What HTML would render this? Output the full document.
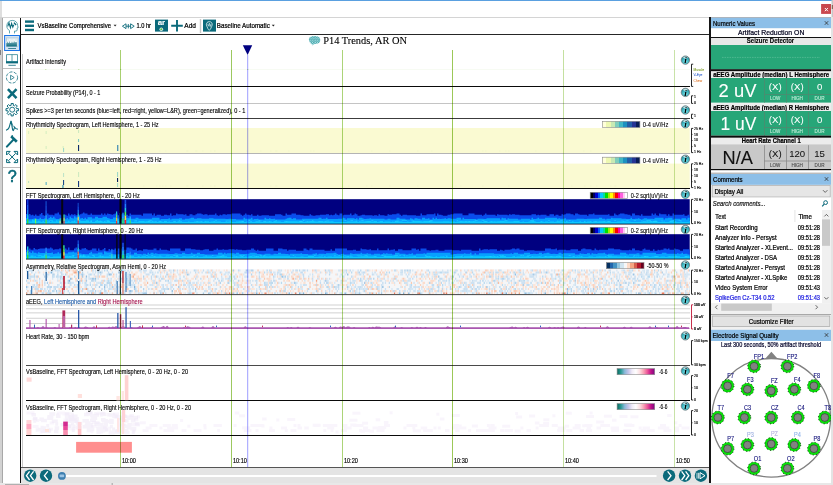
<!DOCTYPE html>
<html><head><meta charset="utf-8"><title>P14 Trends, AR ON</title>
<style>
html,body{margin:0;padding:0;background:#fff;overflow:hidden}
svg{display:block}
text{font-family:"Liberation Sans",sans-serif;white-space:pre}
text.sf{font-family:"Liberation Serif",serif}
</style></head><body>
<svg width="833" height="485" viewBox="0 0 833 485">
<rect x="0" y="0" width="833" height="485" fill="#fff" /><rect x="0" y="0" width="833" height="1" fill="#5aa0e0" /><rect x="0" y="1" width="2" height="17" fill="#dedede" /><rect x="0" y="17" width="3" height="468" fill="#d2d2d2" /><rect x="2" y="18" width="1" height="466" fill="#a8a8a8" /><rect x="0" y="50" width="1" height="5" fill="#808080" /><rect x="2" y="17" width="707" height="1" fill="#d4d4d4" /><rect x="711" y="17" width="120.5" height="1" fill="#aab4be" /><rect x="831.5" y="0" width="1.5" height="17" fill="#c8c8c8" /><rect x="831.8" y="5" width="1.2" height="4" fill="#8a6a5a" /><rect x="831" y="17" width="2" height="468" fill="#e4e4e4" /><rect x="0" y="483" width="833" height="2" fill="#e8e8e8" /><rect x="821.1" y="4" width="9.9" height="9.9" fill="#c9484e" /><path d="M824.9 8l3 3.200M827.900 8l-3 3.200" stroke="#fff" stroke-width="1" fill="none"/><rect x="5" y="484" width="24" height="1" fill="#b0b0b0" /><rect x="111.5" y="483.4" width="1.5" height="1.2" fill="#999" /><rect x="20" y="18" width="1" height="465" fill="#111" /><rect x="21" y="34" width="688" height="1" fill="#262626" /><rect x="22" y="54" width="1" height="413" fill="#c8c8c8" /><rect x="709" y="17" width="2" height="466" fill="#161616" /><rect x="25" y="20.4" width="9" height="2.4" fill="#0b6a7b" /><rect x="25" y="24.6" width="9" height="2.4" fill="#0b6a7b" /><rect x="25" y="28.8" width="9" height="2.4" fill="#0b6a7b" /><text x="37.5" y="27.92" font-size="7" fill="#000" stroke="#000" stroke-width="0.22" textLength="73.5" lengthAdjust="spacingAndGlyphs" >VsBaseline Comprehensive</text><path d="M113.6 24.8h3l-1.5 1.8z" fill="#222"/><g fill="none" stroke="#0b6a7b" stroke-width="0.9"><path d="M126 23.8l-3.6 2.4l3.6 2.4z"/><path d="M130.6 23.8l3.6 2.4l-3.6 2.4z"/><path d="M126 26.2h4.6M128.3 24v4.4"/></g><text x="136.4" y="27.92" font-size="7" fill="#000" stroke="#000" stroke-width="0.22" textLength="14.6" lengthAdjust="spacingAndGlyphs" >1.0 hr</text><rect x="155" y="19.6" width="13" height="12" fill="#0b6a7b" /><text x="161.4" y="25.30" font-size="7.9" fill="#fff" stroke="#fff" stroke-width="0.1" font-weight="bold" text-anchor="middle" >ar</text><circle cx="161.3" cy="29.200" r="1.800" fill="#e8f4f0"/><circle cx="161.300" cy="29.200" r="1.050" fill="#5cc040"/><path d="M177 20v11.4M171.2 25.7h11.6" stroke="#0b6a7b" stroke-width="1.9" fill="none"/><text x="184.3" y="27.92" font-size="7" fill="#000" stroke="#000" stroke-width="0.22" textLength="11.7" lengthAdjust="spacingAndGlyphs" >Add</text><rect x="199.8" y="19" width="1.4" height="14" fill="#c8c8c8" /><rect x="203" y="19.6" width="13" height="12" fill="#0b6a7b" /><path d="M209.300 21.700c-2.100 0-3 1.400-2.900 3c.1 1.500 .900 2.100 1.300 3.400c.3 1.100 .800 1.900 1.600 1.900s1.300-.8 1.600-1.900c.4-1.300 1.200-1.900 1.300-3.400c.1-1.600-.8-3-2.900-3z" fill="none" stroke="#e8f4f6" stroke-width="0.8"/><path d="M207.600 23.800l1 2.400l.8-3l.8 3.400l.9-2.800" fill="none" stroke="#e8f4f6" stroke-width="0.6"/><text x="216.8" y="27.92" font-size="7" fill="#000" stroke="#000" stroke-width="0.22" textLength="53" lengthAdjust="spacingAndGlyphs" >Baseline Automatic</text><path d="M271.8 24.8h3l-1.5 1.8z" fill="#222"/><g fill="none" stroke="#2a8796" stroke-width="0.75"><path d="M9.5 33.4v-2.8c-1.7-1-2.7-2.7-2.7-4.700c0-3.1 2.400-5.500 5.500-5.500s5.300 2.200 5.300 5.100l.5 2.100l-.9 .4v1.900c0 .8-.6 1.200-1.400 1.200h-1.300v2.300"/></g><path d="M7.800 26.400l1.200-3.600l1.400 5l1.200-4.400l1.200 3.800l1-2.400" fill="none" stroke="#0b6a7b" stroke-width="1.05"/><path d="M14 22.600l2 2.400" fill="none" stroke="#0b6a7b" stroke-width="1.4"/><rect x="4.6" y="35.5" width="14.9" height="15" fill="#d3e3f5" stroke="#1b76e6" stroke-width="1"/><defs><linearGradient id="mon" x1="0" y1="0" x2="0" y2="1"><stop offset="0" stop-color="#8fb6c2"/><stop offset="0.6" stop-color="#4a909e"/><stop offset="1" stop-color="#0b6a7b"/></linearGradient></defs><rect x="6.3" y="37.9" width="11.8" height="8.8" fill="#dfeaf0" stroke="#9dbcc6" stroke-width="0.5"/><path d="M6.4 46.600v-3.400l1.200-2.800l1.100 2.400l1.100-3.600l1 3.800l1.200-3.200l1 2.800l1.100-3.400l1 3l.9-1.400l.9 1.600v4.200z" fill="url(#mon)"/><path d="M6.600 43l1-2.600l1.100 2.400l1.100-3.600l1 3.800l1.200-3.200l1 2.800l1.100-3.400l1 3l.9-1.400l.8 1.400" fill="none" stroke="#fff" stroke-width="0.8"/><rect x="8.2" y="48" width="7.8" height="1" fill="#3f8796" /><g fill="none" stroke="#2f8594" stroke-width="0.8"><path d="M6.5 54.6h11v7.6h-11z"/><path d="M12 54.6v6.6"/></g><rect x="6" y="61.2" width="12" height="2.2" fill="#0b6a7b" /><rect x="8.4" y="64.8" width="7.4" height="1" fill="#3f8796" /><rect x="3" y="68" width="17" height="1" fill="#bdbdbd" /><g fill="none" stroke="#0b6a7b" stroke-width="0.9" stroke-opacity="0.85"><circle cx="12" cy="77.5" r="5.6" stroke-dasharray="3.2 1.4"/><path d="M10.6 75.2l3.6 2.3l-3.6 2.3z"/></g><path d="M7.9 89.1l8.6 9M16.5 89.1l-8.6 9" fill="none" stroke="#0b6a7b" stroke-width="2.5"/><path d="M18.41 108.63L18.41 110.77L16.57 110.77L16.05 112.03L17.34 113.34L15.84 114.84L14.53 113.55L13.27 114.07L13.27 115.91L11.13 115.91L11.13 114.07L9.87 113.55L8.56 114.84L7.06 113.34L8.35 112.03L7.83 110.77L5.99 110.77L5.99 108.63L7.83 108.63L8.35 107.37L7.06 106.06L8.56 104.56L9.87 105.85L11.13 105.33L11.13 103.49L13.27 103.49L13.27 105.33L14.53 105.85L15.84 104.56L17.34 106.06L16.05 107.37L16.57 108.63z" fill="none" stroke="#0b6a7b" stroke-width="1" stroke-linejoin="round"/><circle cx="12.2" cy="109.7" r="2.5" fill="none" stroke="#0b6a7b" stroke-width="0.9"/><path d="M6 130.2c1.6-.4 2.4-1 3-2.4l2-7l1.6 8.8c.4 1.4.8 1.4 1.2 0l.8-2.4c.6 1.2 1.6 1.8 3.4 2" fill="none" stroke="#0b6a7b" stroke-width="1.1"/><path d="M11 121l2.4 6" fill="none" stroke="#0b6a7b" stroke-width="0.7"/><path d="M6.900 146.600l6.800-7.200" fill="none" stroke="#0b6a7b" stroke-width="2.1" stroke-linecap="round"/><path d="M11.200 136.400l5.600 5.400" fill="none" stroke="#0b6a7b" stroke-width="2.7"/><path d="M11.200 136.400l1.600-1" fill="none" stroke="#0b6a7b" stroke-width="1.2"/><g fill="none" stroke="#0b6a7b" stroke-width="1"><path d="M6.6 151.4h3.6l-3.6 3.6zM17.6 151.4h-3.6l3.6 3.6zM6.6 162.6h3.6l-3.6-3.6zM17.6 162.6h-3.6l3.6-3.6z"/><path d="M8.6 153.4l7 7.2M15.6 153.4l-7 7.2"/></g><rect x="3" y="167" width="17" height="1" fill="#bdbdbd" /><text x="12.3" y="182.10" font-size="16.2" fill="#0b6a7b" stroke="#0b6a7b" stroke-width="0.55" text-anchor="middle" >?</text><defs><pattern id="mesh" width="2.5" height="2.2" patternUnits="userSpaceOnUse" patternTransform="translate(308.2 36.2)"><rect width="2.5" height="2.2" fill="#168e96"/><ellipse cx="0.7" cy="0.55" rx="0.72" ry="0.5" fill="#e4ffff"/><ellipse cx="1.95" cy="1.65" rx="0.72" ry="0.5" fill="#e4ffff"/></pattern></defs><path d="M309 40.2c-.6-1.8.6-3.4 2.6-3.8c2-.6 4.400-.6 6.200.2c2 .8 2.800 2.600 2.400 4.400c-.4 1.600-2 2.600-3.800 2.800c-1 .2-2 .2-2.800 .4l-1 1.400l-.8-1.400c-1.400-.6-2.400-2.200-2.800-4z" fill="url(#mesh)" fill-opacity="0.92"/><text x="323.2" y="44.20" font-size="10.6" fill="#000" stroke="#000" stroke-width="0.1" class="sf" textLength="83.8" lengthAdjust="spacingAndGlyphs" >P14 Trends, AR ON</text><rect x="26" y="86" width="664" height="1" fill="#0a0a0a" /><rect x="26" y="103" width="664" height="1" fill="#c4c4c4" /><rect x="26" y="118" width="664" height="1" fill="#3c3c3c" /><rect x="26" y="153" width="664" height="1" fill="#b4b4b4" /><rect x="26" y="188" width="664" height="1" fill="#0a0a0a" /><rect x="26" y="365" width="664" height="1" fill="#4a4a4a" /><rect x="26" y="400" width="664" height="1" fill="#0a0a0a" /><rect x="26" y="435" width="664" height="1" fill="#0a0a0a" /><rect x="26" y="69" width="664" height="1" fill="#f7fbf3" /><rect x="45" y="69" width="1.4" height="1" fill="#cfe8b8" /><rect x="61" y="69" width="1.4" height="1" fill="#cfe8b8" /><rect x="78" y="69" width="1.4" height="1" fill="#cfe8b8" /><rect x="120" y="69" width="1.4" height="1" fill="#cfe8b8" /><rect x="247" y="69" width="1.4" height="1" fill="#cfe8b8" /><rect x="26" y="128" width="663.7" height="25" fill="#fafad2" /><rect x="26" y="163.6" width="663.7" height="24.4" fill="#fafad2" /><rect x="78" y="145" width="1.1" height="6" fill="#0d2a6a" /><rect x="117.2" y="145" width="1.1" height="6" fill="#2c7fb0" /><rect x="78" y="139" width="1.1" height="3" fill="#7fc8c0" /><rect x="63" y="148" width="1.1" height="4" fill="#9fd8c8" /><rect x="45.6" y="131" width="1.1" height="3" fill="#d6eec0" /><rect x="28" y="131" width="1.1" height="3" fill="#dcf0c4" /><rect x="45.6" y="146" width="1.1" height="3" fill="#d6eec0" /><rect x="62.6" y="146" width="1.1" height="2" fill="#d6eec0" /><rect x="78" y="130" width="1.1" height="3" fill="#cfeac0" /><rect x="63" y="180" width="1.1" height="5" fill="#1a4a8a" /><rect x="62.4" y="185" width="1.1" height="3" fill="#2a8ab0" /><rect x="78" y="181" width="1.1" height="6" fill="#1a3a80" /><rect x="117" y="178" width="1.1" height="4" fill="#0d2060" /><rect x="117" y="172" width="1.1" height="5" fill="#9fd8c8" /><rect x="45.6" y="182" width="1.1" height="3" fill="#58b0c8" /><rect x="28" y="181" width="1.1" height="2" fill="#bfe4c8" /><rect x="63" y="173" width="1.1" height="4" fill="#bfe4c8" /><rect x="78" y="172" width="1.1" height="5" fill="#cfeac0" /><rect x="117" y="183" width="1.1" height="4" fill="#a8dcc8" /><rect x="310" y="150.5" width="1.5" height="1" fill="#f1f6cc" /><rect x="170" y="185.5" width="1.5" height="1" fill="#f1f6cc" /><rect x="162" y="185.5" width="1.5" height="1" fill="#f1f6cc" /><rect x="371" y="150.5" width="1.5" height="1" fill="#f1f6cc" /><rect x="371" y="185.5" width="1.5" height="1" fill="#f1f6cc" /><rect x="366" y="185.5" width="1.5" height="1" fill="#f1f6cc" /><rect x="450" y="150.5" width="1.5" height="1" fill="#f1f6cc" /><rect x="156" y="185.5" width="1.5" height="1" fill="#f1f6cc" /><rect x="210" y="150.5" width="1.5" height="1" fill="#f1f6cc" /><rect x="210" y="185.5" width="1.5" height="1" fill="#f1f6cc" /><rect x="583" y="150.5" width="1.5" height="1" fill="#f1f6cc" /><rect x="485" y="150.5" width="1.5" height="1" fill="#f1f6cc" /><rect x="165" y="150.5" width="1.5" height="1" fill="#f1f6cc" /><rect x="165" y="185.5" width="1.5" height="1" fill="#f1f6cc" /><rect x="508" y="150.5" width="1.5" height="1" fill="#f1f6cc" /><rect x="508" y="185.5" width="1.5" height="1" fill="#f1f6cc" /><rect x="455" y="150.5" width="1.5" height="1" fill="#f1f6cc" /><rect x="455" y="185.5" width="1.5" height="1" fill="#f1f6cc" /><rect x="571" y="185.5" width="1.5" height="1" fill="#f1f6cc" /><rect x="535" y="150.5" width="1.5" height="1" fill="#f1f6cc" /><rect x="196" y="150.5" width="1.5" height="1" fill="#f1f6cc" /><rect x="214" y="150.5" width="1.5" height="1" fill="#f1f6cc" /><rect x="214" y="185.5" width="1.5" height="1" fill="#f1f6cc" /><rect x="616" y="150.5" width="1.5" height="1" fill="#f1f6cc" /><rect x="460" y="185.5" width="1.5" height="1" fill="#f1f6cc" /><rect x="596" y="185.5" width="1.5" height="1" fill="#f1f6cc" /><rect x="499" y="150.5" width="1.5" height="1" fill="#f1f6cc" /><rect x="288" y="150.5" width="1.5" height="1" fill="#f1f6cc" /><rect x="143" y="150.5" width="1.5" height="1" fill="#f1f6cc" /><rect x="143" y="185.5" width="1.5" height="1" fill="#f1f6cc" /><rect x="195" y="150.5" width="1.5" height="1" fill="#f1f6cc" /><rect x="202" y="150.5" width="1.5" height="1" fill="#f1f6cc" /><rect x="202" y="185.5" width="1.5" height="1" fill="#f1f6cc" /><rect x="614" y="150.5" width="1.5" height="1" fill="#f1f6cc" /><rect x="614" y="185.5" width="1.5" height="1" fill="#f1f6cc" /><rect x="610" y="150.5" width="1.5" height="1" fill="#f1f6cc" /><rect x="610" y="185.5" width="1.5" height="1" fill="#f1f6cc" /><rect x="214" y="150.5" width="1.5" height="1" fill="#f1f6cc" /><rect x="214" y="185.5" width="1.5" height="1" fill="#f1f6cc" /><rect x="260" y="150.5" width="1.5" height="1" fill="#f1f6cc" /><rect x="276" y="150.5" width="1.5" height="1" fill="#f1f6cc" /><rect x="276" y="185.5" width="1.5" height="1" fill="#f1f6cc" /><rect x="505" y="150.5" width="1.5" height="1" fill="#f1f6cc" /><rect x="348" y="150.5" width="1.5" height="1" fill="#f1f6cc" /><rect x="348" y="185.5" width="1.5" height="1" fill="#f1f6cc" /><rect x="482" y="150.5" width="1.5" height="1" fill="#f1f6cc" /><rect x="482" y="185.5" width="1.5" height="1" fill="#f1f6cc" /><rect x="246" y="150.5" width="1.5" height="1" fill="#f1f6cc" /><rect x="246" y="185.5" width="1.5" height="1" fill="#f1f6cc" /><rect x="159" y="150.5" width="1.5" height="1" fill="#f1f6cc" /><rect x="159" y="185.5" width="1.5" height="1" fill="#f1f6cc" /><rect x="186" y="150.5" width="1.5" height="1" fill="#f1f6cc" /><rect x="186" y="185.5" width="1.5" height="1" fill="#f1f6cc" /><rect x="615" y="185.5" width="1.5" height="1" fill="#f1f6cc" /><rect x="270" y="150.5" width="1.5" height="1" fill="#f1f6cc" /><rect x="270" y="185.5" width="1.5" height="1" fill="#f1f6cc" /><rect x="389" y="150.5" width="1.5" height="1" fill="#f1f6cc" /><rect x="389" y="185.5" width="1.5" height="1" fill="#f1f6cc" /><rect x="187" y="150.5" width="1.5" height="1" fill="#f1f6cc" /><rect x="187" y="185.5" width="1.5" height="1" fill="#f1f6cc" /><rect x="590" y="150.5" width="1.5" height="1" fill="#f1f6cc" /><rect x="590" y="185.5" width="1.5" height="1" fill="#f1f6cc" /><rect x="658" y="185.5" width="1.5" height="1" fill="#f1f6cc" /><rect x="431" y="150.5" width="1.5" height="1" fill="#f1f6cc" /><rect x="275" y="150.5" width="1.5" height="1" fill="#f1f6cc" /><rect x="275" y="185.5" width="1.5" height="1" fill="#f1f6cc" /><rect x="313" y="150.5" width="1.5" height="1" fill="#f1f6cc" /><rect x="584" y="185.5" width="1.5" height="1" fill="#f1f6cc" /><rect x="417" y="150.5" width="1.5" height="1" fill="#f1f6cc" /><rect x="417" y="185.5" width="1.5" height="1" fill="#f1f6cc" /><rect x="26" y="199.2" width="663.7" height="24.5" fill="#000080" /><path d="M26 223.7L26.0 214.1L27.5 214.1L27.5 215.3L29.0 215.3L29.0 214.1L30.5 214.1L30.5 215.3L32.0 215.3L32.0 214.8L33.5 214.8L33.5 215.7L35.0 215.7L35.0 214.5L36.5 214.5L36.5 215.7L38.0 215.7L38.0 215.7L39.5 215.7L39.5 214.2L41.0 214.2L41.0 213.0L42.5 213.0L42.5 215.3L44.0 215.3L44.0 215.7L45.5 215.7L45.5 215.7L47.0 215.7L47.0 213.6L48.5 213.6L48.5 214.8L50.0 214.8L50.0 214.8L51.5 214.8L51.5 214.8L53.0 214.8L53.0 215.3L54.5 215.3L54.5 213.6L56.0 213.6L56.0 213.6L57.5 213.6L57.5 212.4L59.0 212.4L59.0 214.5L60.5 214.5L60.5 215.3L62.0 215.3L62.0 215.3L63.5 215.3L63.5 214.8L65.0 214.8L65.0 214.8L66.5 214.8L66.5 215.7L68.0 215.7L68.0 213.6L69.5 213.6L69.5 215.3L71.0 215.3L71.0 214.2L72.5 214.2L72.5 214.8L74.0 214.8L74.0 214.2L75.5 214.2L75.5 215.3L77.0 215.3L77.0 215.3L78.5 215.3L78.5 214.8L80.0 214.8L80.0 214.2L81.5 214.2L81.5 213.6L83.0 213.6L83.0 212.4L84.5 212.4L84.5 213.6L86.0 213.6L86.0 213.6L87.5 213.6L87.5 214.8L89.0 214.8L89.0 214.8L90.5 214.8L90.5 213.6L92.0 213.6L92.0 214.8L93.5 214.8L93.5 214.8L95.0 214.8L95.0 214.8L96.5 214.8L96.5 214.8L98.0 214.8L98.0 214.8L99.5 214.8L99.5 214.8L101.0 214.8L101.0 213.6L102.5 213.6L102.5 214.8L104.0 214.8L104.0 213.6L105.5 213.6L105.5 214.8L107.0 214.8L107.0 213.6L108.5 213.6L108.5 214.1L110.0 214.1L110.0 214.2L111.5 214.2L111.5 214.8L113.0 214.8L113.0 214.2L114.5 214.2L114.5 213.6L116.0 213.6L116.0 213.6L117.5 213.6L117.5 215.3L119.0 215.3L119.0 213.0L120.5 213.0L120.5 214.2L122.0 214.2L122.0 214.2L123.5 214.2L123.5 214.8L125.0 214.8L125.0 214.8L126.5 214.8L126.5 214.8L128.0 214.8L128.0 215.7L129.5 215.7L129.5 213.6L131.0 213.6L131.0 214.8L132.5 214.8L132.5 214.8L134.0 214.8L134.0 214.8L135.5 214.8L135.5 214.8L137.0 214.8L137.0 214.8L138.5 214.8L138.5 214.8L140.0 214.8L140.0 214.8L141.5 214.8L141.5 215.7L143.0 215.7L143.0 213.6L144.5 213.6L144.5 213.6L146.0 213.6L146.0 213.6L147.5 213.6L147.5 213.6L149.0 213.6L149.0 213.6L150.5 213.6L150.5 213.6L152.0 213.6L152.0 215.3L153.5 215.3L153.5 213.6L155.0 213.6L155.0 215.7L156.5 215.7L156.5 214.8L158.0 214.8L158.0 214.8L159.5 214.8L159.5 214.8L161.0 214.8L161.0 215.7L162.5 215.7L162.5 215.7L164.0 215.7L164.0 214.8L165.5 214.8L165.5 214.8L167.0 214.8L167.0 215.3L168.5 215.3L168.5 215.3L170.0 215.3L170.0 213.6L171.5 213.6L171.5 215.7L173.0 215.7L173.0 215.3L174.5 215.3L174.5 215.3L176.0 215.3L176.0 213.6L177.5 213.6L177.5 214.2L179.0 214.2L179.0 214.2L180.5 214.2L180.5 214.2L182.0 214.2L182.0 214.2L183.5 214.2L183.5 214.8L185.0 214.8L185.0 214.2L186.5 214.2L186.5 215.7L188.0 215.7L188.0 215.7L189.5 215.7L189.5 214.2L191.0 214.2L191.0 214.2L192.5 214.2L192.5 215.3L194.0 215.3L194.0 215.3L195.5 215.3L195.5 214.2L197.0 214.2L197.0 213.6L198.5 213.6L198.5 213.6L200.0 213.6L200.0 213.6L201.5 213.6L201.5 214.2L203.0 214.2L203.0 214.8L204.5 214.8L204.5 214.2L206.0 214.2L206.0 214.2L207.5 214.2L207.5 215.3L209.0 215.3L209.0 214.8L210.5 214.8L210.5 214.8L212.0 214.8L212.0 214.8L213.5 214.8L213.5 214.8L215.0 214.8L215.0 213.6L216.5 213.6L216.5 215.3L218.0 215.3L218.0 215.7L219.5 215.7L219.5 214.8L221.0 214.8L221.0 215.3L222.5 215.3L222.5 214.2L224.0 214.2L224.0 214.2L225.5 214.2L225.5 214.8L227.0 214.8L227.0 214.2L228.5 214.2L228.5 214.2L230.0 214.2L230.0 214.2L231.5 214.2L231.5 213.6L233.0 213.6L233.0 213.6L234.5 213.6L234.5 213.6L236.0 213.6L236.0 213.6L237.5 213.6L237.5 213.6L239.0 213.6L239.0 213.6L240.5 213.6L240.5 214.8L242.0 214.8L242.0 215.7L243.5 215.7L243.5 214.8L245.0 214.8L245.0 213.6L246.5 213.6L246.5 214.8L248.0 214.8L248.0 214.8L249.5 214.8L249.5 215.3L251.0 215.3L251.0 214.2L252.5 214.2L252.5 215.7L254.0 215.7L254.0 215.7L255.5 215.7L255.5 215.7L257.0 215.7L257.0 214.8L258.5 214.8L258.5 215.7L260.0 215.7L260.0 215.7L261.5 215.7L261.5 215.3L263.0 215.3L263.0 215.3L264.5 215.3L264.5 215.3L266.0 215.3L266.0 215.3L267.5 215.3L267.5 215.3L269.0 215.3L269.0 215.7L270.5 215.7L270.5 215.7L272.0 215.7L272.0 215.7L273.5 215.7L273.5 215.7L275.0 215.7L275.0 214.2L276.5 214.2L276.5 214.2L278.0 214.2L278.0 214.2L279.5 214.2L279.5 214.2L281.0 214.2L281.0 214.8L282.5 214.8L282.5 215.7L284.0 215.7L284.0 215.7L285.5 215.7L285.5 213.6L287.0 213.6L287.0 214.8L288.5 214.8L288.5 214.8L290.0 214.8L290.0 214.8L291.5 214.8L291.5 213.6L293.0 213.6L293.0 213.6L294.5 213.6L294.5 213.6L296.0 213.6L296.0 214.8L297.5 214.8L297.5 214.8L299.0 214.8L299.0 214.8L300.5 214.8L300.5 215.3L302.0 215.3L302.0 215.3L303.5 215.3L303.5 215.7L305.0 215.7L305.0 215.7L306.5 215.7L306.5 215.7L308.0 215.7L308.0 215.7L309.5 215.7L309.5 214.2L311.0 214.2L311.0 215.3L312.5 215.3L312.5 215.7L314.0 215.7L314.0 215.7L315.5 215.7L315.5 215.3L317.0 215.3L317.0 215.3L318.5 215.3L318.5 215.3L320.0 215.3L320.0 214.8L321.5 214.8L321.5 214.8L323.0 214.8L323.0 214.8L324.5 214.8L324.5 214.8L326.0 214.8L326.0 214.2L327.5 214.2L327.5 214.2L329.0 214.2L329.0 215.3L330.5 215.3L330.5 214.8L332.0 214.8L332.0 215.3L333.5 215.3L333.5 214.8L335.0 214.8L335.0 213.6L336.5 213.6L336.5 214.8L338.0 214.8L338.0 215.3L339.5 215.3L339.5 213.6L341.0 213.6L341.0 213.6L342.5 213.6L342.5 215.3L344.0 215.3L344.0 214.8L345.5 214.8L345.5 214.8L347.0 214.8L347.0 214.8L348.5 214.8L348.5 214.8L350.0 214.8L350.0 213.6L351.5 213.6L351.5 215.3L353.0 215.3L353.0 214.8L354.5 214.8L354.5 213.6L356.0 213.6L356.0 214.2L357.5 214.2L357.5 215.7L359.0 215.7L359.0 215.7L360.5 215.7L360.5 215.3L362.0 215.3L362.0 214.8L363.5 214.8L363.5 214.8L365.0 214.8L365.0 215.3L366.5 215.3L366.5 215.3L368.0 215.3L368.0 215.3L369.5 215.3L369.5 215.3L371.0 215.3L371.0 215.3L372.5 215.3L372.5 215.7L374.0 215.7L374.0 215.3L375.5 215.3L375.5 215.3L377.0 215.3L377.0 215.7L378.5 215.7L378.5 214.2L380.0 214.2L380.0 215.3L381.5 215.3L381.5 215.3L383.0 215.3L383.0 215.3L384.5 215.3L384.5 215.7L386.0 215.7L386.0 215.7L387.5 215.7L387.5 214.2L389.0 214.2L389.0 214.8L390.5 214.8L390.5 214.8L392.0 214.8L392.0 214.2L393.5 214.2L393.5 214.2L395.0 214.2L395.0 214.2L396.5 214.2L396.5 213.6L398.0 213.6L398.0 213.6L399.5 213.6L399.5 214.8L401.0 214.8L401.0 215.7L402.5 215.7L402.5 214.8L404.0 214.8L404.0 214.8L405.5 214.8L405.5 214.8L407.0 214.8L407.0 215.3L408.5 215.3L408.5 215.3L410.0 215.3L410.0 215.3L411.5 215.3L411.5 215.3L413.0 215.3L413.0 215.3L414.5 215.3L414.5 215.3L416.0 215.3L416.0 215.7L417.5 215.7L417.5 215.7L419.0 215.7L419.0 215.7L420.5 215.7L420.5 213.6L422.0 213.6L422.0 215.3L423.5 215.3L423.5 215.3L425.0 215.3L425.0 215.3L426.5 215.3L426.5 214.2L428.0 214.2L428.0 214.2L429.5 214.2L429.5 214.2L431.0 214.2L431.0 214.2L432.5 214.2L432.5 214.2L434.0 214.2L434.0 213.6L435.5 213.6L435.5 215.7L437.0 215.7L437.0 213.6L438.5 213.6L438.5 214.8L440.0 214.8L440.0 214.8L441.5 214.8L441.5 215.3L443.0 215.3L443.0 215.7L444.5 215.7L444.5 215.7L446.0 215.7L446.0 215.7L447.5 215.7L447.5 214.8L449.0 214.8L449.0 214.8L450.5 214.8L450.5 214.2L452.0 214.2L452.0 214.2L453.5 214.2L453.5 213.6L455.0 213.6L455.0 213.6L456.5 213.6L456.5 213.6L458.0 213.6L458.0 213.6L459.5 213.6L459.5 213.6L461.0 213.6L461.0 213.6L462.5 213.6L462.5 215.3L464.0 215.3L464.0 215.3L465.5 215.3L465.5 215.3L467.0 215.3L467.0 215.3L468.5 215.3L468.5 213.6L470.0 213.6L470.0 213.6L471.5 213.6L471.5 213.6L473.0 213.6L473.0 213.6L474.5 213.6L474.5 214.8L476.0 214.8L476.0 214.8L477.5 214.8L477.5 214.8L479.0 214.8L479.0 214.8L480.5 214.8L480.5 214.8L482.0 214.8L482.0 215.7L483.5 215.7L483.5 214.8L485.0 214.8L485.0 213.6L486.5 213.6L486.5 214.8L488.0 214.8L488.0 214.8L489.5 214.8L489.5 214.8L491.0 214.8L491.0 214.8L492.5 214.8L492.5 214.8L494.0 214.8L494.0 214.8L495.5 214.8L495.5 215.7L497.0 215.7L497.0 214.2L498.5 214.2L498.5 214.8L500.0 214.8L500.0 214.8L501.5 214.8L501.5 214.8L503.0 214.8L503.0 214.8L504.5 214.8L504.5 214.8L506.0 214.8L506.0 214.8L507.5 214.8L507.5 215.3L509.0 215.3L509.0 214.2L510.5 214.2L510.5 214.8L512.0 214.8L512.0 214.2L513.5 214.2L513.5 214.2L515.0 214.2L515.0 214.8L516.5 214.8L516.5 214.8L518.0 214.8L518.0 214.8L519.5 214.8L519.5 215.3L521.0 215.3L521.0 215.3L522.5 215.3L522.5 215.3L524.0 215.3L524.0 215.3L525.5 215.3L525.5 215.3L527.0 215.3L527.0 215.3L528.5 215.3L528.5 215.3L530.0 215.3L530.0 215.3L531.5 215.3L531.5 214.2L533.0 214.2L533.0 214.2L534.5 214.2L534.5 214.2L536.0 214.2L536.0 215.3L537.5 215.3L537.5 214.8L539.0 214.8L539.0 215.3L540.5 215.3L540.5 214.8L542.0 214.8L542.0 214.8L543.5 214.8L543.5 214.8L545.0 214.8L545.0 214.8L546.5 214.8L546.5 215.7L548.0 215.7L548.0 215.7L549.5 215.7L549.5 214.2L551.0 214.2L551.0 214.2L552.5 214.2L552.5 214.2L554.0 214.2L554.0 215.7L555.5 215.7L555.5 214.8L557.0 214.8L557.0 214.8L558.5 214.8L558.5 215.7L560.0 215.7L560.0 215.7L561.5 215.7L561.5 214.2L563.0 214.2L563.0 214.8L564.5 214.8L564.5 214.2L566.0 214.2L566.0 213.6L567.5 213.6L567.5 213.6L569.0 213.6L569.0 213.6L570.5 213.6L570.5 214.2L572.0 214.2L572.0 214.2L573.5 214.2L573.5 215.3L575.0 215.3L575.0 213.6L576.5 213.6L576.5 213.6L578.0 213.6L578.0 214.2L579.5 214.2L579.5 214.8L581.0 214.8L581.0 214.8L582.5 214.8L582.5 214.8L584.0 214.8L584.0 214.8L585.5 214.8L585.5 214.8L587.0 214.8L587.0 215.7L588.5 215.7L588.5 214.2L590.0 214.2L590.0 214.2L591.5 214.2L591.5 214.2L593.0 214.2L593.0 213.6L594.5 213.6L594.5 214.8L596.0 214.8L596.0 214.8L597.5 214.8L597.5 214.8L599.0 214.8L599.0 214.8L600.5 214.8L600.5 214.8L602.0 214.8L602.0 214.8L603.5 214.8L603.5 214.8L605.0 214.8L605.0 214.8L606.5 214.8L606.5 214.8L608.0 214.8L608.0 214.2L609.5 214.2L609.5 215.7L611.0 215.7L611.0 215.7L612.5 215.7L612.5 215.7L614.0 215.7L614.0 213.6L615.5 213.6L615.5 214.8L617.0 214.8L617.0 215.3L618.5 215.3L618.5 214.2L620.0 214.2L620.0 213.6L621.5 213.6L621.5 213.6L623.0 213.6L623.0 213.6L624.5 213.6L624.5 214.2L626.0 214.2L626.0 214.2L627.5 214.2L627.5 214.8L629.0 214.8L629.0 214.8L630.5 214.8L630.5 215.7L632.0 215.7L632.0 213.6L633.5 213.6L633.5 213.6L635.0 213.6L635.0 215.3L636.5 215.3L636.5 215.3L638.0 215.3L638.0 215.3L639.5 215.3L639.5 215.7L641.0 215.7L641.0 214.2L642.5 214.2L642.5 215.7L644.0 215.7L644.0 215.7L645.5 215.7L645.5 215.7L647.0 215.7L647.0 215.7L648.5 215.7L648.5 215.7L650.0 215.7L650.0 215.7L651.5 215.7L651.5 213.6L653.0 213.6L653.0 214.8L654.5 214.8L654.5 213.6L656.0 213.6L656.0 215.3L657.5 215.3L657.5 215.7L659.0 215.7L659.0 213.6L660.5 213.6L660.5 214.2L662.0 214.2L662.0 214.2L663.5 214.2L663.5 214.2L665.0 214.2L665.0 214.2L666.5 214.2L666.5 215.7L668.0 215.7L668.0 214.2L669.5 214.2L669.5 215.7L671.0 215.7L671.0 215.7L672.5 215.7L672.5 213.6L674.0 213.6L674.0 214.8L675.5 214.8L675.5 214.8L677.0 214.8L677.0 214.8L678.5 214.8L678.5 214.8L680.0 214.8L680.0 214.8L681.5 214.8L681.5 214.8L683.0 214.8L683.0 214.2L684.5 214.2L684.5 215.7L686.0 215.7L686.0 215.7L687.5 215.7L687.5 214.8L689.0 214.8L689.0 214.8L689.7 214.8L689.7 223.7z" fill="#0a4cec"/><path d="M26 223.7L26.0 218.0L27.5 218.0L27.5 219.2L29.0 219.2L29.0 219.2L30.5 219.2L30.5 219.2L32.0 219.2L32.0 219.2L33.5 219.2L33.5 218.5L35.0 218.5L35.0 218.5L36.5 218.5L36.5 218.9L38.0 218.9L38.0 218.9L39.5 218.9L39.5 217.7L41.0 217.7L41.0 218.9L42.5 218.9L42.5 218.9L44.0 218.9L44.0 218.5L45.5 218.5L45.5 218.5L47.0 218.5L47.0 219.2L48.5 219.2L48.5 218.0L50.0 218.0L50.0 216.8L51.5 216.8L51.5 218.0L53.0 218.0L53.0 216.8L54.5 216.8L54.5 218.5L56.0 218.5L56.0 218.9L57.5 218.9L57.5 218.9L59.0 218.9L59.0 219.2L60.5 219.2L60.5 218.0L62.0 218.0L62.0 218.0L63.5 218.0L63.5 219.2L65.0 219.2L65.0 219.2L66.5 219.2L66.5 218.0L68.0 218.0L68.0 219.2L69.5 219.2L69.5 216.8L71.0 216.8L71.0 218.0L72.5 218.0L72.5 218.5L74.0 218.5L74.0 216.3L75.5 216.3L75.5 217.5L77.0 217.5L77.0 217.5L78.5 217.5L78.5 216.3L80.0 216.3L80.0 218.5L81.5 218.5L81.5 218.0L83.0 218.0L83.0 218.9L84.5 218.9L84.5 217.7L86.0 217.7L86.0 218.9L87.5 218.9L87.5 217.3L89.0 217.3L89.0 217.3L90.5 217.3L90.5 217.3L92.0 217.3L92.0 218.5L93.5 218.5L93.5 218.5L95.0 218.5L95.0 216.8L96.5 216.8L96.5 216.8L98.0 216.8L98.0 218.0L99.5 218.0L99.5 218.0L101.0 218.0L101.0 218.0L102.5 218.0L102.5 216.8L104.0 216.8L104.0 216.8L105.5 216.8L105.5 216.8L107.0 216.8L107.0 218.0L108.5 218.0L108.5 218.5L110.0 218.5L110.0 218.9L111.5 218.9L111.5 218.9L113.0 218.9L113.0 217.5L114.5 217.5L114.5 217.5L116.0 217.5L116.0 218.0L117.5 218.0L117.5 218.5L119.0 218.5L119.0 217.3L120.5 217.3L120.5 219.2L122.0 219.2L122.0 216.8L123.5 216.8L123.5 219.2L125.0 219.2L125.0 218.0L126.5 218.0L126.5 217.7L128.0 217.7L128.0 218.0L129.5 218.0L129.5 218.5L131.0 218.5L131.0 218.7L132.5 218.7L132.5 218.7L134.0 218.7L134.0 218.7L135.5 218.7L135.5 217.7L137.0 217.7L137.0 217.7L138.5 217.7L138.5 218.7L140.0 218.7L140.0 218.7L141.5 218.7L141.5 218.7L143.0 218.7L143.0 218.7L144.5 218.7L144.5 218.7L146.0 218.7L146.0 218.7L147.5 218.7L147.5 218.7L149.0 218.7L149.0 218.7L150.5 218.7L150.5 218.7L152.0 218.7L152.0 217.7L153.5 217.7L153.5 217.7L155.0 217.7L155.0 217.7L156.5 217.7L156.5 217.7L158.0 217.7L158.0 217.7L159.5 217.7L159.5 219.4L161.0 219.4L161.0 219.1L162.5 219.1L162.5 219.1L164.0 219.1L164.0 219.1L165.5 219.1L165.5 219.1L167.0 219.1L167.0 219.1L168.5 219.1L168.5 218.2L170.0 218.2L170.0 219.4L171.5 219.4L171.5 218.7L173.0 218.7L173.0 218.7L174.5 218.7L174.5 218.7L176.0 218.7L176.0 218.7L177.5 218.7L177.5 218.7L179.0 218.7L179.0 218.2L180.5 218.2L180.5 218.2L182.0 218.2L182.0 219.4L183.5 219.4L183.5 219.4L185.0 219.4L185.0 218.7L186.5 218.7L186.5 218.7L188.0 218.7L188.0 218.7L189.5 218.7L189.5 218.2L191.0 218.2L191.0 217.7L192.5 217.7L192.5 217.7L194.0 217.7L194.0 218.7L195.5 218.7L195.5 218.7L197.0 218.7L197.0 218.2L198.5 218.2L198.5 218.2L200.0 218.2L200.0 218.2L201.5 218.2L201.5 218.7L203.0 218.7L203.0 218.7L204.5 218.7L204.5 218.7L206.0 218.7L206.0 218.7L207.5 218.7L207.5 218.7L209.0 218.7L209.0 218.2L210.5 218.2L210.5 218.2L212.0 218.2L212.0 218.2L213.5 218.2L213.5 218.7L215.0 218.7L215.0 218.7L216.5 218.7L216.5 218.7L218.0 218.7L218.0 218.7L219.5 218.7L219.5 218.7L221.0 218.7L221.0 218.7L222.5 218.7L222.5 218.7L224.0 218.7L224.0 218.7L225.5 218.7L225.5 219.1L227.0 219.1L227.0 219.1L228.5 219.1L228.5 218.7L230.0 218.7L230.0 218.7L231.5 218.7L231.5 219.1L233.0 219.1L233.0 219.1L234.5 219.1L234.5 219.1L236.0 219.1L236.0 219.4L237.5 219.4L237.5 219.4L239.0 219.4L239.0 219.4L240.5 219.4L240.5 219.4L242.0 219.4L242.0 219.4L243.5 219.4L243.5 217.7L245.0 217.7L245.0 218.7L246.5 218.7L246.5 218.7L248.0 218.7L248.0 218.7L249.5 218.7L249.5 218.7L251.0 218.7L251.0 217.7L252.5 217.7L252.5 219.4L254.0 219.4L254.0 219.1L255.5 219.1L255.5 219.1L257.0 219.1L257.0 218.7L258.5 218.7L258.5 219.4L260.0 219.4L260.0 219.4L261.5 219.4L261.5 219.4L263.0 219.4L263.0 219.4L264.5 219.4L264.5 217.7L266.0 217.7L266.0 218.7L267.5 218.7L267.5 219.1L269.0 219.1L269.0 218.2L270.5 218.2L270.5 219.1L272.0 219.1L272.0 219.1L273.5 219.1L273.5 218.7L275.0 218.7L275.0 219.4L276.5 219.4L276.5 219.4L278.0 219.4L278.0 219.4L279.5 219.4L279.5 219.4L281.0 219.4L281.0 219.4L282.5 219.4L282.5 219.4L284.0 219.4L284.0 219.4L285.5 219.4L285.5 218.7L287.0 218.7L287.0 218.2L288.5 218.2L288.5 217.7L290.0 217.7L290.0 217.7L291.5 217.7L291.5 219.1L293.0 219.1L293.0 218.2L294.5 218.2L294.5 218.2L296.0 218.2L296.0 219.4L297.5 219.4L297.5 219.4L299.0 219.4L299.0 219.4L300.5 219.4L300.5 219.4L302.0 219.4L302.0 218.7L303.5 218.7L303.5 218.7L305.0 218.7L305.0 218.7L306.5 218.7L306.5 218.7L308.0 218.7L308.0 218.7L309.5 218.7L309.5 218.7L311.0 218.7L311.0 218.7L312.5 218.7L312.5 218.7L314.0 218.7L314.0 218.7L315.5 218.7L315.5 218.7L317.0 218.7L317.0 218.7L318.5 218.7L318.5 217.7L320.0 217.7L320.0 217.7L321.5 217.7L321.5 219.1L323.0 219.1L323.0 218.7L324.5 218.7L324.5 218.7L326.0 218.7L326.0 217.7L327.5 217.7L327.5 219.1L329.0 219.1L329.0 219.1L330.5 219.1L330.5 219.1L332.0 219.1L332.0 219.1L333.5 219.1L333.5 219.1L335.0 219.1L335.0 219.1L336.5 219.1L336.5 219.1L338.0 219.1L338.0 218.7L339.5 218.7L339.5 218.7L341.0 218.7L341.0 218.7L342.5 218.7L342.5 217.7L344.0 217.7L344.0 218.2L345.5 218.2L345.5 219.4L347.0 219.4L347.0 218.2L348.5 218.2L348.5 218.2L350.0 218.2L350.0 218.2L351.5 218.2L351.5 218.2L353.0 218.2L353.0 218.2L354.5 218.2L354.5 219.1L356.0 219.1L356.0 218.2L357.5 218.2L357.5 219.4L359.0 219.4L359.0 217.7L360.5 217.7L360.5 217.7L362.0 217.7L362.0 218.2L363.5 218.2L363.5 219.1L365.0 219.1L365.0 219.1L366.5 219.1L366.5 218.7L368.0 218.7L368.0 218.7L369.5 218.7L369.5 218.2L371.0 218.2L371.0 218.7L372.5 218.7L372.5 218.7L374.0 218.7L374.0 218.7L375.5 218.7L375.5 218.7L377.0 218.7L377.0 218.7L378.5 218.7L378.5 218.7L380.0 218.7L380.0 218.7L381.5 218.7L381.5 218.7L383.0 218.7L383.0 218.7L384.5 218.7L384.5 219.4L386.0 219.4L386.0 219.4L387.5 219.4L387.5 218.7L389.0 218.7L389.0 218.7L390.5 218.7L390.5 219.4L392.0 219.4L392.0 219.4L393.5 219.4L393.5 219.4L395.0 219.4L395.0 219.4L396.5 219.4L396.5 217.7L398.0 217.7L398.0 217.7L399.5 217.7L399.5 218.7L401.0 218.7L401.0 218.7L402.5 218.7L402.5 218.7L404.0 218.7L404.0 218.7L405.5 218.7L405.5 219.4L407.0 219.4L407.0 219.4L408.5 219.4L408.5 219.4L410.0 219.4L410.0 218.2L411.5 218.2L411.5 218.7L413.0 218.7L413.0 219.4L414.5 219.4L414.5 218.2L416.0 218.2L416.0 218.2L417.5 218.2L417.5 218.7L419.0 218.7L419.0 218.7L420.5 218.7L420.5 219.4L422.0 219.4L422.0 217.7L423.5 217.7L423.5 217.7L425.0 217.7L425.0 218.7L426.5 218.7L426.5 218.7L428.0 218.7L428.0 218.2L429.5 218.2L429.5 219.4L431.0 219.4L431.0 219.4L432.5 219.4L432.5 217.7L434.0 217.7L434.0 219.1L435.5 219.1L435.5 217.7L437.0 217.7L437.0 219.1L438.5 219.1L438.5 218.7L440.0 218.7L440.0 219.1L441.5 219.1L441.5 218.7L443.0 218.7L443.0 218.7L444.5 218.7L444.5 218.2L446.0 218.2L446.0 219.1L447.5 219.1L447.5 218.2L449.0 218.2L449.0 218.2L450.5 218.2L450.5 218.7L452.0 218.7L452.0 218.7L453.5 218.7L453.5 218.7L455.0 218.7L455.0 218.7L456.5 218.7L456.5 217.7L458.0 217.7L458.0 217.7L459.5 217.7L459.5 217.7L461.0 217.7L461.0 219.4L462.5 219.4L462.5 217.7L464.0 217.7L464.0 219.1L465.5 219.1L465.5 219.1L467.0 219.1L467.0 219.1L468.5 219.1L468.5 219.1L470.0 219.1L470.0 219.1L471.5 219.1L471.5 219.1L473.0 219.1L473.0 219.1L474.5 219.1L474.5 219.1L476.0 219.1L476.0 219.4L477.5 219.4L477.5 218.7L479.0 218.7L479.0 218.7L480.5 218.7L480.5 218.7L482.0 218.7L482.0 218.7L483.5 218.7L483.5 219.1L485.0 219.1L485.0 219.1L486.5 219.1L486.5 218.2L488.0 218.2L488.0 218.2L489.5 218.2L489.5 218.2L491.0 218.2L491.0 218.2L492.5 218.2L492.5 218.2L494.0 218.2L494.0 218.2L495.5 218.2L495.5 218.2L497.0 218.2L497.0 218.2L498.5 218.2L498.5 218.2L500.0 218.2L500.0 219.4L501.5 219.4L501.5 217.7L503.0 217.7L503.0 218.2L504.5 218.2L504.5 218.2L506.0 218.2L506.0 219.4L507.5 219.4L507.5 218.2L509.0 218.2L509.0 218.7L510.5 218.7L510.5 218.7L512.0 218.7L512.0 218.7L513.5 218.7L513.5 218.7L515.0 218.7L515.0 218.7L516.5 218.7L516.5 218.7L518.0 218.7L518.0 219.4L519.5 219.4L519.5 219.4L521.0 219.4L521.0 218.7L522.5 218.7L522.5 218.7L524.0 218.7L524.0 218.7L525.5 218.7L525.5 218.7L527.0 218.7L527.0 218.7L528.5 218.7L528.5 218.7L530.0 218.7L530.0 219.4L531.5 219.4L531.5 217.7L533.0 217.7L533.0 219.1L534.5 219.1L534.5 219.1L536.0 219.1L536.0 218.7L537.5 218.7L537.5 217.7L539.0 217.7L539.0 218.7L540.5 218.7L540.5 218.7L542.0 218.7L542.0 218.7L543.5 218.7L543.5 218.7L545.0 218.7L545.0 217.7L546.5 217.7L546.5 217.7L548.0 217.7L548.0 217.7L549.5 217.7L549.5 217.7L551.0 217.7L551.0 217.7L552.5 217.7L552.5 217.7L554.0 217.7L554.0 217.7L555.5 217.7L555.5 217.7L557.0 217.7L557.0 218.7L558.5 218.7L558.5 218.2L560.0 218.2L560.0 218.7L561.5 218.7L561.5 218.7L563.0 218.7L563.0 218.7L564.5 218.7L564.5 218.2L566.0 218.2L566.0 219.4L567.5 219.4L567.5 219.4L569.0 219.4L569.0 219.4L570.5 219.4L570.5 219.4L572.0 219.4L572.0 219.4L573.5 219.4L573.5 219.4L575.0 219.4L575.0 219.4L576.5 219.4L576.5 218.7L578.0 218.7L578.0 218.7L579.5 218.7L579.5 218.7L581.0 218.7L581.0 218.7L582.5 218.7L582.5 218.7L584.0 218.7L584.0 219.1L585.5 219.1L585.5 219.1L587.0 219.1L587.0 218.7L588.5 218.7L588.5 218.7L590.0 218.7L590.0 218.7L591.5 218.7L591.5 218.7L593.0 218.7L593.0 218.7L594.5 218.7L594.5 218.7L596.0 218.7L596.0 218.7L597.5 218.7L597.5 218.7L599.0 218.7L599.0 217.7L600.5 217.7L600.5 217.7L602.0 217.7L602.0 218.7L603.5 218.7L603.5 218.7L605.0 218.7L605.0 219.4L606.5 219.4L606.5 218.7L608.0 218.7L608.0 218.7L609.5 218.7L609.5 218.7L611.0 218.7L611.0 217.7L612.5 217.7L612.5 218.2L614.0 218.2L614.0 218.2L615.5 218.2L615.5 218.2L617.0 218.2L617.0 218.2L618.5 218.2L618.5 218.2L620.0 218.2L620.0 218.2L621.5 218.2L621.5 218.7L623.0 218.7L623.0 218.7L624.5 218.7L624.5 218.7L626.0 218.7L626.0 219.1L627.5 219.1L627.5 219.1L629.0 219.1L629.0 219.1L630.5 219.1L630.5 217.7L632.0 217.7L632.0 219.1L633.5 219.1L633.5 219.1L635.0 219.1L635.0 218.7L636.5 218.7L636.5 218.7L638.0 218.7L638.0 218.2L639.5 218.2L639.5 219.1L641.0 219.1L641.0 219.4L642.5 219.4L642.5 218.7L644.0 218.7L644.0 218.2L645.5 218.2L645.5 218.2L647.0 218.2L647.0 218.7L648.5 218.7L648.5 218.7L650.0 218.7L650.0 218.7L651.5 218.7L651.5 218.7L653.0 218.7L653.0 219.1L654.5 219.1L654.5 217.7L656.0 217.7L656.0 217.7L657.5 217.7L657.5 217.7L659.0 217.7L659.0 217.7L660.5 217.7L660.5 217.7L662.0 217.7L662.0 217.7L663.5 217.7L663.5 219.4L665.0 219.4L665.0 218.2L666.5 218.2L666.5 218.2L668.0 218.2L668.0 217.7L669.5 217.7L669.5 217.7L671.0 217.7L671.0 217.7L672.5 217.7L672.5 219.4L674.0 219.4L674.0 218.7L675.5 218.7L675.5 218.7L677.0 218.7L677.0 218.7L678.5 218.7L678.5 218.7L680.0 218.7L680.0 219.4L681.5 219.4L681.5 218.2L683.0 218.2L683.0 218.2L684.5 218.2L684.5 218.2L686.0 218.2L686.0 219.4L687.5 219.4L687.5 217.7L689.0 217.7L689.0 217.7L689.7 217.7L689.7 223.7z" fill="#06a0ff"/><path d="M26 223.7L26.0 221.4L27.5 221.4L27.5 221.4L29.0 221.4L29.0 221.4L30.5 221.4L30.5 221.4L32.0 221.4L32.0 219.6L33.5 219.6L33.5 220.2L35.0 220.2L35.0 221.4L36.5 221.4L36.5 221.4L38.0 221.4L38.0 220.8L39.5 220.8L39.5 221.4L41.0 221.4L41.0 221.9L42.5 221.9L42.5 220.7L44.0 220.7L44.0 221.9L45.5 221.9L45.5 221.9L47.0 221.9L47.0 221.9L48.5 221.9L48.5 220.7L50.0 220.7L50.0 221.9L51.5 221.9L51.5 220.2L53.0 220.2L53.0 221.4L54.5 221.4L54.5 221.4L56.0 221.4L56.0 220.2L57.5 220.2L57.5 221.4L59.0 221.4L59.0 221.4L60.5 221.4L60.5 221.9L62.0 221.9L62.0 219.6L63.5 219.6L63.5 220.5L65.0 220.5L65.0 221.7L66.5 221.7L66.5 221.7L68.0 221.7L68.0 220.8L69.5 220.8L69.5 221.9L71.0 221.9L71.0 221.9L72.5 221.9L72.5 221.9L74.0 221.9L74.0 220.5L75.5 220.5L75.5 221.7L77.0 221.7L77.0 221.4L78.5 221.4L78.5 220.2L80.0 220.2L80.0 221.1L81.5 221.1L81.5 221.1L83.0 221.1L83.0 221.1L84.5 221.1L84.5 221.1L86.0 221.1L86.0 220.2L87.5 220.2L87.5 220.5L89.0 220.5L89.0 221.7L90.5 221.7L90.5 220.2L92.0 220.2L92.0 221.9L93.5 221.9L93.5 221.9L95.0 221.9L95.0 221.1L96.5 221.1L96.5 219.9L98.0 219.9L98.0 221.1L99.5 221.1L99.5 221.1L101.0 221.1L101.0 221.1L102.5 221.1L102.5 221.7L104.0 221.7L104.0 221.1L105.5 221.1L105.5 221.9L107.0 221.9L107.0 220.2L108.5 220.2L108.5 220.7L110.0 220.7L110.0 221.9L111.5 221.9L111.5 221.9L113.0 221.9L113.0 221.9L114.5 221.9L114.5 221.9L116.0 221.9L116.0 219.6L117.5 219.6L117.5 220.8L119.0 220.8L119.0 221.9L120.5 221.9L120.5 220.7L122.0 220.7L122.0 220.7L123.5 220.7L123.5 221.9L125.0 221.9L125.0 219.9L126.5 219.9L126.5 220.8L128.0 220.8L128.0 219.6L129.5 219.6L129.5 221.4L131.0 221.4L131.0 221.9L132.5 221.9L132.5 222.1L134.0 222.1L134.0 221.6L135.5 221.6L135.5 221.6L137.0 221.6L137.0 221.9L138.5 221.9L138.5 221.0L140.0 221.0L140.0 221.0L141.5 221.0L141.5 221.0L143.0 221.0L143.0 221.0L144.5 221.0L144.5 221.6L146.0 221.6L146.0 221.3L147.5 221.3L147.5 221.3L149.0 221.3L149.0 221.0L150.5 221.0L150.5 221.9L152.0 221.9L152.0 221.0L153.5 221.0L153.5 221.9L155.0 221.9L155.0 221.9L156.5 221.9L156.5 221.9L158.0 221.9L158.0 221.6L159.5 221.6L159.5 221.6L161.0 221.6L161.0 221.6L162.5 221.6L162.5 222.1L164.0 222.1L164.0 221.0L165.5 221.0L165.5 221.0L167.0 221.0L167.0 222.1L168.5 222.1L168.5 221.6L170.0 221.6L170.0 221.9L171.5 221.9L171.5 221.9L173.0 221.9L173.0 221.3L174.5 221.3L174.5 221.6L176.0 221.6L176.0 221.9L177.5 221.9L177.5 221.3L179.0 221.3L179.0 221.3L180.5 221.3L180.5 221.3L182.0 221.3L182.0 221.9L183.5 221.9L183.5 221.9L185.0 221.9L185.0 221.9L186.5 221.9L186.5 221.9L188.0 221.9L188.0 221.6L189.5 221.6L189.5 222.1L191.0 222.1L191.0 221.9L192.5 221.9L192.5 221.9L194.0 221.9L194.0 221.6L195.5 221.6L195.5 221.6L197.0 221.6L197.0 221.6L198.5 221.6L198.5 221.6L200.0 221.6L200.0 222.1L201.5 222.1L201.5 221.6L203.0 221.6L203.0 222.1L204.5 222.1L204.5 221.0L206.0 221.0L206.0 221.3L207.5 221.3L207.5 221.3L209.0 221.3L209.0 222.1L210.5 222.1L210.5 221.6L212.0 221.6L212.0 221.6L213.5 221.6L213.5 221.0L215.0 221.0L215.0 221.6L216.5 221.6L216.5 221.6L218.0 221.6L218.0 221.6L219.5 221.6L219.5 221.6L221.0 221.6L221.0 221.9L222.5 221.9L222.5 221.9L224.0 221.9L224.0 221.9L225.5 221.9L225.5 221.3L227.0 221.3L227.0 221.9L228.5 221.9L228.5 221.6L230.0 221.6L230.0 221.3L231.5 221.3L231.5 222.1L233.0 222.1L233.0 222.1L234.5 222.1L234.5 222.1L236.0 222.1L236.0 221.6L237.5 221.6L237.5 221.6L239.0 221.6L239.0 221.3L240.5 221.3L240.5 221.3L242.0 221.3L242.0 221.0L243.5 221.0L243.5 222.1L245.0 222.1L245.0 222.1L246.5 222.1L246.5 222.1L248.0 222.1L248.0 221.9L249.5 221.9L249.5 221.9L251.0 221.9L251.0 221.9L252.5 221.9L252.5 221.9L254.0 221.9L254.0 221.9L255.5 221.9L255.5 221.9L257.0 221.9L257.0 221.9L258.5 221.9L258.5 222.1L260.0 222.1L260.0 222.1L261.5 222.1L261.5 222.1L263.0 222.1L263.0 221.6L264.5 221.6L264.5 221.6L266.0 221.6L266.0 221.6L267.5 221.6L267.5 221.6L269.0 221.6L269.0 221.0L270.5 221.0L270.5 221.6L272.0 221.6L272.0 221.9L273.5 221.9L273.5 221.0L275.0 221.0L275.0 221.0L276.5 221.0L276.5 221.6L278.0 221.6L278.0 221.6L279.5 221.6L279.5 221.6L281.0 221.6L281.0 222.1L282.5 222.1L282.5 221.9L284.0 221.9L284.0 221.3L285.5 221.3L285.5 221.3L287.0 221.3L287.0 221.3L288.5 221.3L288.5 221.3L290.0 221.3L290.0 221.3L291.5 221.3L291.5 221.3L293.0 221.3L293.0 221.3L294.5 221.3L294.5 221.3L296.0 221.3L296.0 221.3L297.5 221.3L297.5 221.6L299.0 221.6L299.0 221.0L300.5 221.0L300.5 221.0L302.0 221.0L302.0 221.6L303.5 221.6L303.5 221.9L305.0 221.9L305.0 221.6L306.5 221.6L306.5 221.6L308.0 221.6L308.0 221.6L309.5 221.6L309.5 221.0L311.0 221.0L311.0 221.0L312.5 221.0L312.5 221.0L314.0 221.0L314.0 221.3L315.5 221.3L315.5 221.6L317.0 221.6L317.0 221.6L318.5 221.6L318.5 221.6L320.0 221.6L320.0 221.0L321.5 221.0L321.5 221.0L323.0 221.0L323.0 221.6L324.5 221.6L324.5 221.6L326.0 221.6L326.0 221.6L327.5 221.6L327.5 221.6L329.0 221.6L329.0 221.6L330.5 221.6L330.5 221.3L332.0 221.3L332.0 221.3L333.5 221.3L333.5 222.1L335.0 222.1L335.0 222.1L336.5 222.1L336.5 222.1L338.0 222.1L338.0 222.1L339.5 222.1L339.5 222.1L341.0 222.1L341.0 222.1L342.5 222.1L342.5 222.1L344.0 222.1L344.0 222.1L345.5 222.1L345.5 222.1L347.0 222.1L347.0 221.6L348.5 221.6L348.5 221.6L350.0 221.6L350.0 221.6L351.5 221.6L351.5 221.6L353.0 221.6L353.0 221.6L354.5 221.6L354.5 221.3L356.0 221.3L356.0 221.3L357.5 221.3L357.5 221.9L359.0 221.9L359.0 221.3L360.5 221.3L360.5 221.6L362.0 221.6L362.0 221.6L363.5 221.6L363.5 221.6L365.0 221.6L365.0 221.3L366.5 221.3L366.5 221.0L368.0 221.0L368.0 221.0L369.5 221.0L369.5 221.0L371.0 221.0L371.0 221.6L372.5 221.6L372.5 221.6L374.0 221.6L374.0 221.0L375.5 221.0L375.5 221.0L377.0 221.0L377.0 221.9L378.5 221.9L378.5 221.6L380.0 221.6L380.0 221.0L381.5 221.0L381.5 221.0L383.0 221.0L383.0 222.1L384.5 222.1L384.5 221.6L386.0 221.6L386.0 221.6L387.5 221.6L387.5 221.6L389.0 221.6L389.0 221.6L390.5 221.6L390.5 222.1L392.0 222.1L392.0 221.6L393.5 221.6L393.5 222.1L395.0 222.1L395.0 221.3L396.5 221.3L396.5 221.0L398.0 221.0L398.0 221.6L399.5 221.6L399.5 221.6L401.0 221.6L401.0 221.6L402.5 221.6L402.5 222.1L404.0 222.1L404.0 222.1L405.5 222.1L405.5 222.1L407.0 222.1L407.0 221.6L408.5 221.6L408.5 221.9L410.0 221.9L410.0 221.9L411.5 221.9L411.5 221.6L413.0 221.6L413.0 221.0L414.5 221.0L414.5 221.0L416.0 221.0L416.0 221.0L417.5 221.0L417.5 221.0L419.0 221.0L419.0 221.0L420.5 221.0L420.5 221.3L422.0 221.3L422.0 221.6L423.5 221.6L423.5 221.0L425.0 221.0L425.0 221.0L426.5 221.0L426.5 221.0L428.0 221.0L428.0 221.0L429.5 221.0L429.5 221.0L431.0 221.0L431.0 221.0L432.5 221.0L432.5 221.6L434.0 221.6L434.0 221.6L435.5 221.6L435.5 221.6L437.0 221.6L437.0 221.6L438.5 221.6L438.5 221.6L440.0 221.6L440.0 221.6L441.5 221.6L441.5 221.6L443.0 221.6L443.0 221.3L444.5 221.3L444.5 221.3L446.0 221.3L446.0 221.3L447.5 221.3L447.5 221.3L449.0 221.3L449.0 221.6L450.5 221.6L450.5 221.6L452.0 221.6L452.0 221.6L453.5 221.6L453.5 221.6L455.0 221.6L455.0 221.9L456.5 221.9L456.5 221.6L458.0 221.6L458.0 221.6L459.5 221.6L459.5 221.0L461.0 221.0L461.0 221.0L462.5 221.0L462.5 221.3L464.0 221.3L464.0 221.3L465.5 221.3L465.5 221.3L467.0 221.3L467.0 221.3L468.5 221.3L468.5 221.3L470.0 221.3L470.0 221.3L471.5 221.3L471.5 221.3L473.0 221.3L473.0 221.0L474.5 221.0L474.5 221.3L476.0 221.3L476.0 221.6L477.5 221.6L477.5 221.6L479.0 221.6L479.0 221.6L480.5 221.6L480.5 221.6L482.0 221.6L482.0 221.9L483.5 221.9L483.5 221.0L485.0 221.0L485.0 221.0L486.5 221.0L486.5 221.9L488.0 221.9L488.0 221.9L489.5 221.9L489.5 221.3L491.0 221.3L491.0 221.0L492.5 221.0L492.5 221.6L494.0 221.6L494.0 221.3L495.5 221.3L495.5 221.6L497.0 221.6L497.0 221.3L498.5 221.3L498.5 221.3L500.0 221.3L500.0 221.0L501.5 221.0L501.5 221.0L503.0 221.0L503.0 221.0L504.5 221.0L504.5 221.3L506.0 221.3L506.0 221.3L507.5 221.3L507.5 221.6L509.0 221.6L509.0 221.6L510.5 221.6L510.5 221.6L512.0 221.6L512.0 221.6L513.5 221.6L513.5 221.0L515.0 221.0L515.0 221.0L516.5 221.0L516.5 221.0L518.0 221.0L518.0 221.0L519.5 221.0L519.5 221.9L521.0 221.9L521.0 221.9L522.5 221.9L522.5 221.6L524.0 221.6L524.0 221.9L525.5 221.9L525.5 221.9L527.0 221.9L527.0 221.9L528.5 221.9L528.5 221.6L530.0 221.6L530.0 221.3L531.5 221.3L531.5 221.0L533.0 221.0L533.0 221.0L534.5 221.0L534.5 221.6L536.0 221.6L536.0 221.9L537.5 221.9L537.5 221.9L539.0 221.9L539.0 221.9L540.5 221.9L540.5 221.0L542.0 221.0L542.0 221.6L543.5 221.6L543.5 221.9L545.0 221.9L545.0 221.6L546.5 221.6L546.5 221.6L548.0 221.6L548.0 222.1L549.5 222.1L549.5 221.6L551.0 221.6L551.0 221.6L552.5 221.6L552.5 221.6L554.0 221.6L554.0 221.9L555.5 221.9L555.5 221.6L557.0 221.6L557.0 221.3L558.5 221.3L558.5 221.3L560.0 221.3L560.0 221.3L561.5 221.3L561.5 221.6L563.0 221.6L563.0 221.3L564.5 221.3L564.5 221.9L566.0 221.9L566.0 221.0L567.5 221.0L567.5 221.9L569.0 221.9L569.0 221.9L570.5 221.9L570.5 221.9L572.0 221.9L572.0 221.3L573.5 221.3L573.5 221.9L575.0 221.9L575.0 221.9L576.5 221.9L576.5 221.9L578.0 221.9L578.0 221.9L579.5 221.9L579.5 221.3L581.0 221.3L581.0 221.9L582.5 221.9L582.5 221.9L584.0 221.9L584.0 221.0L585.5 221.0L585.5 221.9L587.0 221.9L587.0 221.6L588.5 221.6L588.5 221.6L590.0 221.6L590.0 221.0L591.5 221.0L591.5 222.1L593.0 222.1L593.0 221.6L594.5 221.6L594.5 221.6L596.0 221.6L596.0 221.6L597.5 221.6L597.5 221.6L599.0 221.6L599.0 221.3L600.5 221.3L600.5 221.3L602.0 221.3L602.0 221.3L603.5 221.3L603.5 221.6L605.0 221.6L605.0 221.9L606.5 221.9L606.5 221.3L608.0 221.3L608.0 221.3L609.5 221.3L609.5 221.3L611.0 221.3L611.0 222.1L612.5 222.1L612.5 222.1L614.0 222.1L614.0 222.1L615.5 222.1L615.5 222.1L617.0 222.1L617.0 221.6L618.5 221.6L618.5 221.6L620.0 221.6L620.0 221.6L621.5 221.6L621.5 221.6L623.0 221.6L623.0 221.0L624.5 221.0L624.5 221.3L626.0 221.3L626.0 221.6L627.5 221.6L627.5 221.6L629.0 221.6L629.0 221.6L630.5 221.6L630.5 222.1L632.0 222.1L632.0 222.1L633.5 222.1L633.5 222.1L635.0 222.1L635.0 222.1L636.5 222.1L636.5 221.9L638.0 221.9L638.0 221.9L639.5 221.9L639.5 221.9L641.0 221.9L641.0 222.1L642.5 222.1L642.5 222.1L644.0 222.1L644.0 222.1L645.5 222.1L645.5 222.1L647.0 222.1L647.0 221.6L648.5 221.6L648.5 221.3L650.0 221.3L650.0 221.3L651.5 221.3L651.5 221.6L653.0 221.6L653.0 221.0L654.5 221.0L654.5 221.0L656.0 221.0L656.0 221.0L657.5 221.0L657.5 222.1L659.0 222.1L659.0 222.1L660.5 222.1L660.5 222.1L662.0 222.1L662.0 222.1L663.5 222.1L663.5 221.6L665.0 221.6L665.0 222.1L666.5 222.1L666.5 222.1L668.0 222.1L668.0 222.1L669.5 222.1L669.5 221.0L671.0 221.0L671.0 221.3L672.5 221.3L672.5 221.3L674.0 221.3L674.0 221.9L675.5 221.9L675.5 221.9L677.0 221.9L677.0 221.9L678.5 221.9L678.5 221.9L680.0 221.9L680.0 221.9L681.5 221.9L681.5 222.1L683.0 222.1L683.0 222.1L684.5 222.1L684.5 222.1L686.0 222.1L686.0 222.1L687.5 222.1L687.5 222.1L689.0 222.1L689.0 221.0L689.7 221.0L689.7 223.7z" fill="#0cc8ff"/><path d="M195.8 221.1h2.5v1h-1.5zM275.5 219.9h1.5v1h-1.5zM311.9 219.9h1.5v1h-1.5zM395.7 220.5h3.5v1h-1.5zM327.1 220.5h1.5v1h-1.5zM178.8 219.9h1.5v1h-1.5zM474.9 219.9h1.5v1h-1.5zM49.2 219.9h2.5v1h-1.5zM401.3 219.9h2.5v1h-1.5zM246.0 221.1h2.5v1h-1.5zM654.2 220.5h2.5v1h-1.5zM90.5 221.1h1.5v1h-1.5zM677.5 219.9h3.5v1h-1.5zM428.9 221.1h1.5v1h-1.5zM531.4 219.9h1.5v1h-1.5zM620.2 220.5h3.5v1h-1.5zM240.4 221.1h3.5v1h-1.5zM559.1 219.9h3.5v1h-1.5zM674.8 221.1h1.5v1h-1.5zM262.5 221.1h3.5v1h-1.5zM613.6 219.9h2.5v1h-1.5zM215.3 219.9h1.5v1h-1.5zM199.5 221.1h2.5v1h-1.5zM45.2 220.5h3.5v1h-1.5zM126.5 220.5h1.5v1h-1.5zM569.0 219.9h1.5v1h-1.5zM428.6 219.9h3.5v1h-1.5zM133.5 219.9h3.5v1h-1.5zM633.4 219.9h2.5v1h-1.5zM228.5 220.5h2.5v1h-1.5zM456.7 219.9h1.5v1h-1.5zM343.8 219.9h2.5v1h-1.5zM254.4 221.1h3.5v1h-1.5zM360.1 219.9h3.5v1h-1.5zM256.4 221.1h1.5v1h-1.5zM653.6 221.1h3.5v1h-1.5zM647.4 219.9h3.5v1h-1.5zM73.4 221.1h1.5v1h-1.5zM642.7 221.1h1.5v1h-1.5zM679.3 220.5h2.5v1h-1.5zM602.2 221.1h3.5v1h-1.5zM465.2 221.1h1.5v1h-1.5zM299.1 221.1h3.5v1h-1.5zM669.7 219.9h3.5v1h-1.5zM77.0 219.9h3.5v1h-1.5zM147.9 219.9h3.5v1h-1.5zM260.0 220.5h1.5v1h-1.5zM607.2 221.1h2.5v1h-1.5zM118.2 221.1h1.5v1h-1.5zM484.2 221.1h3.5v1h-1.5zM647.0 219.9h1.5v1h-1.5zM115.1 220.5h2.5v1h-1.5zM247.8 219.9h2.5v1h-1.5zM646.3 219.9h1.5v1h-1.5zM593.3 221.1h3.5v1h-1.5zM349.5 219.9h3.5v1h-1.5zM403.5 219.9h2.5v1h-1.5zM642.6 221.1h3.5v1h-1.5zM129.8 221.1h1.5v1h-1.5zM99.8 220.5h1.5v1h-1.5zM299.7 221.1h1.5v1h-1.5zM480.9 219.9h3.5v1h-1.5zM532.5 219.9h1.5v1h-1.5zM26.4 221.1h1.5v1h-1.5zM670.4 221.1h2.5v1h-1.5zM257.6 221.1h2.5v1h-1.5zM285.0 221.1h2.5v1h-1.5zM57.6 220.5h3.5v1h-1.5zM503.6 219.9h3.5v1h-1.5zM258.5 219.9h1.5v1h-1.5zM641.1 220.5h1.5v1h-1.5zM158.7 221.1h2.5v1h-1.5zM324.2 221.1h2.5v1h-1.5zM148.1 219.9h3.5v1h-1.5zM429.2 219.9h3.5v1h-1.5zM405.4 219.9h1.5v1h-1.5zM147.9 221.1h1.5v1h-1.5zM225.2 220.5h3.5v1h-1.5zM506.0 219.9h1.5v1h-1.5zM548.2 219.9h1.5v1h-1.5zM77.9 219.9h1.5v1h-1.5zM317.8 221.1h2.5v1h-1.5zM394.1 221.1h2.5v1h-1.5zM468.5 221.1h1.5v1h-1.5zM680.4 220.5h1.5v1h-1.5zM302.9 219.9h1.5v1h-1.5zM249.4 221.1h2.5v1h-1.5zM625.1 219.9h3.5v1h-1.5zM649.7 221.1h2.5v1h-1.5zM669.8 221.1h1.5v1h-1.5zM355.7 220.5h1.5v1h-1.5zM306.7 221.1h1.5v1h-1.5zM70.7 221.1h2.5v1h-1.5zM660.6 220.5h2.5v1h-1.5zM117.5 221.1h1.5v1h-1.5zM556.9 220.5h1.5v1h-1.5zM153.3 221.1h3.5v1h-1.5zM474.1 219.9h3.5v1h-1.5zM325.8 220.5h3.5v1h-1.5zM105.4 220.5h1.5v1h-1.5zM646.3 221.1h1.5v1h-1.5zM505.3 219.9h1.5v1h-1.5zM107.4 220.5h1.5v1h-1.5zM410.8 220.5h3.5v1h-1.5zM370.9 219.9h2.5v1h-1.5zM529.6 219.9h2.5v1h-1.5zM651.8 221.1h3.5v1h-1.5zM173.3 221.1h2.5v1h-1.5zM670.5 219.9h3.5v1h-1.5zM148.9 220.5h3.5v1h-1.5z" fill="#22d4ff" fill-opacity="0.55"/><rect x="27" y="218.898" width="1.4" height="5.002" fill="#30e040" /><rect x="27" y="214.096" width="1.4" height="5.002" fill="#18c8e8" /><rect x="27" y="209.294" width="1.4" height="5.002" fill="#1880ff" /><rect x="27" y="204.492" width="1.4" height="5.002" fill="#2060ff" /><rect x="27" y="199.69" width="1.4" height="5.002" fill="#1840e0" /><rect x="45.4" y="219.192" width="1.4" height="4.708" fill="#40e060" /><rect x="45.4" y="214.684" width="1.4" height="4.708" fill="#20a0ff" /><rect x="45.4" y="210.176" width="1.4" height="4.708" fill="#1860f0" /><rect x="45.4" y="205.668" width="1.4" height="4.708" fill="#1448d0" /><rect x="45.4" y="201.16" width="1.4" height="4.708" fill="#1040c0" /><rect x="77.6" y="220.229" width="1.2" height="3.67083" fill="#ff3030" /><rect x="77.6" y="216.758" width="1.2" height="3.67083" fill="#ffe040" /><rect x="77.6" y="213.287" width="1.2" height="3.67083" fill="#30e0e0" /><rect x="77.6" y="209.817" width="1.2" height="3.67083" fill="#2090ff" /><rect x="77.6" y="206.346" width="1.2" height="3.67083" fill="#1450e0" /><rect x="77.6" y="202.875" width="1.2" height="3.67083" fill="#1040c0" /><rect x="63.4" y="220.597" width="1.2" height="3.30333" fill="#ff4040" /><rect x="63.4" y="217.493" width="1.2" height="3.30333" fill="#f0f040" /><rect x="63.4" y="214.39" width="1.2" height="3.30333" fill="#40e080" /><rect x="116" y="220.637" width="1.2" height="3.2625" fill="#ff3030" /><rect x="116" y="217.575" width="1.2" height="3.2625" fill="#ffb030" /><rect x="116" y="214.512" width="1.2" height="3.2625" fill="#60e060" /><rect x="116" y="211.45" width="1.2" height="3.2625" fill="#20c0e0" /><rect x="124.6" y="219.698" width="1.6" height="4.20167" fill="#ff2020" /><rect x="124.6" y="215.697" width="1.6" height="4.20167" fill="#ffe030" /><rect x="124.6" y="211.695" width="1.6" height="4.20167" fill="#50f050" /><rect x="124.6" y="207.693" width="1.6" height="4.20167" fill="#20d0e0" /><rect x="124.6" y="203.692" width="1.6" height="4.20167" fill="#2080ff" /><rect x="124.6" y="199.69" width="1.6" height="4.20167" fill="#1850e0" /><rect x="122.4" y="218.188" width="1.2" height="5.7125" fill="#30e040" /><rect x="122.4" y="212.675" width="1.2" height="5.7125" fill="#20b0ff" /><rect x="129.6" y="220.025" width="1.2" height="3.875" fill="#40e060" /><rect x="129.6" y="216.35" width="1.2" height="3.875" fill="#20c0ff" /><rect x="35" y="218.8" width="1.2" height="5.1" fill="#60ff60" /><rect x="59.6" y="221.005" width="1" height="2.895" fill="#f0f060" /><rect x="59.6" y="218.31" width="1" height="2.895" fill="#50e090" /><rect x="61.2" y="199.2" width="2" height="24.5" fill="#05050f" /><rect x="119.4" y="199.2" width="2.2" height="24.5" fill="#05050f" /><rect x="26" y="234.2" width="663.7" height="24.5" fill="#000080" /><path d="M26 258.7L26.0 249.8L27.5 249.8L27.5 249.8L29.0 249.8L29.0 248.6L30.5 248.6L30.5 249.8L32.0 249.8L32.0 249.8L33.5 249.8L33.5 248.0L35.0 248.0L35.0 249.2L36.5 249.2L36.5 249.5L38.0 249.5L38.0 249.1L39.5 249.1L39.5 248.6L41.0 248.6L41.0 248.6L42.5 248.6L42.5 248.6L44.0 248.6L44.0 248.6L45.5 248.6L45.5 248.6L47.0 248.6L47.0 248.6L48.5 248.6L48.5 248.6L50.0 248.6L50.0 247.4L51.5 247.4L51.5 248.6L53.0 248.6L53.0 249.8L54.5 249.8L54.5 249.2L56.0 249.2L56.0 249.2L57.5 249.2L57.5 249.2L59.0 249.2L59.0 248.6L60.5 248.6L60.5 248.6L62.0 248.6L62.0 248.6L63.5 248.6L63.5 249.8L65.0 249.8L65.0 248.6L66.5 248.6L66.5 249.8L68.0 249.8L68.0 247.4L69.5 247.4L69.5 250.3L71.0 250.3L71.0 250.3L72.5 250.3L72.5 250.3L74.0 250.3L74.0 248.6L75.5 248.6L75.5 247.4L77.0 247.4L77.0 249.2L78.5 249.2L78.5 249.2L80.0 249.2L80.0 249.8L81.5 249.8L81.5 248.6L83.0 248.6L83.0 248.6L84.5 248.6L84.5 248.0L86.0 248.0L86.0 249.2L87.5 249.2L87.5 250.3L89.0 250.3L89.0 250.3L90.5 250.3L90.5 249.8L92.0 249.8L92.0 248.6L93.5 248.6L93.5 248.6L95.0 248.6L95.0 248.6L96.5 248.6L96.5 250.7L98.0 250.7L98.0 248.6L99.5 248.6L99.5 250.3L101.0 250.3L101.0 250.3L102.5 250.3L102.5 249.2L104.0 249.2L104.0 248.0L105.5 248.0L105.5 250.7L107.0 250.7L107.0 250.7L108.5 250.7L108.5 249.1L110.0 249.1L110.0 250.3L111.5 250.3L111.5 249.8L113.0 249.8L113.0 249.8L114.5 249.8L114.5 248.6L116.0 248.6L116.0 250.7L117.5 250.7L117.5 248.6L119.0 248.6L119.0 248.6L120.5 248.6L120.5 248.6L122.0 248.6L122.0 249.8L123.5 249.8L123.5 249.8L125.0 249.8L125.0 249.8L126.5 249.8L126.5 247.4L128.0 247.4L128.0 247.4L129.5 247.4L129.5 248.6L131.0 248.6L131.0 248.6L132.5 248.6L132.5 249.8L134.0 249.8L134.0 249.8L135.5 249.8L135.5 248.6L137.0 248.6L137.0 250.7L138.5 250.7L138.5 250.3L140.0 250.3L140.0 250.3L141.5 250.3L141.5 250.7L143.0 250.7L143.0 249.2L144.5 249.2L144.5 249.2L146.0 249.2L146.0 249.2L147.5 249.2L147.5 249.8L149.0 249.8L149.0 249.8L150.5 249.8L150.5 249.8L152.0 249.8L152.0 249.8L153.5 249.8L153.5 248.6L155.0 248.6L155.0 248.6L156.5 248.6L156.5 250.3L158.0 250.3L158.0 250.3L159.5 250.3L159.5 248.6L161.0 248.6L161.0 249.8L162.5 249.8L162.5 249.8L164.0 249.8L164.0 249.8L165.5 249.8L165.5 249.8L167.0 249.8L167.0 250.3L168.5 250.3L168.5 250.7L170.0 250.7L170.0 248.6L171.5 248.6L171.5 248.6L173.0 248.6L173.0 248.6L174.5 248.6L174.5 248.6L176.0 248.6L176.0 248.6L177.5 248.6L177.5 248.6L179.0 248.6L179.0 248.6L180.5 248.6L180.5 250.7L182.0 250.7L182.0 250.7L183.5 250.7L183.5 250.7L185.0 250.7L185.0 248.6L186.5 248.6L186.5 248.6L188.0 248.6L188.0 248.6L189.5 248.6L189.5 248.6L191.0 248.6L191.0 249.2L192.5 249.2L192.5 249.2L194.0 249.2L194.0 249.2L195.5 249.2L195.5 249.8L197.0 249.8L197.0 249.8L198.5 249.8L198.5 249.8L200.0 249.8L200.0 250.3L201.5 250.3L201.5 250.3L203.0 250.3L203.0 249.8L204.5 249.8L204.5 249.2L206.0 249.2L206.0 249.2L207.5 249.2L207.5 249.2L209.0 249.2L209.0 250.7L210.5 250.7L210.5 250.7L212.0 250.7L212.0 250.7L213.5 250.7L213.5 249.8L215.0 249.8L215.0 249.8L216.5 249.8L216.5 248.6L218.0 248.6L218.0 249.8L219.5 249.8L219.5 249.8L221.0 249.8L221.0 249.8L222.5 249.8L222.5 249.2L224.0 249.2L224.0 249.8L225.5 249.8L225.5 249.8L227.0 249.8L227.0 249.8L228.5 249.8L228.5 249.2L230.0 249.2L230.0 249.2L231.5 249.2L231.5 249.2L233.0 249.2L233.0 249.2L234.5 249.2L234.5 249.8L236.0 249.8L236.0 249.2L237.5 249.2L237.5 249.8L239.0 249.8L239.0 249.8L240.5 249.8L240.5 249.8L242.0 249.8L242.0 250.3L243.5 250.3L243.5 250.3L245.0 250.3L245.0 250.3L246.5 250.3L246.5 249.8L248.0 249.8L248.0 249.8L249.5 249.8L249.5 249.8L251.0 249.8L251.0 248.6L252.5 248.6L252.5 248.6L254.0 248.6L254.0 249.8L255.5 249.8L255.5 250.7L257.0 250.7L257.0 249.8L258.5 249.8L258.5 250.7L260.0 250.7L260.0 250.7L261.5 250.7L261.5 250.7L263.0 250.7L263.0 250.7L264.5 250.7L264.5 250.7L266.0 250.7L266.0 248.6L267.5 248.6L267.5 248.6L269.0 248.6L269.0 248.6L270.5 248.6L270.5 248.6L272.0 248.6L272.0 248.6L273.5 248.6L273.5 250.7L275.0 250.7L275.0 250.7L276.5 250.7L276.5 250.7L278.0 250.7L278.0 248.6L279.5 248.6L279.5 248.6L281.0 248.6L281.0 248.6L282.5 248.6L282.5 249.2L284.0 249.2L284.0 249.2L285.5 249.2L285.5 249.2L287.0 249.2L287.0 250.7L288.5 250.7L288.5 249.8L290.0 249.8L290.0 249.8L291.5 249.8L291.5 249.8L293.0 249.8L293.0 249.8L294.5 249.8L294.5 249.8L296.0 249.8L296.0 250.7L297.5 250.7L297.5 250.7L299.0 250.7L299.0 250.7L300.5 250.7L300.5 250.7L302.0 250.7L302.0 250.7L303.5 250.7L303.5 248.6L305.0 248.6L305.0 248.6L306.5 248.6L306.5 249.8L308.0 249.8L308.0 250.3L309.5 250.3L309.5 248.6L311.0 248.6L311.0 248.6L312.5 248.6L312.5 249.8L314.0 249.8L314.0 249.8L315.5 249.8L315.5 249.8L317.0 249.8L317.0 249.8L318.5 249.8L318.5 249.8L320.0 249.8L320.0 249.8L321.5 249.8L321.5 249.8L323.0 249.8L323.0 249.8L324.5 249.8L324.5 250.7L326.0 250.7L326.0 250.7L327.5 250.7L327.5 250.7L329.0 250.7L329.0 250.7L330.5 250.7L330.5 249.2L332.0 249.2L332.0 250.7L333.5 250.7L333.5 250.7L335.0 250.7L335.0 248.6L336.5 248.6L336.5 248.6L338.0 248.6L338.0 248.6L339.5 248.6L339.5 248.6L341.0 248.6L341.0 248.6L342.5 248.6L342.5 248.6L344.0 248.6L344.0 248.6L345.5 248.6L345.5 248.6L347.0 248.6L347.0 250.3L348.5 250.3L348.5 250.3L350.0 250.3L350.0 250.3L351.5 250.3L351.5 250.3L353.0 250.3L353.0 249.8L354.5 249.8L354.5 249.8L356.0 249.8L356.0 250.7L357.5 250.7L357.5 250.7L359.0 250.7L359.0 250.7L360.5 250.7L360.5 248.6L362.0 248.6L362.0 249.2L363.5 249.2L363.5 249.2L365.0 249.2L365.0 249.2L366.5 249.2L366.5 249.8L368.0 249.8L368.0 249.8L369.5 249.8L369.5 249.2L371.0 249.2L371.0 250.3L372.5 250.3L372.5 250.3L374.0 250.3L374.0 250.3L375.5 250.3L375.5 250.3L377.0 250.3L377.0 248.6L378.5 248.6L378.5 250.3L380.0 250.3L380.0 250.3L381.5 250.3L381.5 250.3L383.0 250.3L383.0 250.3L384.5 250.3L384.5 250.3L386.0 250.3L386.0 250.3L387.5 250.3L387.5 248.6L389.0 248.6L389.0 250.3L390.5 250.3L390.5 249.8L392.0 249.8L392.0 249.8L393.5 249.8L393.5 249.2L395.0 249.2L395.0 250.7L396.5 250.7L396.5 250.7L398.0 250.7L398.0 249.2L399.5 249.2L399.5 249.2L401.0 249.2L401.0 249.2L402.5 249.2L402.5 250.3L404.0 250.3L404.0 250.3L405.5 250.3L405.5 250.3L407.0 250.3L407.0 250.3L408.5 250.3L408.5 250.3L410.0 250.3L410.0 250.3L411.5 250.3L411.5 248.6L413.0 248.6L413.0 248.6L414.5 248.6L414.5 248.6L416.0 248.6L416.0 249.8L417.5 249.8L417.5 249.2L419.0 249.2L419.0 250.7L420.5 250.7L420.5 248.6L422.0 248.6L422.0 248.6L423.5 248.6L423.5 248.6L425.0 248.6L425.0 248.6L426.5 248.6L426.5 250.3L428.0 250.3L428.0 250.3L429.5 250.3L429.5 250.7L431.0 250.7L431.0 250.3L432.5 250.3L432.5 250.3L434.0 250.3L434.0 250.3L435.5 250.3L435.5 249.8L437.0 249.8L437.0 249.8L438.5 249.8L438.5 250.7L440.0 250.7L440.0 250.7L441.5 250.7L441.5 250.7L443.0 250.7L443.0 250.7L444.5 250.7L444.5 249.8L446.0 249.8L446.0 249.8L447.5 249.8L447.5 249.8L449.0 249.8L449.0 249.8L450.5 249.8L450.5 249.8L452.0 249.8L452.0 250.3L453.5 250.3L453.5 250.3L455.0 250.3L455.0 250.3L456.5 250.3L456.5 250.3L458.0 250.3L458.0 250.3L459.5 250.3L459.5 250.7L461.0 250.7L461.0 249.8L462.5 249.8L462.5 249.8L464.0 249.8L464.0 249.8L465.5 249.8L465.5 249.8L467.0 249.8L467.0 249.8L468.5 249.8L468.5 249.8L470.0 249.8L470.0 249.8L471.5 249.8L471.5 250.7L473.0 250.7L473.0 250.7L474.5 250.7L474.5 250.7L476.0 250.7L476.0 250.7L477.5 250.7L477.5 250.7L479.0 250.7L479.0 248.6L480.5 248.6L480.5 250.3L482.0 250.3L482.0 249.8L483.5 249.8L483.5 249.2L485.0 249.2L485.0 249.2L486.5 249.2L486.5 249.2L488.0 249.2L488.0 249.8L489.5 249.8L489.5 249.2L491.0 249.2L491.0 249.2L492.5 249.2L492.5 249.2L494.0 249.2L494.0 249.2L495.5 249.2L495.5 249.2L497.0 249.2L497.0 250.7L498.5 250.7L498.5 250.7L500.0 250.7L500.0 249.8L501.5 249.8L501.5 250.3L503.0 250.3L503.0 250.7L504.5 250.7L504.5 249.8L506.0 249.8L506.0 249.8L507.5 249.8L507.5 249.8L509.0 249.8L509.0 249.8L510.5 249.8L510.5 249.2L512.0 249.2L512.0 248.6L513.5 248.6L513.5 248.6L515.0 248.6L515.0 249.2L516.5 249.2L516.5 248.6L518.0 248.6L518.0 248.6L519.5 248.6L519.5 249.8L521.0 249.8L521.0 249.8L522.5 249.8L522.5 249.8L524.0 249.8L524.0 250.7L525.5 250.7L525.5 250.7L527.0 250.7L527.0 250.3L528.5 250.3L528.5 250.3L530.0 250.3L530.0 250.3L531.5 250.3L531.5 250.3L533.0 250.3L533.0 250.3L534.5 250.3L534.5 250.7L536.0 250.7L536.0 250.7L537.5 250.7L537.5 250.7L539.0 250.7L539.0 250.7L540.5 250.7L540.5 250.7L542.0 250.7L542.0 250.7L543.5 250.7L543.5 250.7L545.0 250.7L545.0 248.6L546.5 248.6L546.5 248.6L548.0 248.6L548.0 248.6L549.5 248.6L549.5 248.6L551.0 248.6L551.0 249.2L552.5 249.2L552.5 249.2L554.0 249.2L554.0 249.2L555.5 249.2L555.5 248.6L557.0 248.6L557.0 250.3L558.5 250.3L558.5 249.8L560.0 249.8L560.0 249.8L561.5 249.8L561.5 249.8L563.0 249.8L563.0 249.8L564.5 249.8L564.5 249.8L566.0 249.8L566.0 250.3L567.5 250.3L567.5 250.3L569.0 250.3L569.0 250.3L570.5 250.3L570.5 249.2L572.0 249.2L572.0 249.2L573.5 249.2L573.5 249.2L575.0 249.2L575.0 249.2L576.5 249.2L576.5 249.2L578.0 249.2L578.0 250.7L579.5 250.7L579.5 250.7L581.0 250.7L581.0 249.2L582.5 249.2L582.5 248.6L584.0 248.6L584.0 248.6L585.5 248.6L585.5 249.2L587.0 249.2L587.0 249.2L588.5 249.2L588.5 249.2L590.0 249.2L590.0 249.2L591.5 249.2L591.5 250.3L593.0 250.3L593.0 250.3L594.5 250.3L594.5 248.6L596.0 248.6L596.0 249.8L597.5 249.8L597.5 250.3L599.0 250.3L599.0 249.8L600.5 249.8L600.5 249.8L602.0 249.8L602.0 249.8L603.5 249.8L603.5 249.8L605.0 249.8L605.0 249.8L606.5 249.8L606.5 249.8L608.0 249.8L608.0 248.6L609.5 248.6L609.5 248.6L611.0 248.6L611.0 248.6L612.5 248.6L612.5 248.6L614.0 248.6L614.0 249.2L615.5 249.2L615.5 249.2L617.0 249.2L617.0 249.2L618.5 249.2L618.5 249.2L620.0 249.2L620.0 249.8L621.5 249.8L621.5 250.3L623.0 250.3L623.0 250.3L624.5 250.3L624.5 250.3L626.0 250.3L626.0 250.3L627.5 250.3L627.5 250.3L629.0 250.3L629.0 249.8L630.5 249.8L630.5 250.3L632.0 250.3L632.0 248.6L633.5 248.6L633.5 248.6L635.0 248.6L635.0 250.3L636.5 250.3L636.5 250.3L638.0 250.3L638.0 250.3L639.5 250.3L639.5 250.7L641.0 250.7L641.0 250.7L642.5 250.7L642.5 249.2L644.0 249.2L644.0 248.6L645.5 248.6L645.5 249.8L647.0 249.8L647.0 249.8L648.5 249.8L648.5 249.8L650.0 249.8L650.0 250.7L651.5 250.7L651.5 250.7L653.0 250.7L653.0 249.2L654.5 249.2L654.5 250.7L656.0 250.7L656.0 250.7L657.5 250.7L657.5 249.8L659.0 249.8L659.0 250.3L660.5 250.3L660.5 249.8L662.0 249.8L662.0 249.8L663.5 249.8L663.5 248.6L665.0 248.6L665.0 248.6L666.5 248.6L666.5 249.2L668.0 249.2L668.0 248.6L669.5 248.6L669.5 249.8L671.0 249.8L671.0 249.8L672.5 249.8L672.5 249.8L674.0 249.8L674.0 248.6L675.5 248.6L675.5 249.2L677.0 249.2L677.0 249.2L678.5 249.2L678.5 249.8L680.0 249.8L680.0 250.7L681.5 250.7L681.5 250.7L683.0 250.7L683.0 249.2L684.5 249.2L684.5 249.2L686.0 249.2L686.0 249.2L687.5 249.2L687.5 249.2L689.0 249.2L689.0 249.8L689.7 249.8L689.7 258.7z" fill="#0a4cec"/><path d="M26 258.7L26.0 252.3L27.5 252.3L27.5 253.0L29.0 253.0L29.0 251.8L30.5 251.8L30.5 253.0L32.0 253.0L32.0 251.3L33.5 251.3L33.5 252.7L35.0 252.7L35.0 252.7L36.5 252.7L36.5 253.5L38.0 253.5L38.0 252.3L39.5 252.3L39.5 253.0L41.0 253.0L41.0 253.0L42.5 253.0L42.5 253.0L44.0 253.0L44.0 253.0L45.5 253.0L45.5 253.9L47.0 253.9L47.0 253.0L48.5 253.0L48.5 253.0L50.0 253.0L50.0 253.0L51.5 253.0L51.5 252.5L53.0 252.5L53.0 253.9L54.5 253.9L54.5 253.5L56.0 253.5L56.0 253.5L57.5 253.5L57.5 252.3L59.0 252.3L59.0 253.5L60.5 253.5L60.5 253.0L62.0 253.0L62.0 254.2L63.5 254.2L63.5 253.0L65.0 253.0L65.0 253.5L66.5 253.5L66.5 253.5L68.0 253.5L68.0 252.3L69.5 252.3L69.5 252.3L71.0 252.3L71.0 252.3L72.5 252.3L72.5 251.8L74.0 251.8L74.0 252.5L75.5 252.5L75.5 252.5L77.0 252.5L77.0 253.9L78.5 253.9L78.5 253.5L80.0 253.5L80.0 253.5L81.5 253.5L81.5 254.2L83.0 254.2L83.0 254.2L84.5 254.2L84.5 254.2L86.0 254.2L86.0 254.2L87.5 254.2L87.5 254.2L89.0 254.2L89.0 253.0L90.5 253.0L90.5 251.8L92.0 251.8L92.0 253.5L93.5 253.5L93.5 253.5L95.0 253.5L95.0 253.5L96.5 253.5L96.5 253.5L98.0 253.5L98.0 252.5L99.5 252.5L99.5 252.5L101.0 252.5L101.0 252.5L102.5 252.5L102.5 254.2L104.0 254.2L104.0 251.3L105.5 251.3L105.5 252.3L107.0 252.3L107.0 252.5L108.5 252.5L108.5 252.5L110.0 252.5L110.0 252.5L111.5 252.5L111.5 254.2L113.0 254.2L113.0 254.2L114.5 254.2L114.5 254.2L116.0 254.2L116.0 254.2L117.5 254.2L117.5 254.2L119.0 254.2L119.0 254.2L120.5 254.2L120.5 254.2L122.0 254.2L122.0 254.2L123.5 254.2L123.5 253.9L125.0 253.9L125.0 253.9L126.5 253.9L126.5 253.0L128.0 253.0L128.0 253.0L129.5 253.0L129.5 253.5L131.0 253.5L131.0 254.4L132.5 254.4L132.5 254.4L134.0 254.4L134.0 252.7L135.5 252.7L135.5 252.7L137.0 252.7L137.0 254.1L138.5 254.1L138.5 254.1L140.0 254.1L140.0 254.1L141.5 254.1L141.5 254.4L143.0 254.4L143.0 253.7L144.5 253.7L144.5 253.7L146.0 253.7L146.0 254.4L147.5 254.4L147.5 252.7L149.0 252.7L149.0 254.1L150.5 254.1L150.5 252.7L152.0 252.7L152.0 252.7L153.5 252.7L153.5 253.7L155.0 253.7L155.0 253.2L156.5 253.2L156.5 253.7L158.0 253.7L158.0 254.1L159.5 254.1L159.5 253.7L161.0 253.7L161.0 253.7L162.5 253.7L162.5 253.7L164.0 253.7L164.0 253.7L165.5 253.7L165.5 253.7L167.0 253.7L167.0 253.7L168.5 253.7L168.5 254.1L170.0 254.1L170.0 254.1L171.5 254.1L171.5 254.1L173.0 254.1L173.0 254.1L174.5 254.1L174.5 253.2L176.0 253.2L176.0 253.2L177.5 253.2L177.5 253.7L179.0 253.7L179.0 253.7L180.5 253.7L180.5 254.1L182.0 254.1L182.0 252.7L183.5 252.7L183.5 252.7L185.0 252.7L185.0 253.7L186.5 253.7L186.5 254.1L188.0 254.1L188.0 254.1L189.5 254.1L189.5 253.7L191.0 253.7L191.0 252.7L192.5 252.7L192.5 253.7L194.0 253.7L194.0 253.7L195.5 253.7L195.5 253.7L197.0 253.7L197.0 252.7L198.5 252.7L198.5 252.7L200.0 252.7L200.0 254.1L201.5 254.1L201.5 254.1L203.0 254.1L203.0 254.1L204.5 254.1L204.5 254.4L206.0 254.4L206.0 254.4L207.5 254.4L207.5 254.4L209.0 254.4L209.0 254.4L210.5 254.4L210.5 254.4L212.0 254.4L212.0 254.4L213.5 254.4L213.5 254.4L215.0 254.4L215.0 254.4L216.5 254.4L216.5 254.4L218.0 254.4L218.0 252.7L219.5 252.7L219.5 252.7L221.0 252.7L221.0 252.7L222.5 252.7L222.5 253.7L224.0 253.7L224.0 252.7L225.5 252.7L225.5 253.7L227.0 253.7L227.0 253.2L228.5 253.2L228.5 253.2L230.0 253.2L230.0 253.2L231.5 253.2L231.5 253.2L233.0 253.2L233.0 253.2L234.5 253.2L234.5 253.7L236.0 253.7L236.0 252.7L237.5 252.7L237.5 252.7L239.0 252.7L239.0 253.7L240.5 253.7L240.5 254.1L242.0 254.1L242.0 254.1L243.5 254.1L243.5 254.1L245.0 254.1L245.0 254.1L246.5 254.1L246.5 253.7L248.0 253.7L248.0 253.7L249.5 253.7L249.5 252.7L251.0 252.7L251.0 252.7L252.5 252.7L252.5 252.7L254.0 252.7L254.0 252.7L255.5 252.7L255.5 253.2L257.0 253.2L257.0 254.1L258.5 254.1L258.5 254.1L260.0 254.1L260.0 254.1L261.5 254.1L261.5 254.4L263.0 254.4L263.0 254.4L264.5 254.4L264.5 253.7L266.0 253.7L266.0 253.7L267.5 253.7L267.5 253.7L269.0 253.7L269.0 253.7L270.5 253.7L270.5 254.4L272.0 254.4L272.0 254.4L273.5 254.4L273.5 253.7L275.0 253.7L275.0 253.7L276.5 253.7L276.5 254.1L278.0 254.1L278.0 252.7L279.5 252.7L279.5 252.7L281.0 252.7L281.0 253.7L282.5 253.7L282.5 253.7L284.0 253.7L284.0 253.7L285.5 253.7L285.5 254.1L287.0 254.1L287.0 254.1L288.5 254.1L288.5 254.4L290.0 254.4L290.0 253.7L291.5 253.7L291.5 253.7L293.0 253.7L293.0 253.7L294.5 253.7L294.5 253.7L296.0 253.7L296.0 253.7L297.5 253.7L297.5 253.7L299.0 253.7L299.0 253.7L300.5 253.7L300.5 253.2L302.0 253.2L302.0 254.1L303.5 254.1L303.5 254.1L305.0 254.1L305.0 254.1L306.5 254.1L306.5 254.1L308.0 254.1L308.0 254.4L309.5 254.4L309.5 254.4L311.0 254.4L311.0 254.4L312.5 254.4L312.5 253.7L314.0 253.7L314.0 253.7L315.5 253.7L315.5 253.2L317.0 253.2L317.0 254.4L318.5 254.4L318.5 253.7L320.0 253.7L320.0 253.7L321.5 253.7L321.5 253.7L323.0 253.7L323.0 253.7L324.5 253.7L324.5 254.1L326.0 254.1L326.0 253.2L327.5 253.2L327.5 253.2L329.0 253.2L329.0 253.2L330.5 253.2L330.5 253.2L332.0 253.2L332.0 253.2L333.5 253.2L333.5 252.7L335.0 252.7L335.0 252.7L336.5 252.7L336.5 254.1L338.0 254.1L338.0 254.4L339.5 254.4L339.5 254.4L341.0 254.4L341.0 254.1L342.5 254.1L342.5 253.7L344.0 253.7L344.0 254.4L345.5 254.4L345.5 254.4L347.0 254.4L347.0 254.4L348.5 254.4L348.5 254.4L350.0 254.4L350.0 253.2L351.5 253.2L351.5 253.7L353.0 253.7L353.0 254.1L354.5 254.1L354.5 253.7L356.0 253.7L356.0 253.7L357.5 253.7L357.5 253.7L359.0 253.7L359.0 253.7L360.5 253.7L360.5 252.7L362.0 252.7L362.0 253.7L363.5 253.7L363.5 253.7L365.0 253.7L365.0 253.7L366.5 253.7L366.5 253.2L368.0 253.2L368.0 253.7L369.5 253.7L369.5 253.7L371.0 253.7L371.0 254.4L372.5 254.4L372.5 254.4L374.0 254.4L374.0 253.7L375.5 253.7L375.5 253.7L377.0 253.7L377.0 253.7L378.5 253.7L378.5 253.7L380.0 253.7L380.0 254.4L381.5 254.4L381.5 254.1L383.0 254.1L383.0 253.2L384.5 253.2L384.5 253.7L386.0 253.7L386.0 253.2L387.5 253.2L387.5 253.7L389.0 253.7L389.0 253.7L390.5 253.7L390.5 253.7L392.0 253.7L392.0 254.4L393.5 254.4L393.5 254.4L395.0 254.4L395.0 252.7L396.5 252.7L396.5 252.7L398.0 252.7L398.0 252.7L399.5 252.7L399.5 253.7L401.0 253.7L401.0 253.7L402.5 253.7L402.5 253.7L404.0 253.7L404.0 253.7L405.5 253.7L405.5 254.4L407.0 254.4L407.0 254.4L408.5 254.4L408.5 253.7L410.0 253.7L410.0 254.1L411.5 254.1L411.5 253.2L413.0 253.2L413.0 254.4L414.5 254.4L414.5 254.4L416.0 254.4L416.0 253.7L417.5 253.7L417.5 253.7L419.0 253.7L419.0 253.7L420.5 253.7L420.5 253.7L422.0 253.7L422.0 253.7L423.5 253.7L423.5 253.2L425.0 253.2L425.0 253.7L426.5 253.7L426.5 252.7L428.0 252.7L428.0 252.7L429.5 252.7L429.5 252.7L431.0 252.7L431.0 252.7L432.5 252.7L432.5 252.7L434.0 252.7L434.0 252.7L435.5 252.7L435.5 252.7L437.0 252.7L437.0 252.7L438.5 252.7L438.5 252.7L440.0 252.7L440.0 252.7L441.5 252.7L441.5 252.7L443.0 252.7L443.0 252.7L444.5 252.7L444.5 252.7L446.0 252.7L446.0 252.7L447.5 252.7L447.5 252.7L449.0 252.7L449.0 252.7L450.5 252.7L450.5 254.4L452.0 254.4L452.0 254.4L453.5 254.4L453.5 254.1L455.0 254.1L455.0 254.1L456.5 254.1L456.5 253.7L458.0 253.7L458.0 253.7L459.5 253.7L459.5 253.7L461.0 253.7L461.0 253.7L462.5 253.7L462.5 253.7L464.0 253.7L464.0 253.2L465.5 253.2L465.5 253.7L467.0 253.7L467.0 253.7L468.5 253.7L468.5 253.7L470.0 253.7L470.0 252.7L471.5 252.7L471.5 254.4L473.0 254.4L473.0 254.4L474.5 254.4L474.5 253.2L476.0 253.2L476.0 254.4L477.5 254.4L477.5 254.4L479.0 254.4L479.0 253.2L480.5 253.2L480.5 253.2L482.0 253.2L482.0 253.2L483.5 253.2L483.5 253.2L485.0 253.2L485.0 253.2L486.5 253.2L486.5 253.2L488.0 253.2L488.0 253.2L489.5 253.2L489.5 253.2L491.0 253.2L491.0 253.2L492.5 253.2L492.5 253.2L494.0 253.2L494.0 253.7L495.5 253.7L495.5 253.7L497.0 253.7L497.0 253.7L498.5 253.7L498.5 253.7L500.0 253.7L500.0 253.7L501.5 253.7L501.5 253.7L503.0 253.7L503.0 253.7L504.5 253.7L504.5 253.7L506.0 253.7L506.0 253.7L507.5 253.7L507.5 253.7L509.0 253.7L509.0 253.7L510.5 253.7L510.5 253.2L512.0 253.2L512.0 254.1L513.5 254.1L513.5 252.7L515.0 252.7L515.0 252.7L516.5 252.7L516.5 252.7L518.0 252.7L518.0 253.7L519.5 253.7L519.5 253.7L521.0 253.7L521.0 253.7L522.5 253.7L522.5 253.7L524.0 253.7L524.0 252.7L525.5 252.7L525.5 252.7L527.0 252.7L527.0 252.7L528.5 252.7L528.5 252.7L530.0 252.7L530.0 254.1L531.5 254.1L531.5 254.1L533.0 254.1L533.0 253.7L534.5 253.7L534.5 253.7L536.0 253.7L536.0 254.1L537.5 254.1L537.5 253.7L539.0 253.7L539.0 252.7L540.5 252.7L540.5 252.7L542.0 252.7L542.0 254.1L543.5 254.1L543.5 253.2L545.0 253.2L545.0 253.2L546.5 253.2L546.5 252.7L548.0 252.7L548.0 252.7L549.5 252.7L549.5 253.7L551.0 253.7L551.0 254.1L552.5 254.1L552.5 253.7L554.0 253.7L554.0 253.7L555.5 253.7L555.5 254.1L557.0 254.1L557.0 254.1L558.5 254.1L558.5 252.7L560.0 252.7L560.0 252.7L561.5 252.7L561.5 254.1L563.0 254.1L563.0 253.2L564.5 253.2L564.5 253.2L566.0 253.2L566.0 253.2L567.5 253.2L567.5 253.2L569.0 253.2L569.0 253.2L570.5 253.2L570.5 253.2L572.0 253.2L572.0 253.2L573.5 253.2L573.5 253.2L575.0 253.2L575.0 254.4L576.5 254.4L576.5 254.4L578.0 254.4L578.0 254.4L579.5 254.4L579.5 253.2L581.0 253.2L581.0 253.7L582.5 253.7L582.5 253.7L584.0 253.7L584.0 254.1L585.5 254.1L585.5 254.1L587.0 254.1L587.0 253.2L588.5 253.2L588.5 253.2L590.0 253.2L590.0 254.4L591.5 254.4L591.5 253.2L593.0 253.2L593.0 253.7L594.5 253.7L594.5 253.7L596.0 253.7L596.0 254.1L597.5 254.1L597.5 253.2L599.0 253.2L599.0 253.2L600.5 253.2L600.5 253.2L602.0 253.2L602.0 253.2L603.5 253.2L603.5 252.7L605.0 252.7L605.0 253.7L606.5 253.7L606.5 254.4L608.0 254.4L608.0 253.7L609.5 253.7L609.5 253.7L611.0 253.7L611.0 253.7L612.5 253.7L612.5 253.7L614.0 253.7L614.0 254.4L615.5 254.4L615.5 254.4L617.0 254.4L617.0 254.4L618.5 254.4L618.5 254.4L620.0 254.4L620.0 252.7L621.5 252.7L621.5 252.7L623.0 252.7L623.0 252.7L624.5 252.7L624.5 252.7L626.0 252.7L626.0 253.7L627.5 253.7L627.5 254.4L629.0 254.4L629.0 253.7L630.5 253.7L630.5 253.7L632.0 253.7L632.0 253.7L633.5 253.7L633.5 253.7L635.0 253.7L635.0 253.7L636.5 253.7L636.5 253.2L638.0 253.2L638.0 253.2L639.5 253.2L639.5 254.4L641.0 254.4L641.0 254.4L642.5 254.4L642.5 252.7L644.0 252.7L644.0 252.7L645.5 252.7L645.5 252.7L647.0 252.7L647.0 252.7L648.5 252.7L648.5 252.7L650.0 252.7L650.0 252.7L651.5 252.7L651.5 252.7L653.0 252.7L653.0 252.7L654.5 252.7L654.5 252.7L656.0 252.7L656.0 254.1L657.5 254.1L657.5 254.1L659.0 254.1L659.0 254.1L660.5 254.1L660.5 253.7L662.0 253.7L662.0 252.7L663.5 252.7L663.5 252.7L665.0 252.7L665.0 252.7L666.5 252.7L666.5 253.7L668.0 253.7L668.0 253.7L669.5 253.7L669.5 253.7L671.0 253.7L671.0 253.7L672.5 253.7L672.5 253.7L674.0 253.7L674.0 253.7L675.5 253.7L675.5 254.1L677.0 254.1L677.0 253.2L678.5 253.2L678.5 253.7L680.0 253.7L680.0 253.7L681.5 253.7L681.5 252.7L683.0 252.7L683.0 254.1L684.5 254.1L684.5 253.7L686.0 253.7L686.0 253.7L687.5 253.7L687.5 254.4L689.0 254.4L689.0 254.4L689.7 254.4L689.7 258.7z" fill="#06a0ff"/><path d="M26 258.7L26.0 256.4L27.5 256.4L27.5 256.7L29.0 256.7L29.0 256.7L30.5 256.7L30.5 255.5L32.0 255.5L32.0 255.5L33.5 255.5L33.5 256.7L35.0 256.7L35.0 256.9L36.5 256.9L36.5 256.9L38.0 256.9L38.0 256.4L39.5 256.4L39.5 256.7L41.0 256.7L41.0 255.8L42.5 255.8L42.5 255.8L44.0 255.8L44.0 254.6L45.5 254.6L45.5 256.7L47.0 256.7L47.0 256.7L48.5 256.7L48.5 256.9L50.0 256.9L50.0 256.9L51.5 256.9L51.5 256.9L53.0 256.9L53.0 256.4L54.5 256.4L54.5 256.4L56.0 256.4L56.0 256.4L57.5 256.4L57.5 256.4L59.0 256.4L59.0 256.4L60.5 256.4L60.5 254.6L62.0 254.6L62.0 256.7L63.5 256.7L63.5 256.4L65.0 256.4L65.0 256.1L66.5 256.1L66.5 255.8L68.0 255.8L68.0 256.4L69.5 256.4L69.5 256.4L71.0 256.4L71.0 256.4L72.5 256.4L72.5 255.2L74.0 255.2L74.0 256.9L75.5 256.9L75.5 256.9L77.0 256.9L77.0 256.4L78.5 256.4L78.5 256.4L80.0 256.4L80.0 255.5L81.5 255.5L81.5 255.8L83.0 255.8L83.0 254.6L84.5 254.6L84.5 255.8L86.0 255.8L86.0 256.4L87.5 256.4L87.5 255.8L89.0 255.8L89.0 256.4L90.5 256.4L90.5 256.9L92.0 256.9L92.0 256.9L93.5 256.9L93.5 255.5L95.0 255.5L95.0 256.9L96.5 256.9L96.5 256.9L98.0 256.9L98.0 256.4L99.5 256.4L99.5 255.2L101.0 255.2L101.0 256.4L102.5 256.4L102.5 256.4L104.0 256.4L104.0 256.4L105.5 256.4L105.5 256.4L107.0 256.4L107.0 256.4L108.5 256.4L108.5 256.4L110.0 256.4L110.0 256.4L111.5 256.4L111.5 256.4L113.0 256.4L113.0 256.4L114.5 256.4L114.5 255.2L116.0 255.2L116.0 255.5L117.5 255.5L117.5 256.9L119.0 256.9L119.0 256.9L120.5 256.9L120.5 256.9L122.0 256.9L122.0 256.4L123.5 256.4L123.5 256.7L125.0 256.7L125.0 256.1L126.5 256.1L126.5 255.8L128.0 255.8L128.0 256.9L129.5 256.9L129.5 256.4L131.0 256.4L131.0 256.3L132.5 256.3L132.5 256.3L134.0 256.3L134.0 256.9L135.5 256.9L135.5 256.9L137.0 256.9L137.0 256.9L138.5 256.9L138.5 256.9L140.0 256.9L140.0 256.9L141.5 256.9L141.5 256.3L143.0 256.3L143.0 256.3L144.5 256.3L144.5 256.3L146.0 256.3L146.0 257.1L147.5 257.1L147.5 256.3L149.0 256.3L149.0 256.6L150.5 256.6L150.5 256.6L152.0 256.6L152.0 256.6L153.5 256.6L153.5 256.6L155.0 256.6L155.0 256.6L156.5 256.6L156.5 256.6L158.0 256.6L158.0 256.6L159.5 256.6L159.5 256.6L161.0 256.6L161.0 256.6L162.5 256.6L162.5 256.9L164.0 256.9L164.0 256.9L165.5 256.9L165.5 256.6L167.0 256.6L167.0 256.9L168.5 256.9L168.5 256.9L170.0 256.9L170.0 256.3L171.5 256.3L171.5 256.3L173.0 256.3L173.0 256.9L174.5 256.9L174.5 256.9L176.0 256.9L176.0 256.6L177.5 256.6L177.5 256.6L179.0 256.6L179.0 257.1L180.5 257.1L180.5 257.1L182.0 257.1L182.0 256.6L183.5 256.6L183.5 257.1L185.0 257.1L185.0 256.6L186.5 256.6L186.5 256.6L188.0 256.6L188.0 256.6L189.5 256.6L189.5 256.3L191.0 256.3L191.0 256.3L192.5 256.3L192.5 256.6L194.0 256.6L194.0 256.6L195.5 256.6L195.5 257.1L197.0 257.1L197.0 256.6L198.5 256.6L198.5 256.9L200.0 256.9L200.0 256.9L201.5 256.9L201.5 256.9L203.0 256.9L203.0 256.6L204.5 256.6L204.5 256.6L206.0 256.6L206.0 256.6L207.5 256.6L207.5 256.6L209.0 256.6L209.0 256.6L210.5 256.6L210.5 256.6L212.0 256.6L212.0 256.9L213.5 256.9L213.5 256.9L215.0 256.9L215.0 256.9L216.5 256.9L216.5 256.3L218.0 256.3L218.0 256.3L219.5 256.3L219.5 256.3L221.0 256.3L221.0 256.3L222.5 256.3L222.5 256.3L224.0 256.3L224.0 256.3L225.5 256.3L225.5 256.3L227.0 256.3L227.0 256.9L228.5 256.9L228.5 256.9L230.0 256.9L230.0 256.9L231.5 256.9L231.5 256.9L233.0 256.9L233.0 256.6L234.5 256.6L234.5 256.6L236.0 256.6L236.0 256.6L237.5 256.6L237.5 256.6L239.0 256.6L239.0 256.6L240.5 256.6L240.5 256.6L242.0 256.6L242.0 256.6L243.5 256.6L243.5 257.1L245.0 257.1L245.0 256.6L246.5 256.6L246.5 256.9L248.0 256.9L248.0 256.6L249.5 256.6L249.5 256.0L251.0 256.0L251.0 256.0L252.5 256.0L252.5 256.9L254.0 256.9L254.0 256.6L255.5 256.6L255.5 256.3L257.0 256.3L257.0 256.3L258.5 256.3L258.5 257.1L260.0 257.1L260.0 256.6L261.5 256.6L261.5 256.6L263.0 256.6L263.0 256.0L264.5 256.0L264.5 256.3L266.0 256.3L266.0 256.3L267.5 256.3L267.5 256.6L269.0 256.6L269.0 256.3L270.5 256.3L270.5 256.3L272.0 256.3L272.0 256.3L273.5 256.3L273.5 256.3L275.0 256.3L275.0 256.3L276.5 256.3L276.5 256.3L278.0 256.3L278.0 256.3L279.5 256.3L279.5 256.3L281.0 256.3L281.0 256.3L282.5 256.3L282.5 256.3L284.0 256.3L284.0 256.3L285.5 256.3L285.5 256.3L287.0 256.3L287.0 256.3L288.5 256.3L288.5 256.3L290.0 256.3L290.0 257.1L291.5 257.1L291.5 257.1L293.0 257.1L293.0 257.1L294.5 257.1L294.5 256.6L296.0 256.6L296.0 256.9L297.5 256.9L297.5 257.1L299.0 257.1L299.0 257.1L300.5 257.1L300.5 256.6L302.0 256.6L302.0 256.6L303.5 256.6L303.5 256.9L305.0 256.9L305.0 256.9L306.5 256.9L306.5 256.9L308.0 256.9L308.0 256.0L309.5 256.0L309.5 256.0L311.0 256.0L311.0 256.0L312.5 256.0L312.5 256.0L314.0 256.0L314.0 257.1L315.5 257.1L315.5 257.1L317.0 257.1L317.0 257.1L318.5 257.1L318.5 256.6L320.0 256.6L320.0 256.6L321.5 256.6L321.5 256.9L323.0 256.9L323.0 256.9L324.5 256.9L324.5 256.9L326.0 256.9L326.0 256.9L327.5 256.9L327.5 256.6L329.0 256.6L329.0 256.6L330.5 256.6L330.5 256.6L332.0 256.6L332.0 256.9L333.5 256.9L333.5 256.6L335.0 256.6L335.0 256.6L336.5 256.6L336.5 256.6L338.0 256.6L338.0 256.6L339.5 256.6L339.5 256.6L341.0 256.6L341.0 256.3L342.5 256.3L342.5 256.0L344.0 256.0L344.0 256.9L345.5 256.9L345.5 256.3L347.0 256.3L347.0 256.3L348.5 256.3L348.5 256.6L350.0 256.6L350.0 256.6L351.5 256.6L351.5 256.6L353.0 256.6L353.0 256.9L354.5 256.9L354.5 256.9L356.0 256.9L356.0 256.9L357.5 256.9L357.5 256.9L359.0 256.9L359.0 256.9L360.5 256.9L360.5 256.6L362.0 256.6L362.0 256.3L363.5 256.3L363.5 256.3L365.0 256.3L365.0 256.3L366.5 256.3L366.5 256.3L368.0 256.3L368.0 256.6L369.5 256.6L369.5 256.6L371.0 256.6L371.0 256.6L372.5 256.6L372.5 256.6L374.0 256.6L374.0 256.6L375.5 256.6L375.5 256.6L377.0 256.6L377.0 257.1L378.5 257.1L378.5 257.1L380.0 257.1L380.0 257.1L381.5 257.1L381.5 257.1L383.0 257.1L383.0 257.1L384.5 257.1L384.5 256.0L386.0 256.0L386.0 256.0L387.5 256.0L387.5 256.0L389.0 256.0L389.0 256.0L390.5 256.0L390.5 256.0L392.0 256.0L392.0 256.3L393.5 256.3L393.5 256.3L395.0 256.3L395.0 256.3L396.5 256.3L396.5 256.6L398.0 256.6L398.0 256.6L399.5 256.6L399.5 256.9L401.0 256.9L401.0 256.9L402.5 256.9L402.5 256.9L404.0 256.9L404.0 256.6L405.5 256.6L405.5 256.9L407.0 256.9L407.0 256.9L408.5 256.9L408.5 256.6L410.0 256.6L410.0 256.6L411.5 256.6L411.5 256.6L413.0 256.6L413.0 256.3L414.5 256.3L414.5 256.0L416.0 256.0L416.0 256.9L417.5 256.9L417.5 256.9L419.0 256.9L419.0 256.9L420.5 256.9L420.5 256.9L422.0 256.9L422.0 256.9L423.5 256.9L423.5 256.9L425.0 256.9L425.0 256.9L426.5 256.9L426.5 256.3L428.0 256.3L428.0 256.6L429.5 256.6L429.5 256.6L431.0 256.6L431.0 256.6L432.5 256.6L432.5 257.1L434.0 257.1L434.0 257.1L435.5 257.1L435.5 256.3L437.0 256.3L437.0 256.9L438.5 256.9L438.5 256.9L440.0 256.9L440.0 256.6L441.5 256.6L441.5 256.6L443.0 256.6L443.0 256.3L444.5 256.3L444.5 257.1L446.0 257.1L446.0 256.3L447.5 256.3L447.5 257.1L449.0 257.1L449.0 257.1L450.5 257.1L450.5 257.1L452.0 257.1L452.0 257.1L453.5 257.1L453.5 257.1L455.0 257.1L455.0 256.3L456.5 256.3L456.5 256.3L458.0 256.3L458.0 256.3L459.5 256.3L459.5 256.9L461.0 256.9L461.0 256.3L462.5 256.3L462.5 256.9L464.0 256.9L464.0 256.3L465.5 256.3L465.5 256.3L467.0 256.3L467.0 256.3L468.5 256.3L468.5 256.3L470.0 256.3L470.0 256.3L471.5 256.3L471.5 256.3L473.0 256.3L473.0 256.3L474.5 256.3L474.5 256.3L476.0 256.3L476.0 256.3L477.5 256.3L477.5 256.3L479.0 256.3L479.0 256.3L480.5 256.3L480.5 256.3L482.0 256.3L482.0 256.3L483.5 256.3L483.5 256.6L485.0 256.6L485.0 256.0L486.5 256.0L486.5 256.0L488.0 256.0L488.0 256.0L489.5 256.0L489.5 256.0L491.0 256.0L491.0 256.0L492.5 256.0L492.5 256.6L494.0 256.6L494.0 256.0L495.5 256.0L495.5 256.6L497.0 256.6L497.0 256.0L498.5 256.0L498.5 256.9L500.0 256.9L500.0 256.0L501.5 256.0L501.5 256.0L503.0 256.0L503.0 256.0L504.5 256.0L504.5 256.0L506.0 256.0L506.0 256.9L507.5 256.9L507.5 256.9L509.0 256.9L509.0 256.9L510.5 256.9L510.5 257.1L512.0 257.1L512.0 256.6L513.5 256.6L513.5 256.0L515.0 256.0L515.0 256.9L516.5 256.9L516.5 256.6L518.0 256.6L518.0 256.6L519.5 256.6L519.5 256.6L521.0 256.6L521.0 256.6L522.5 256.6L522.5 256.6L524.0 256.6L524.0 256.6L525.5 256.6L525.5 256.6L527.0 256.6L527.0 256.6L528.5 256.6L528.5 257.1L530.0 257.1L530.0 257.1L531.5 257.1L531.5 256.0L533.0 256.0L533.0 256.6L534.5 256.6L534.5 256.6L536.0 256.6L536.0 256.6L537.5 256.6L537.5 256.6L539.0 256.6L539.0 256.9L540.5 256.9L540.5 256.9L542.0 256.9L542.0 256.9L543.5 256.9L543.5 256.3L545.0 256.3L545.0 256.3L546.5 256.3L546.5 256.3L548.0 256.3L548.0 256.3L549.5 256.3L549.5 256.3L551.0 256.3L551.0 256.3L552.5 256.3L552.5 256.3L554.0 256.3L554.0 256.3L555.5 256.3L555.5 256.6L557.0 256.6L557.0 256.6L558.5 256.6L558.5 256.0L560.0 256.0L560.0 256.0L561.5 256.0L561.5 256.9L563.0 256.9L563.0 256.9L564.5 256.9L564.5 256.9L566.0 256.9L566.0 256.9L567.5 256.9L567.5 256.9L569.0 256.9L569.0 256.9L570.5 256.9L570.5 256.9L572.0 256.9L572.0 256.9L573.5 256.9L573.5 256.6L575.0 256.6L575.0 257.1L576.5 257.1L576.5 256.6L578.0 256.6L578.0 257.1L579.5 257.1L579.5 256.6L581.0 256.6L581.0 256.0L582.5 256.0L582.5 257.1L584.0 257.1L584.0 257.1L585.5 257.1L585.5 257.1L587.0 257.1L587.0 257.1L588.5 257.1L588.5 256.3L590.0 256.3L590.0 256.6L591.5 256.6L591.5 256.6L593.0 256.6L593.0 257.1L594.5 257.1L594.5 257.1L596.0 257.1L596.0 256.6L597.5 256.6L597.5 256.6L599.0 256.6L599.0 256.3L600.5 256.3L600.5 256.6L602.0 256.6L602.0 256.6L603.5 256.6L603.5 256.6L605.0 256.6L605.0 256.0L606.5 256.0L606.5 257.1L608.0 257.1L608.0 256.0L609.5 256.0L609.5 256.3L611.0 256.3L611.0 256.3L612.5 256.3L612.5 256.3L614.0 256.3L614.0 256.3L615.5 256.3L615.5 256.3L617.0 256.3L617.0 256.6L618.5 256.6L618.5 256.6L620.0 256.6L620.0 256.3L621.5 256.3L621.5 256.6L623.0 256.6L623.0 256.6L624.5 256.6L624.5 256.0L626.0 256.0L626.0 256.6L627.5 256.6L627.5 256.6L629.0 256.6L629.0 256.9L630.5 256.9L630.5 257.1L632.0 257.1L632.0 257.1L633.5 257.1L633.5 257.1L635.0 257.1L635.0 257.1L636.5 257.1L636.5 257.1L638.0 257.1L638.0 257.1L639.5 257.1L639.5 257.1L641.0 257.1L641.0 256.6L642.5 256.6L642.5 256.6L644.0 256.6L644.0 256.0L645.5 256.0L645.5 256.0L647.0 256.0L647.0 256.0L648.5 256.0L648.5 257.1L650.0 257.1L650.0 257.1L651.5 257.1L651.5 256.6L653.0 256.6L653.0 256.6L654.5 256.6L654.5 256.0L656.0 256.0L656.0 256.0L657.5 256.0L657.5 257.1L659.0 257.1L659.0 257.1L660.5 257.1L660.5 256.6L662.0 256.6L662.0 256.6L663.5 256.6L663.5 256.6L665.0 256.6L665.0 257.1L666.5 257.1L666.5 257.1L668.0 257.1L668.0 256.9L669.5 256.9L669.5 256.3L671.0 256.3L671.0 256.3L672.5 256.3L672.5 256.3L674.0 256.3L674.0 256.3L675.5 256.3L675.5 256.3L677.0 256.3L677.0 256.3L678.5 256.3L678.5 256.3L680.0 256.3L680.0 257.1L681.5 257.1L681.5 257.1L683.0 257.1L683.0 257.1L684.5 257.1L684.5 256.0L686.0 256.0L686.0 256.3L687.5 256.3L687.5 256.3L689.0 256.3L689.0 256.6L689.7 256.6L689.7 258.7z" fill="#0cc8ff"/><path d="M61.2 255.5h3.5v1h-1.5zM321.3 255.5h1.5v1h-1.5zM150.7 254.9h2.5v1h-1.5zM656.3 256.1h2.5v1h-1.5zM191.5 256.1h1.5v1h-1.5zM578.4 255.5h1.5v1h-1.5zM79.9 254.9h1.5v1h-1.5zM324.1 256.1h1.5v1h-1.5zM470.4 256.1h2.5v1h-1.5zM382.8 255.5h3.5v1h-1.5zM399.3 254.9h1.5v1h-1.5zM527.3 254.9h1.5v1h-1.5zM231.8 255.5h3.5v1h-1.5zM181.9 256.1h3.5v1h-1.5zM674.8 256.1h2.5v1h-1.5zM424.2 256.1h3.5v1h-1.5zM427.9 256.1h2.5v1h-1.5zM633.6 254.9h1.5v1h-1.5zM470.0 255.5h1.5v1h-1.5zM545.0 256.1h1.5v1h-1.5zM372.8 256.1h3.5v1h-1.5zM259.2 254.9h2.5v1h-1.5zM211.9 254.9h1.5v1h-1.5zM538.1 256.1h2.5v1h-1.5zM77.4 256.1h3.5v1h-1.5zM380.9 254.9h2.5v1h-1.5zM607.6 255.5h2.5v1h-1.5zM347.5 256.1h1.5v1h-1.5zM34.5 256.1h1.5v1h-1.5zM520.3 254.9h1.5v1h-1.5zM633.1 256.1h1.5v1h-1.5zM222.5 255.5h1.5v1h-1.5zM350.1 255.5h1.5v1h-1.5zM218.7 256.1h3.5v1h-1.5zM36.9 254.9h3.5v1h-1.5zM666.8 256.1h3.5v1h-1.5zM257.9 256.1h1.5v1h-1.5zM109.2 254.9h1.5v1h-1.5zM72.8 254.9h1.5v1h-1.5zM239.9 256.1h3.5v1h-1.5zM458.2 256.1h3.5v1h-1.5zM82.6 255.5h1.5v1h-1.5zM91.5 254.9h2.5v1h-1.5zM425.0 254.9h1.5v1h-1.5zM68.9 256.1h1.5v1h-1.5zM238.3 254.9h3.5v1h-1.5zM396.5 254.9h1.5v1h-1.5zM406.2 255.5h1.5v1h-1.5zM204.6 255.5h2.5v1h-1.5zM635.4 255.5h1.5v1h-1.5zM356.3 255.5h3.5v1h-1.5zM292.7 254.9h1.5v1h-1.5zM314.1 254.9h1.5v1h-1.5zM101.0 256.1h2.5v1h-1.5zM572.0 256.1h2.5v1h-1.5zM196.5 256.1h1.5v1h-1.5zM82.9 256.1h1.5v1h-1.5zM555.3 256.1h2.5v1h-1.5zM393.1 254.9h3.5v1h-1.5zM522.6 254.9h1.5v1h-1.5zM488.8 256.1h2.5v1h-1.5zM172.8 254.9h2.5v1h-1.5zM338.4 254.9h1.5v1h-1.5zM260.7 255.5h1.5v1h-1.5zM358.6 255.5h3.5v1h-1.5zM263.0 254.9h2.5v1h-1.5zM174.5 254.9h3.5v1h-1.5zM153.1 256.1h2.5v1h-1.5zM342.4 255.5h3.5v1h-1.5zM636.8 255.5h2.5v1h-1.5zM655.6 256.1h2.5v1h-1.5zM499.2 254.9h1.5v1h-1.5zM220.9 254.9h3.5v1h-1.5zM145.4 254.9h2.5v1h-1.5zM549.0 256.1h3.5v1h-1.5zM363.5 254.9h3.5v1h-1.5zM167.0 255.5h2.5v1h-1.5zM235.8 256.1h1.5v1h-1.5zM643.6 256.1h2.5v1h-1.5zM403.4 254.9h1.5v1h-1.5zM366.7 255.5h1.5v1h-1.5zM46.3 256.1h3.5v1h-1.5zM674.9 255.5h1.5v1h-1.5zM492.8 255.5h1.5v1h-1.5zM540.7 255.5h1.5v1h-1.5zM684.8 256.1h2.5v1h-1.5zM251.4 255.5h3.5v1h-1.5zM525.8 256.1h3.5v1h-1.5zM529.0 254.9h1.5v1h-1.5zM383.1 256.1h2.5v1h-1.5zM556.9 255.5h3.5v1h-1.5zM68.0 256.1h3.5v1h-1.5zM165.6 255.5h3.5v1h-1.5zM445.0 255.5h2.5v1h-1.5zM242.2 254.9h2.5v1h-1.5zM254.9 256.1h2.5v1h-1.5zM137.2 256.1h2.5v1h-1.5zM500.3 254.9h3.5v1h-1.5zM461.5 255.5h1.5v1h-1.5zM174.4 256.1h3.5v1h-1.5zM606.8 254.9h2.5v1h-1.5zM192.7 254.9h2.5v1h-1.5zM520.7 254.9h1.5v1h-1.5zM38.9 254.9h2.5v1h-1.5zM653.4 256.1h3.5v1h-1.5zM158.7 255.5h2.5v1h-1.5zM71.0 254.9h3.5v1h-1.5zM608.4 255.5h3.5v1h-1.5zM568.2 254.9h2.5v1h-1.5zM334.2 254.9h1.5v1h-1.5z" fill="#22d4ff" fill-opacity="0.55"/><rect x="27" y="254.617" width="1.4" height="4.28333" fill="#30e040" /><rect x="27" y="250.533" width="1.4" height="4.28333" fill="#40e890" /><rect x="27" y="246.45" width="1.4" height="4.28333" fill="#18c8e8" /><rect x="45.4" y="255.025" width="1.4" height="3.875" fill="#40e060" /><rect x="45.4" y="251.35" width="1.4" height="3.875" fill="#20c0e0" /><rect x="45.4" y="247.675" width="1.4" height="3.875" fill="#2080ff" /><rect x="62.8" y="255.331" width="1.8" height="3.56875" fill="#ff3030" /><rect x="62.8" y="251.962" width="1.8" height="3.56875" fill="#ffe040" /><rect x="62.8" y="248.594" width="1.8" height="3.56875" fill="#60f050" /><rect x="62.8" y="245.225" width="1.8" height="3.56875" fill="#30e0a0" /><rect x="77.6" y="255.025" width="1.2" height="3.875" fill="#ff3030" /><rect x="77.6" y="251.35" width="1.2" height="3.875" fill="#ff8040" /><rect x="77.6" y="247.675" width="1.2" height="3.875" fill="#30e0e0" /><rect x="77.6" y="244" width="1.2" height="3.875" fill="#2090ff" /><rect x="77.6" y="240.325" width="1.2" height="3.875" fill="#1450e0" /><rect x="122.2" y="254.719" width="1.6" height="4.18125" fill="#30e060" /><rect x="122.2" y="250.737" width="1.6" height="4.18125" fill="#20c0e8" /><rect x="122.2" y="246.756" width="1.6" height="4.18125" fill="#2080ff" /><rect x="122.2" y="242.775" width="1.6" height="4.18125" fill="#1850e0" /><rect x="129.6" y="255.025" width="1.2" height="3.875" fill="#30d0e0" /><rect x="129.6" y="251.35" width="1.2" height="3.875" fill="#2080ff" /><rect x="129.6" y="247.675" width="1.2" height="3.875" fill="#1850e0" /><rect x="111.4" y="253.8" width="1" height="5.1" fill="#40e0c0" /><rect x="111.4" y="248.9" width="1" height="5.1" fill="#2090ff" /><rect x="61.2" y="234.2" width="2" height="24.5" fill="#05050f" /><rect x="116.2" y="234.2" width="1.4" height="24.5" fill="#05050f" /><rect x="119.4" y="234.2" width="2.2" height="24.5" fill="#05050f" /><rect x="124.6" y="234.2" width="1" height="24.5" fill="#05050f" /><rect x="26" y="223.7" width="664" height="0.8" fill="#0a0a14" /><rect x="26" y="258.7" width="664" height="0.8" fill="#0a0a14" /><rect x="26" y="269.4" width="663.7" height="24.8" fill="#f5f6f8" /><g filter="url(#b3)"><defs><filter id="b3" x="0" y="0" width="1" height="1"><feGaussianBlur stdDeviation="0.15"/></filter></defs><path d="M26 269.4h1.3v2.07h-1.3zM26 288.03h1.3v2.07h-1.3zM27.3 273.54h1.3v2.07h-1.3zM27.3 275.61h1.3v2.07h-1.3zM27.3 285.96h1.3v2.07h-1.3zM28.6 273.54h1.3v2.07h-1.3zM28.6 275.61h1.3v2.07h-1.3zM31.2 290.1h1.3v2.07h-1.3zM33.8 277.68h1.3v2.07h-1.3zM33.8 279.75h1.3v2.07h-1.3zM33.8 285.96h1.3v2.07h-1.3zM35.1 271.47h1.3v2.07h-1.3zM36.4 279.75h1.3v2.07h-1.3zM39 279.75h1.3v2.07h-1.3zM44.2 279.75h1.3v2.07h-1.3zM44.2 290.1h1.3v2.07h-1.3zM45.5 290.1h1.3v2.07h-1.3zM46.8 288.03h1.3v2.07h-1.3zM49.4 271.47h1.3v2.07h-1.3zM50.7 281.82h1.3v2.07h-1.3zM50.7 292.17h1.3v2.07h-1.3zM52 277.68h1.3v2.07h-1.3zM53.3 288.03h1.3v2.07h-1.3zM55.9 269.4h1.3v2.07h-1.3zM55.9 292.17h1.3v2.07h-1.3zM57.2 277.68h1.3v2.07h-1.3zM58.5 275.61h1.3v2.07h-1.3zM58.5 283.89h1.3v2.07h-1.3zM59.8 279.75h1.3v2.07h-1.3zM61.1 277.68h1.3v2.07h-1.3zM61.1 283.89h1.3v2.07h-1.3zM61.1 290.1h1.3v2.07h-1.3zM62.4 269.4h1.3v2.07h-1.3zM63.7 292.17h1.3v2.07h-1.3zM65 281.82h1.3v2.07h-1.3zM67.6 285.96h1.3v2.07h-1.3zM72.8 281.82h1.3v2.07h-1.3zM72.8 285.96h1.3v2.07h-1.3zM76.7 271.47h1.3v2.07h-1.3zM76.7 288.03h1.3v2.07h-1.3zM81.9 281.82h1.3v2.07h-1.3zM84.5 277.68h1.3v2.07h-1.3zM84.5 285.96h1.3v2.07h-1.3zM85.8 281.82h1.3v2.07h-1.3zM87.1 271.47h1.3v2.07h-1.3zM87.1 290.1h1.3v2.07h-1.3zM88.4 290.1h1.3v2.07h-1.3zM91 285.96h1.3v2.07h-1.3zM92.3 271.47h1.3v2.07h-1.3zM93.6 279.75h1.3v2.07h-1.3zM96.2 281.82h1.3v2.07h-1.3zM97.5 290.1h1.3v2.07h-1.3zM98.8 269.4h1.3v2.07h-1.3zM98.8 281.82h1.3v2.07h-1.3zM101.4 269.4h1.3v2.07h-1.3zM102.7 281.82h1.3v2.07h-1.3zM104 292.17h1.3v2.07h-1.3zM106.6 283.89h1.3v2.07h-1.3zM107.9 288.03h1.3v2.07h-1.3zM109.2 279.75h1.3v2.07h-1.3zM109.2 292.17h1.3v2.07h-1.3zM110.5 279.75h1.3v2.07h-1.3zM110.5 283.89h1.3v2.07h-1.3zM110.5 288.03h1.3v2.07h-1.3zM111.8 288.03h1.3v2.07h-1.3zM115.7 275.61h1.3v2.07h-1.3zM117 283.89h1.3v2.07h-1.3zM118.3 275.61h1.3v2.07h-1.3zM118.3 279.75h1.3v2.07h-1.3zM118.3 292.17h1.3v2.07h-1.3zM119.6 275.61h1.3v2.07h-1.3zM120.9 279.75h1.3v2.07h-1.3zM123.5 269.4h1.3v2.07h-1.3zM123.5 277.68h1.3v2.07h-1.3zM123.5 279.75h1.3v2.07h-1.3zM123.5 283.89h1.3v2.07h-1.3zM124.8 269.4h1.3v2.07h-1.3zM124.8 271.47h1.3v2.07h-1.3zM124.8 292.17h1.3v2.07h-1.3zM128.7 279.75h1.3v2.07h-1.3zM128.7 283.89h1.3v2.07h-1.3zM130 269.4h1.3v2.07h-1.3zM131.3 285.96h1.3v2.07h-1.3zM132.6 283.89h1.3v2.07h-1.3zM135.2 285.96h1.3v2.07h-1.3zM135.2 292.17h1.3v2.07h-1.3zM136.5 279.75h1.3v2.07h-1.3zM140.4 271.47h1.3v2.07h-1.3zM140.4 292.17h1.3v2.07h-1.3zM143 290.1h1.3v2.07h-1.3zM145.6 279.75h1.3v2.07h-1.3zM146.9 285.96h1.3v2.07h-1.3zM149.5 269.4h1.3v2.07h-1.3zM150.8 271.47h1.3v2.07h-1.3zM150.8 283.89h1.3v2.07h-1.3zM152.1 279.75h1.3v2.07h-1.3zM153.4 273.54h1.3v2.07h-1.3zM153.4 275.61h1.3v2.07h-1.3zM154.7 271.47h1.3v2.07h-1.3zM157.3 275.61h1.3v2.07h-1.3zM157.3 281.82h1.3v2.07h-1.3zM159.9 273.54h1.3v2.07h-1.3zM161.2 271.47h1.3v2.07h-1.3zM161.2 283.89h1.3v2.07h-1.3zM161.2 290.1h1.3v2.07h-1.3zM165.1 283.89h1.3v2.07h-1.3zM166.4 279.75h1.3v2.07h-1.3zM167.7 281.82h1.3v2.07h-1.3zM169 281.82h1.3v2.07h-1.3zM170.3 269.4h1.3v2.07h-1.3zM170.3 277.68h1.3v2.07h-1.3zM170.3 279.75h1.3v2.07h-1.3zM170.3 281.82h1.3v2.07h-1.3zM172.9 271.47h1.3v2.07h-1.3zM175.5 277.68h1.3v2.07h-1.3zM176.8 271.47h1.3v2.07h-1.3zM178.1 273.54h1.3v2.07h-1.3zM179.4 275.61h1.3v2.07h-1.3zM183.3 281.82h1.3v2.07h-1.3zM184.6 277.68h1.3v2.07h-1.3zM184.6 292.17h1.3v2.07h-1.3zM185.9 273.54h1.3v2.07h-1.3zM185.9 285.96h1.3v2.07h-1.3zM187.2 283.89h1.3v2.07h-1.3zM187.2 292.17h1.3v2.07h-1.3zM188.5 273.54h1.3v2.07h-1.3zM188.5 279.75h1.3v2.07h-1.3zM188.5 288.03h1.3v2.07h-1.3zM188.5 290.1h1.3v2.07h-1.3zM189.8 271.47h1.3v2.07h-1.3zM189.8 283.89h1.3v2.07h-1.3zM189.8 288.03h1.3v2.07h-1.3zM189.8 290.1h1.3v2.07h-1.3zM191.1 285.96h1.3v2.07h-1.3zM193.7 281.82h1.3v2.07h-1.3zM196.3 269.4h1.3v2.07h-1.3zM197.6 279.75h1.3v2.07h-1.3zM198.9 283.89h1.3v2.07h-1.3zM200.2 281.82h1.3v2.07h-1.3zM200.2 283.89h1.3v2.07h-1.3zM202.8 281.82h1.3v2.07h-1.3zM202.8 288.03h1.3v2.07h-1.3zM206.7 269.4h1.3v2.07h-1.3zM208 269.4h1.3v2.07h-1.3zM208 277.68h1.3v2.07h-1.3zM208 288.03h1.3v2.07h-1.3zM211.9 269.4h1.3v2.07h-1.3zM211.9 292.17h1.3v2.07h-1.3zM213.2 283.89h1.3v2.07h-1.3zM214.5 275.61h1.3v2.07h-1.3zM221 271.47h1.3v2.07h-1.3zM221 277.68h1.3v2.07h-1.3zM221 292.17h1.3v2.07h-1.3zM224.9 271.47h1.3v2.07h-1.3zM224.9 273.54h1.3v2.07h-1.3zM224.9 277.68h1.3v2.07h-1.3zM224.9 285.96h1.3v2.07h-1.3zM226.2 271.47h1.3v2.07h-1.3zM226.2 277.68h1.3v2.07h-1.3zM227.5 273.54h1.3v2.07h-1.3zM228.8 281.82h1.3v2.07h-1.3zM230.1 277.68h1.3v2.07h-1.3zM231.4 273.54h1.3v2.07h-1.3zM231.4 277.68h1.3v2.07h-1.3zM232.7 281.82h1.3v2.07h-1.3zM232.7 285.96h1.3v2.07h-1.3zM234 292.17h1.3v2.07h-1.3zM235.3 281.82h1.3v2.07h-1.3zM236.6 285.96h1.3v2.07h-1.3zM236.6 290.1h1.3v2.07h-1.3zM239.2 269.4h1.3v2.07h-1.3zM239.2 275.61h1.3v2.07h-1.3zM243.1 273.54h1.3v2.07h-1.3zM243.1 292.17h1.3v2.07h-1.3zM245.7 275.61h1.3v2.07h-1.3zM245.7 279.75h1.3v2.07h-1.3zM247 271.47h1.3v2.07h-1.3zM247 273.54h1.3v2.07h-1.3zM247 279.75h1.3v2.07h-1.3zM247 292.17h1.3v2.07h-1.3zM248.3 269.4h1.3v2.07h-1.3zM248.3 271.47h1.3v2.07h-1.3zM249.6 269.4h1.3v2.07h-1.3zM249.6 281.82h1.3v2.07h-1.3zM249.6 288.03h1.3v2.07h-1.3zM250.9 290.1h1.3v2.07h-1.3zM256.1 271.47h1.3v2.07h-1.3zM256.1 288.03h1.3v2.07h-1.3zM256.1 292.17h1.3v2.07h-1.3zM258.7 273.54h1.3v2.07h-1.3zM258.7 288.03h1.3v2.07h-1.3zM260 277.68h1.3v2.07h-1.3zM263.9 288.03h1.3v2.07h-1.3zM266.5 288.03h1.3v2.07h-1.3zM269.1 271.47h1.3v2.07h-1.3zM273 271.47h1.3v2.07h-1.3zM273 277.68h1.3v2.07h-1.3zM273 285.96h1.3v2.07h-1.3zM274.3 271.47h1.3v2.07h-1.3zM274.3 275.61h1.3v2.07h-1.3zM274.3 281.82h1.3v2.07h-1.3zM276.9 285.96h1.3v2.07h-1.3zM279.5 269.4h1.3v2.07h-1.3zM279.5 271.47h1.3v2.07h-1.3zM279.5 292.17h1.3v2.07h-1.3zM280.8 290.1h1.3v2.07h-1.3zM283.4 277.68h1.3v2.07h-1.3zM284.7 281.82h1.3v2.07h-1.3zM284.7 285.96h1.3v2.07h-1.3zM287.3 285.96h1.3v2.07h-1.3zM288.6 292.17h1.3v2.07h-1.3zM295.1 273.54h1.3v2.07h-1.3zM295.1 288.03h1.3v2.07h-1.3zM295.1 292.17h1.3v2.07h-1.3zM296.4 281.82h1.3v2.07h-1.3zM297.7 273.54h1.3v2.07h-1.3zM300.3 283.89h1.3v2.07h-1.3zM300.3 288.03h1.3v2.07h-1.3zM301.6 269.4h1.3v2.07h-1.3zM301.6 273.54h1.3v2.07h-1.3zM301.6 288.03h1.3v2.07h-1.3zM301.6 292.17h1.3v2.07h-1.3zM309.4 273.54h1.3v2.07h-1.3zM312 275.61h1.3v2.07h-1.3zM312 292.17h1.3v2.07h-1.3zM315.9 269.4h1.3v2.07h-1.3zM315.9 271.47h1.3v2.07h-1.3zM317.2 292.17h1.3v2.07h-1.3zM319.8 279.75h1.3v2.07h-1.3zM319.8 288.03h1.3v2.07h-1.3zM321.1 285.96h1.3v2.07h-1.3zM322.4 277.68h1.3v2.07h-1.3zM323.7 279.75h1.3v2.07h-1.3zM325 273.54h1.3v2.07h-1.3zM325 283.89h1.3v2.07h-1.3zM327.6 279.75h1.3v2.07h-1.3zM327.6 288.03h1.3v2.07h-1.3zM330.2 271.47h1.3v2.07h-1.3zM330.2 281.82h1.3v2.07h-1.3zM334.1 281.82h1.3v2.07h-1.3zM334.1 292.17h1.3v2.07h-1.3zM336.7 273.54h1.3v2.07h-1.3zM336.7 283.89h1.3v2.07h-1.3zM336.7 285.96h1.3v2.07h-1.3zM338 269.4h1.3v2.07h-1.3zM339.3 275.61h1.3v2.07h-1.3zM339.3 283.89h1.3v2.07h-1.3zM339.3 292.17h1.3v2.07h-1.3zM343.2 269.4h1.3v2.07h-1.3zM344.5 273.54h1.3v2.07h-1.3zM344.5 279.75h1.3v2.07h-1.3zM345.8 279.75h1.3v2.07h-1.3zM345.8 292.17h1.3v2.07h-1.3zM347.1 277.68h1.3v2.07h-1.3zM347.1 283.89h1.3v2.07h-1.3zM348.4 269.4h1.3v2.07h-1.3zM348.4 285.96h1.3v2.07h-1.3zM349.7 279.75h1.3v2.07h-1.3zM351 285.96h1.3v2.07h-1.3zM352.3 269.4h1.3v2.07h-1.3zM352.3 275.61h1.3v2.07h-1.3zM352.3 281.82h1.3v2.07h-1.3zM352.3 288.03h1.3v2.07h-1.3zM353.6 285.96h1.3v2.07h-1.3zM354.9 279.75h1.3v2.07h-1.3zM354.9 283.89h1.3v2.07h-1.3zM356.2 290.1h1.3v2.07h-1.3zM356.2 292.17h1.3v2.07h-1.3zM357.5 292.17h1.3v2.07h-1.3zM358.8 290.1h1.3v2.07h-1.3zM360.1 288.03h1.3v2.07h-1.3zM360.1 292.17h1.3v2.07h-1.3zM361.4 288.03h1.3v2.07h-1.3zM362.7 275.61h1.3v2.07h-1.3zM362.7 290.1h1.3v2.07h-1.3zM364 285.96h1.3v2.07h-1.3zM364 288.03h1.3v2.07h-1.3zM365.3 292.17h1.3v2.07h-1.3zM366.6 281.82h1.3v2.07h-1.3zM367.9 273.54h1.3v2.07h-1.3zM371.8 271.47h1.3v2.07h-1.3zM371.8 281.82h1.3v2.07h-1.3zM371.8 285.96h1.3v2.07h-1.3zM375.7 273.54h1.3v2.07h-1.3zM377 279.75h1.3v2.07h-1.3zM379.6 277.68h1.3v2.07h-1.3zM380.9 285.96h1.3v2.07h-1.3zM380.9 288.03h1.3v2.07h-1.3zM382.2 283.89h1.3v2.07h-1.3zM384.8 279.75h1.3v2.07h-1.3zM384.8 290.1h1.3v2.07h-1.3zM387.4 277.68h1.3v2.07h-1.3zM390 279.75h1.3v2.07h-1.3zM391.3 288.03h1.3v2.07h-1.3zM393.9 281.82h1.3v2.07h-1.3zM397.8 273.54h1.3v2.07h-1.3zM397.8 292.17h1.3v2.07h-1.3zM399.1 292.17h1.3v2.07h-1.3zM401.7 273.54h1.3v2.07h-1.3zM401.7 279.75h1.3v2.07h-1.3zM403 290.1h1.3v2.07h-1.3zM405.6 269.4h1.3v2.07h-1.3zM406.9 279.75h1.3v2.07h-1.3zM406.9 281.82h1.3v2.07h-1.3zM406.9 290.1h1.3v2.07h-1.3zM408.2 269.4h1.3v2.07h-1.3zM408.2 271.47h1.3v2.07h-1.3zM408.2 277.68h1.3v2.07h-1.3zM410.8 288.03h1.3v2.07h-1.3zM412.1 269.4h1.3v2.07h-1.3zM412.1 288.03h1.3v2.07h-1.3zM414.7 288.03h1.3v2.07h-1.3zM414.7 290.1h1.3v2.07h-1.3zM416 285.96h1.3v2.07h-1.3zM417.3 281.82h1.3v2.07h-1.3zM418.6 290.1h1.3v2.07h-1.3zM419.9 290.1h1.3v2.07h-1.3zM421.2 273.54h1.3v2.07h-1.3zM421.2 288.03h1.3v2.07h-1.3zM422.5 290.1h1.3v2.07h-1.3zM423.8 275.61h1.3v2.07h-1.3zM426.4 275.61h1.3v2.07h-1.3zM426.4 283.89h1.3v2.07h-1.3zM426.4 288.03h1.3v2.07h-1.3zM427.7 292.17h1.3v2.07h-1.3zM429 273.54h1.3v2.07h-1.3zM430.3 290.1h1.3v2.07h-1.3zM431.6 275.61h1.3v2.07h-1.3zM431.6 285.96h1.3v2.07h-1.3zM432.9 273.54h1.3v2.07h-1.3zM432.9 285.96h1.3v2.07h-1.3zM434.2 288.03h1.3v2.07h-1.3zM435.5 269.4h1.3v2.07h-1.3zM435.5 281.82h1.3v2.07h-1.3zM435.5 292.17h1.3v2.07h-1.3zM436.8 271.47h1.3v2.07h-1.3zM436.8 273.54h1.3v2.07h-1.3zM438.1 271.47h1.3v2.07h-1.3zM438.1 281.82h1.3v2.07h-1.3zM439.4 279.75h1.3v2.07h-1.3zM442 269.4h1.3v2.07h-1.3zM442 271.47h1.3v2.07h-1.3zM442 277.68h1.3v2.07h-1.3zM442 279.75h1.3v2.07h-1.3zM442 285.96h1.3v2.07h-1.3zM444.6 279.75h1.3v2.07h-1.3zM444.6 281.82h1.3v2.07h-1.3zM444.6 283.89h1.3v2.07h-1.3zM448.5 283.89h1.3v2.07h-1.3zM449.8 269.4h1.3v2.07h-1.3zM451.1 281.82h1.3v2.07h-1.3zM453.7 273.54h1.3v2.07h-1.3zM453.7 279.75h1.3v2.07h-1.3zM457.6 279.75h1.3v2.07h-1.3zM457.6 285.96h1.3v2.07h-1.3zM457.6 292.17h1.3v2.07h-1.3zM460.2 271.47h1.3v2.07h-1.3zM460.2 273.54h1.3v2.07h-1.3zM460.2 283.89h1.3v2.07h-1.3zM460.2 290.1h1.3v2.07h-1.3zM461.5 275.61h1.3v2.07h-1.3zM462.8 288.03h1.3v2.07h-1.3zM464.1 269.4h1.3v2.07h-1.3zM464.1 285.96h1.3v2.07h-1.3zM466.7 269.4h1.3v2.07h-1.3zM466.7 288.03h1.3v2.07h-1.3zM466.7 290.1h1.3v2.07h-1.3zM466.7 292.17h1.3v2.07h-1.3zM468 277.68h1.3v2.07h-1.3zM468 290.1h1.3v2.07h-1.3zM469.3 275.61h1.3v2.07h-1.3zM469.3 279.75h1.3v2.07h-1.3zM469.3 290.1h1.3v2.07h-1.3zM470.6 288.03h1.3v2.07h-1.3zM471.9 269.4h1.3v2.07h-1.3zM473.2 279.75h1.3v2.07h-1.3zM474.5 275.61h1.3v2.07h-1.3zM474.5 279.75h1.3v2.07h-1.3zM474.5 290.1h1.3v2.07h-1.3zM475.8 269.4h1.3v2.07h-1.3zM475.8 279.75h1.3v2.07h-1.3zM478.4 275.61h1.3v2.07h-1.3zM478.4 285.96h1.3v2.07h-1.3zM482.3 273.54h1.3v2.07h-1.3zM482.3 277.68h1.3v2.07h-1.3zM483.6 275.61h1.3v2.07h-1.3zM483.6 277.68h1.3v2.07h-1.3zM484.9 279.75h1.3v2.07h-1.3zM486.2 273.54h1.3v2.07h-1.3zM486.2 281.82h1.3v2.07h-1.3zM486.2 290.1h1.3v2.07h-1.3zM487.5 279.75h1.3v2.07h-1.3zM488.8 285.96h1.3v2.07h-1.3zM490.1 292.17h1.3v2.07h-1.3zM492.7 275.61h1.3v2.07h-1.3zM492.7 285.96h1.3v2.07h-1.3zM494 281.82h1.3v2.07h-1.3zM495.3 269.4h1.3v2.07h-1.3zM495.3 279.75h1.3v2.07h-1.3zM495.3 283.89h1.3v2.07h-1.3zM495.3 285.96h1.3v2.07h-1.3zM497.9 279.75h1.3v2.07h-1.3zM500.5 269.4h1.3v2.07h-1.3zM501.8 271.47h1.3v2.07h-1.3zM503.1 285.96h1.3v2.07h-1.3zM504.4 277.68h1.3v2.07h-1.3zM504.4 283.89h1.3v2.07h-1.3zM507 273.54h1.3v2.07h-1.3zM509.6 275.61h1.3v2.07h-1.3zM509.6 279.75h1.3v2.07h-1.3zM510.9 283.89h1.3v2.07h-1.3zM512.2 277.68h1.3v2.07h-1.3zM513.5 273.54h1.3v2.07h-1.3zM513.5 279.75h1.3v2.07h-1.3zM513.5 292.17h1.3v2.07h-1.3zM514.8 271.47h1.3v2.07h-1.3zM516.1 281.82h1.3v2.07h-1.3zM517.4 269.4h1.3v2.07h-1.3zM517.4 273.54h1.3v2.07h-1.3zM518.7 288.03h1.3v2.07h-1.3zM520 275.61h1.3v2.07h-1.3zM520 290.1h1.3v2.07h-1.3zM522.6 269.4h1.3v2.07h-1.3zM522.6 290.1h1.3v2.07h-1.3zM523.9 273.54h1.3v2.07h-1.3zM523.9 290.1h1.3v2.07h-1.3zM525.2 288.03h1.3v2.07h-1.3zM526.5 279.75h1.3v2.07h-1.3zM526.5 292.17h1.3v2.07h-1.3zM527.8 279.75h1.3v2.07h-1.3zM529.1 273.54h1.3v2.07h-1.3zM529.1 275.61h1.3v2.07h-1.3zM529.1 283.89h1.3v2.07h-1.3zM530.4 269.4h1.3v2.07h-1.3zM530.4 273.54h1.3v2.07h-1.3zM530.4 290.1h1.3v2.07h-1.3zM530.4 292.17h1.3v2.07h-1.3zM531.7 279.75h1.3v2.07h-1.3zM531.7 283.89h1.3v2.07h-1.3zM531.7 292.17h1.3v2.07h-1.3zM533 277.68h1.3v2.07h-1.3zM534.3 288.03h1.3v2.07h-1.3zM535.6 273.54h1.3v2.07h-1.3zM535.6 275.61h1.3v2.07h-1.3zM535.6 279.75h1.3v2.07h-1.3zM535.6 292.17h1.3v2.07h-1.3zM536.9 269.4h1.3v2.07h-1.3zM536.9 283.89h1.3v2.07h-1.3zM536.9 288.03h1.3v2.07h-1.3zM538.2 281.82h1.3v2.07h-1.3zM542.1 290.1h1.3v2.07h-1.3zM543.4 269.4h1.3v2.07h-1.3zM543.4 271.47h1.3v2.07h-1.3zM543.4 279.75h1.3v2.07h-1.3zM544.7 290.1h1.3v2.07h-1.3zM547.3 269.4h1.3v2.07h-1.3zM549.9 273.54h1.3v2.07h-1.3zM551.2 269.4h1.3v2.07h-1.3zM552.5 277.68h1.3v2.07h-1.3zM553.8 269.4h1.3v2.07h-1.3zM553.8 271.47h1.3v2.07h-1.3zM553.8 277.68h1.3v2.07h-1.3zM555.1 273.54h1.3v2.07h-1.3zM555.1 275.61h1.3v2.07h-1.3zM559 277.68h1.3v2.07h-1.3zM560.3 271.47h1.3v2.07h-1.3zM560.3 277.68h1.3v2.07h-1.3zM561.6 285.96h1.3v2.07h-1.3zM562.9 269.4h1.3v2.07h-1.3zM564.2 275.61h1.3v2.07h-1.3zM564.2 281.82h1.3v2.07h-1.3zM566.8 275.61h1.3v2.07h-1.3zM568.1 288.03h1.3v2.07h-1.3zM569.4 273.54h1.3v2.07h-1.3zM569.4 288.03h1.3v2.07h-1.3zM569.4 292.17h1.3v2.07h-1.3zM570.7 279.75h1.3v2.07h-1.3zM572 285.96h1.3v2.07h-1.3zM573.3 283.89h1.3v2.07h-1.3zM574.6 271.47h1.3v2.07h-1.3zM575.9 275.61h1.3v2.07h-1.3zM577.2 269.4h1.3v2.07h-1.3zM577.2 271.47h1.3v2.07h-1.3zM577.2 288.03h1.3v2.07h-1.3zM577.2 290.1h1.3v2.07h-1.3zM581.1 273.54h1.3v2.07h-1.3zM582.4 285.96h1.3v2.07h-1.3zM582.4 288.03h1.3v2.07h-1.3zM585 288.03h1.3v2.07h-1.3zM587.6 273.54h1.3v2.07h-1.3zM588.9 273.54h1.3v2.07h-1.3zM588.9 285.96h1.3v2.07h-1.3zM590.2 277.68h1.3v2.07h-1.3zM590.2 279.75h1.3v2.07h-1.3zM591.5 290.1h1.3v2.07h-1.3zM592.8 269.4h1.3v2.07h-1.3zM592.8 277.68h1.3v2.07h-1.3zM594.1 269.4h1.3v2.07h-1.3zM594.1 281.82h1.3v2.07h-1.3zM595.4 275.61h1.3v2.07h-1.3zM599.3 271.47h1.3v2.07h-1.3zM599.3 279.75h1.3v2.07h-1.3zM599.3 283.89h1.3v2.07h-1.3zM600.6 269.4h1.3v2.07h-1.3zM600.6 275.61h1.3v2.07h-1.3zM601.9 281.82h1.3v2.07h-1.3zM603.2 279.75h1.3v2.07h-1.3zM603.2 283.89h1.3v2.07h-1.3zM603.2 285.96h1.3v2.07h-1.3zM604.5 275.61h1.3v2.07h-1.3zM604.5 277.68h1.3v2.07h-1.3zM604.5 292.17h1.3v2.07h-1.3zM605.8 283.89h1.3v2.07h-1.3zM605.8 290.1h1.3v2.07h-1.3zM605.8 292.17h1.3v2.07h-1.3zM607.1 279.75h1.3v2.07h-1.3zM609.7 273.54h1.3v2.07h-1.3zM609.7 277.68h1.3v2.07h-1.3zM613.6 271.47h1.3v2.07h-1.3zM613.6 273.54h1.3v2.07h-1.3zM614.9 283.89h1.3v2.07h-1.3zM616.2 269.4h1.3v2.07h-1.3zM616.2 273.54h1.3v2.07h-1.3zM618.8 273.54h1.3v2.07h-1.3zM618.8 275.61h1.3v2.07h-1.3zM618.8 277.68h1.3v2.07h-1.3zM620.1 273.54h1.3v2.07h-1.3zM621.4 269.4h1.3v2.07h-1.3zM622.7 285.96h1.3v2.07h-1.3zM622.7 288.03h1.3v2.07h-1.3zM624 281.82h1.3v2.07h-1.3zM624 292.17h1.3v2.07h-1.3zM625.3 273.54h1.3v2.07h-1.3zM625.3 292.17h1.3v2.07h-1.3zM626.6 285.96h1.3v2.07h-1.3zM626.6 290.1h1.3v2.07h-1.3zM627.9 271.47h1.3v2.07h-1.3zM627.9 277.68h1.3v2.07h-1.3zM627.9 292.17h1.3v2.07h-1.3zM630.5 269.4h1.3v2.07h-1.3zM630.5 292.17h1.3v2.07h-1.3zM631.8 273.54h1.3v2.07h-1.3zM631.8 277.68h1.3v2.07h-1.3zM631.8 279.75h1.3v2.07h-1.3zM633.1 283.89h1.3v2.07h-1.3zM634.4 281.82h1.3v2.07h-1.3zM637 283.89h1.3v2.07h-1.3zM638.3 273.54h1.3v2.07h-1.3zM638.3 275.61h1.3v2.07h-1.3zM640.9 290.1h1.3v2.07h-1.3zM642.2 269.4h1.3v2.07h-1.3zM642.2 273.54h1.3v2.07h-1.3zM642.2 275.61h1.3v2.07h-1.3zM642.2 285.96h1.3v2.07h-1.3zM642.2 288.03h1.3v2.07h-1.3zM643.5 275.61h1.3v2.07h-1.3zM643.5 292.17h1.3v2.07h-1.3zM644.8 273.54h1.3v2.07h-1.3zM644.8 283.89h1.3v2.07h-1.3zM646.1 269.4h1.3v2.07h-1.3zM646.1 277.68h1.3v2.07h-1.3zM647.4 273.54h1.3v2.07h-1.3zM647.4 277.68h1.3v2.07h-1.3zM647.4 283.89h1.3v2.07h-1.3zM648.7 273.54h1.3v2.07h-1.3zM650 271.47h1.3v2.07h-1.3zM651.3 283.89h1.3v2.07h-1.3zM651.3 290.1h1.3v2.07h-1.3zM653.9 292.17h1.3v2.07h-1.3zM655.2 279.75h1.3v2.07h-1.3zM655.2 285.96h1.3v2.07h-1.3zM657.8 281.82h1.3v2.07h-1.3zM657.8 285.96h1.3v2.07h-1.3zM659.1 275.61h1.3v2.07h-1.3zM659.1 281.82h1.3v2.07h-1.3zM660.4 283.89h1.3v2.07h-1.3zM661.7 275.61h1.3v2.07h-1.3zM663 283.89h1.3v2.07h-1.3zM664.3 273.54h1.3v2.07h-1.3zM664.3 283.89h1.3v2.07h-1.3zM665.6 269.4h1.3v2.07h-1.3zM665.6 271.47h1.3v2.07h-1.3zM665.6 288.03h1.3v2.07h-1.3zM666.9 273.54h1.3v2.07h-1.3zM668.2 275.61h1.3v2.07h-1.3zM668.2 285.96h1.3v2.07h-1.3zM668.2 290.1h1.3v2.07h-1.3zM669.5 281.82h1.3v2.07h-1.3zM670.8 275.61h1.3v2.07h-1.3zM674.7 283.89h1.3v2.07h-1.3zM676 292.17h1.3v2.07h-1.3zM677.3 290.1h1.3v2.07h-1.3zM678.6 288.03h1.3v2.07h-1.3zM679.9 279.75h1.3v2.07h-1.3zM681.2 273.54h1.3v2.07h-1.3zM681.2 279.75h1.3v2.07h-1.3zM681.2 292.17h1.3v2.07h-1.3zM683.8 273.54h1.3v2.07h-1.3zM683.8 275.61h1.3v2.07h-1.3zM683.8 279.75h1.3v2.07h-1.3zM685.1 275.61h1.3v2.07h-1.3zM685.1 279.75h1.3v2.07h-1.3zM685.1 283.89h1.3v2.07h-1.3zM686.4 271.47h1.3v2.07h-1.3zM686.4 273.54h1.3v2.07h-1.3zM686.4 275.61h1.3v2.07h-1.3zM687.7 273.54h1.3v2.07h-1.3zM687.7 283.89h1.3v2.07h-1.3zM689 288.03h0.7v2.07h-0.7z" fill="#d6e7f4"/><path d="M26 279.75h1.3v2.07h-1.3zM28.6 269.4h1.3v2.07h-1.3zM29.9 290.1h1.3v2.07h-1.3zM29.9 292.17h1.3v2.07h-1.3zM31.2 269.4h1.3v2.07h-1.3zM31.2 275.61h1.3v2.07h-1.3zM33.8 273.54h1.3v2.07h-1.3zM33.8 275.61h1.3v2.07h-1.3zM35.1 288.03h1.3v2.07h-1.3zM36.4 283.89h1.3v2.07h-1.3zM39 277.68h1.3v2.07h-1.3zM44.2 281.82h1.3v2.07h-1.3zM45.5 277.68h1.3v2.07h-1.3zM46.8 285.96h1.3v2.07h-1.3zM48.1 285.96h1.3v2.07h-1.3zM48.1 292.17h1.3v2.07h-1.3zM52 269.4h1.3v2.07h-1.3zM52 290.1h1.3v2.07h-1.3zM53.3 275.61h1.3v2.07h-1.3zM53.3 290.1h1.3v2.07h-1.3zM57.2 269.4h1.3v2.07h-1.3zM57.2 273.54h1.3v2.07h-1.3zM57.2 275.61h1.3v2.07h-1.3zM57.2 285.96h1.3v2.07h-1.3zM58.5 290.1h1.3v2.07h-1.3zM59.8 275.61h1.3v2.07h-1.3zM59.8 277.68h1.3v2.07h-1.3zM61.1 275.61h1.3v2.07h-1.3zM67.6 275.61h1.3v2.07h-1.3zM74.1 275.61h1.3v2.07h-1.3zM74.1 283.89h1.3v2.07h-1.3zM76.7 269.4h1.3v2.07h-1.3zM76.7 283.89h1.3v2.07h-1.3zM79.3 281.82h1.3v2.07h-1.3zM84.5 281.82h1.3v2.07h-1.3zM87.1 288.03h1.3v2.07h-1.3zM89.7 273.54h1.3v2.07h-1.3zM89.7 283.89h1.3v2.07h-1.3zM91 279.75h1.3v2.07h-1.3zM93.6 277.68h1.3v2.07h-1.3zM94.9 279.75h1.3v2.07h-1.3zM98.8 292.17h1.3v2.07h-1.3zM100.1 283.89h1.3v2.07h-1.3zM101.4 283.89h1.3v2.07h-1.3zM104 269.4h1.3v2.07h-1.3zM107.9 279.75h1.3v2.07h-1.3zM107.9 281.82h1.3v2.07h-1.3zM109.2 283.89h1.3v2.07h-1.3zM109.2 288.03h1.3v2.07h-1.3zM111.8 292.17h1.3v2.07h-1.3zM114.4 288.03h1.3v2.07h-1.3zM114.4 290.1h1.3v2.07h-1.3zM118.3 285.96h1.3v2.07h-1.3zM123.5 292.17h1.3v2.07h-1.3zM124.8 275.61h1.3v2.07h-1.3zM124.8 288.03h1.3v2.07h-1.3zM126.1 279.75h1.3v2.07h-1.3zM127.4 273.54h1.3v2.07h-1.3zM127.4 277.68h1.3v2.07h-1.3zM133.9 283.89h1.3v2.07h-1.3zM135.2 288.03h1.3v2.07h-1.3zM136.5 277.68h1.3v2.07h-1.3zM149.5 271.47h1.3v2.07h-1.3zM152.1 273.54h1.3v2.07h-1.3zM157.3 271.47h1.3v2.07h-1.3zM162.5 277.68h1.3v2.07h-1.3zM162.5 285.96h1.3v2.07h-1.3zM162.5 288.03h1.3v2.07h-1.3zM163.8 290.1h1.3v2.07h-1.3zM165.1 275.61h1.3v2.07h-1.3zM165.1 279.75h1.3v2.07h-1.3zM166.4 288.03h1.3v2.07h-1.3zM179.4 277.68h1.3v2.07h-1.3zM183.3 275.61h1.3v2.07h-1.3zM185.9 269.4h1.3v2.07h-1.3zM189.8 292.17h1.3v2.07h-1.3zM192.4 288.03h1.3v2.07h-1.3zM193.7 269.4h1.3v2.07h-1.3zM196.3 281.82h1.3v2.07h-1.3zM200.2 277.68h1.3v2.07h-1.3zM205.4 271.47h1.3v2.07h-1.3zM205.4 290.1h1.3v2.07h-1.3zM210.6 290.1h1.3v2.07h-1.3zM214.5 273.54h1.3v2.07h-1.3zM214.5 277.68h1.3v2.07h-1.3zM221 279.75h1.3v2.07h-1.3zM230.1 275.61h1.3v2.07h-1.3zM230.1 279.75h1.3v2.07h-1.3zM232.7 288.03h1.3v2.07h-1.3zM247 275.61h1.3v2.07h-1.3zM248.3 290.1h1.3v2.07h-1.3zM256.1 279.75h1.3v2.07h-1.3zM258.7 285.96h1.3v2.07h-1.3zM263.9 271.47h1.3v2.07h-1.3zM263.9 281.82h1.3v2.07h-1.3zM266.5 269.4h1.3v2.07h-1.3zM269.1 285.96h1.3v2.07h-1.3zM270.4 279.75h1.3v2.07h-1.3zM270.4 283.89h1.3v2.07h-1.3zM271.7 281.82h1.3v2.07h-1.3zM273 275.61h1.3v2.07h-1.3zM278.2 269.4h1.3v2.07h-1.3zM280.8 275.61h1.3v2.07h-1.3zM280.8 281.82h1.3v2.07h-1.3zM287.3 275.61h1.3v2.07h-1.3zM291.2 285.96h1.3v2.07h-1.3zM295.1 277.68h1.3v2.07h-1.3zM295.1 281.82h1.3v2.07h-1.3zM299 269.4h1.3v2.07h-1.3zM315.9 283.89h1.3v2.07h-1.3zM321.1 292.17h1.3v2.07h-1.3zM326.3 285.96h1.3v2.07h-1.3zM327.6 285.96h1.3v2.07h-1.3zM328.9 273.54h1.3v2.07h-1.3zM341.9 285.96h1.3v2.07h-1.3zM345.8 269.4h1.3v2.07h-1.3zM349.7 281.82h1.3v2.07h-1.3zM351 271.47h1.3v2.07h-1.3zM352.3 292.17h1.3v2.07h-1.3zM358.8 288.03h1.3v2.07h-1.3zM360.1 269.4h1.3v2.07h-1.3zM364 290.1h1.3v2.07h-1.3zM365.3 279.75h1.3v2.07h-1.3zM366.6 269.4h1.3v2.07h-1.3zM370.5 281.82h1.3v2.07h-1.3zM377 288.03h1.3v2.07h-1.3zM378.3 275.61h1.3v2.07h-1.3zM386.1 271.47h1.3v2.07h-1.3zM388.7 271.47h1.3v2.07h-1.3zM388.7 285.96h1.3v2.07h-1.3zM395.2 269.4h1.3v2.07h-1.3zM400.4 271.47h1.3v2.07h-1.3zM404.3 281.82h1.3v2.07h-1.3zM410.8 283.89h1.3v2.07h-1.3zM417.3 290.1h1.3v2.07h-1.3zM421.2 275.61h1.3v2.07h-1.3zM429 271.47h1.3v2.07h-1.3zM429 290.1h1.3v2.07h-1.3zM434.2 273.54h1.3v2.07h-1.3zM438.1 279.75h1.3v2.07h-1.3zM438.1 290.1h1.3v2.07h-1.3zM439.4 271.47h1.3v2.07h-1.3zM440.7 271.47h1.3v2.07h-1.3zM440.7 281.82h1.3v2.07h-1.3zM442 283.89h1.3v2.07h-1.3zM442 288.03h1.3v2.07h-1.3zM447.2 271.47h1.3v2.07h-1.3zM448.5 277.68h1.3v2.07h-1.3zM448.5 279.75h1.3v2.07h-1.3zM452.4 281.82h1.3v2.07h-1.3zM456.3 269.4h1.3v2.07h-1.3zM462.8 283.89h1.3v2.07h-1.3zM465.4 285.96h1.3v2.07h-1.3zM465.4 288.03h1.3v2.07h-1.3zM465.4 290.1h1.3v2.07h-1.3zM471.9 271.47h1.3v2.07h-1.3zM471.9 288.03h1.3v2.07h-1.3zM473.2 273.54h1.3v2.07h-1.3zM477.1 285.96h1.3v2.07h-1.3zM477.1 292.17h1.3v2.07h-1.3zM478.4 281.82h1.3v2.07h-1.3zM483.6 281.82h1.3v2.07h-1.3zM488.8 281.82h1.3v2.07h-1.3zM490.1 271.47h1.3v2.07h-1.3zM492.7 279.75h1.3v2.07h-1.3zM497.9 277.68h1.3v2.07h-1.3zM499.2 269.4h1.3v2.07h-1.3zM499.2 285.96h1.3v2.07h-1.3zM499.2 290.1h1.3v2.07h-1.3zM500.5 292.17h1.3v2.07h-1.3zM501.8 283.89h1.3v2.07h-1.3zM503.1 271.47h1.3v2.07h-1.3zM514.8 288.03h1.3v2.07h-1.3zM523.9 279.75h1.3v2.07h-1.3zM523.9 292.17h1.3v2.07h-1.3zM526.5 283.89h1.3v2.07h-1.3zM527.8 292.17h1.3v2.07h-1.3zM529.1 292.17h1.3v2.07h-1.3zM530.4 275.61h1.3v2.07h-1.3zM530.4 281.82h1.3v2.07h-1.3zM542.1 275.61h1.3v2.07h-1.3zM555.1 277.68h1.3v2.07h-1.3zM557.7 273.54h1.3v2.07h-1.3zM559 281.82h1.3v2.07h-1.3zM561.6 269.4h1.3v2.07h-1.3zM569.4 271.47h1.3v2.07h-1.3zM570.7 288.03h1.3v2.07h-1.3zM574.6 269.4h1.3v2.07h-1.3zM574.6 277.68h1.3v2.07h-1.3zM582.4 290.1h1.3v2.07h-1.3zM585 285.96h1.3v2.07h-1.3zM586.3 285.96h1.3v2.07h-1.3zM586.3 292.17h1.3v2.07h-1.3zM592.8 279.75h1.3v2.07h-1.3zM595.4 290.1h1.3v2.07h-1.3zM596.7 288.03h1.3v2.07h-1.3zM598 277.68h1.3v2.07h-1.3zM605.8 279.75h1.3v2.07h-1.3zM609.7 271.47h1.3v2.07h-1.3zM609.7 290.1h1.3v2.07h-1.3zM611 277.68h1.3v2.07h-1.3zM611 290.1h1.3v2.07h-1.3zM616.2 275.61h1.3v2.07h-1.3zM616.2 283.89h1.3v2.07h-1.3zM621.4 288.03h1.3v2.07h-1.3zM626.6 275.61h1.3v2.07h-1.3zM627.9 283.89h1.3v2.07h-1.3zM630.5 290.1h1.3v2.07h-1.3zM631.8 269.4h1.3v2.07h-1.3zM635.7 292.17h1.3v2.07h-1.3zM640.9 275.61h1.3v2.07h-1.3zM647.4 275.61h1.3v2.07h-1.3zM648.7 275.61h1.3v2.07h-1.3zM653.9 269.4h1.3v2.07h-1.3zM653.9 283.89h1.3v2.07h-1.3zM653.9 285.96h1.3v2.07h-1.3zM656.5 271.47h1.3v2.07h-1.3zM657.8 269.4h1.3v2.07h-1.3zM666.9 283.89h1.3v2.07h-1.3zM677.3 288.03h1.3v2.07h-1.3zM678.6 290.1h1.3v2.07h-1.3zM679.9 281.82h1.3v2.07h-1.3zM689 292.17h0.7v2.07h-0.7z" fill="#badaf0"/><path d="M26 283.89h1.3v2.07h-1.3zM27.3 279.75h1.3v2.07h-1.3zM28.6 292.17h1.3v2.07h-1.3zM32.5 292.17h1.3v2.07h-1.3zM33.8 292.17h1.3v2.07h-1.3zM35.1 275.61h1.3v2.07h-1.3zM36.4 277.68h1.3v2.07h-1.3zM42.9 271.47h1.3v2.07h-1.3zM45.5 275.61h1.3v2.07h-1.3zM49.4 279.75h1.3v2.07h-1.3zM52 281.82h1.3v2.07h-1.3zM59.8 288.03h1.3v2.07h-1.3zM65 271.47h1.3v2.07h-1.3zM68.9 273.54h1.3v2.07h-1.3zM68.9 283.89h1.3v2.07h-1.3zM70.2 273.54h1.3v2.07h-1.3zM71.5 290.1h1.3v2.07h-1.3zM72.8 290.1h1.3v2.07h-1.3zM75.4 273.54h1.3v2.07h-1.3zM75.4 290.1h1.3v2.07h-1.3zM76.7 273.54h1.3v2.07h-1.3zM76.7 275.61h1.3v2.07h-1.3zM78 288.03h1.3v2.07h-1.3zM79.3 285.96h1.3v2.07h-1.3zM81.9 277.68h1.3v2.07h-1.3zM83.2 275.61h1.3v2.07h-1.3zM93.6 275.61h1.3v2.07h-1.3zM93.6 281.82h1.3v2.07h-1.3zM98.8 290.1h1.3v2.07h-1.3zM102.7 292.17h1.3v2.07h-1.3zM110.5 269.4h1.3v2.07h-1.3zM110.5 285.96h1.3v2.07h-1.3zM111.8 275.61h1.3v2.07h-1.3zM113.1 279.75h1.3v2.07h-1.3zM114.4 277.68h1.3v2.07h-1.3zM114.4 285.96h1.3v2.07h-1.3zM115.7 290.1h1.3v2.07h-1.3zM115.7 292.17h1.3v2.07h-1.3zM117 277.68h1.3v2.07h-1.3zM122.2 279.75h1.3v2.07h-1.3zM128.7 277.68h1.3v2.07h-1.3zM132.6 277.68h1.3v2.07h-1.3zM133.9 290.1h1.3v2.07h-1.3zM133.9 292.17h1.3v2.07h-1.3zM135.2 271.47h1.3v2.07h-1.3zM135.2 273.54h1.3v2.07h-1.3zM136.5 271.47h1.3v2.07h-1.3zM136.5 275.61h1.3v2.07h-1.3zM136.5 285.96h1.3v2.07h-1.3zM137.8 269.4h1.3v2.07h-1.3zM137.8 283.89h1.3v2.07h-1.3zM137.8 285.96h1.3v2.07h-1.3zM140.4 273.54h1.3v2.07h-1.3zM140.4 275.61h1.3v2.07h-1.3zM143 271.47h1.3v2.07h-1.3zM143 281.82h1.3v2.07h-1.3zM144.3 279.75h1.3v2.07h-1.3zM145.6 275.61h1.3v2.07h-1.3zM145.6 285.96h1.3v2.07h-1.3zM145.6 288.03h1.3v2.07h-1.3zM148.2 277.68h1.3v2.07h-1.3zM149.5 292.17h1.3v2.07h-1.3zM150.8 279.75h1.3v2.07h-1.3zM153.4 283.89h1.3v2.07h-1.3zM153.4 290.1h1.3v2.07h-1.3zM154.7 277.68h1.3v2.07h-1.3zM154.7 279.75h1.3v2.07h-1.3zM156 283.89h1.3v2.07h-1.3zM157.3 285.96h1.3v2.07h-1.3zM157.3 290.1h1.3v2.07h-1.3zM157.3 292.17h1.3v2.07h-1.3zM158.6 281.82h1.3v2.07h-1.3zM158.6 283.89h1.3v2.07h-1.3zM159.9 269.4h1.3v2.07h-1.3zM167.7 269.4h1.3v2.07h-1.3zM167.7 277.68h1.3v2.07h-1.3zM169 273.54h1.3v2.07h-1.3zM169 288.03h1.3v2.07h-1.3zM170.3 273.54h1.3v2.07h-1.3zM171.6 279.75h1.3v2.07h-1.3zM174.2 275.61h1.3v2.07h-1.3zM176.8 292.17h1.3v2.07h-1.3zM178.1 283.89h1.3v2.07h-1.3zM179.4 271.47h1.3v2.07h-1.3zM180.7 271.47h1.3v2.07h-1.3zM180.7 281.82h1.3v2.07h-1.3zM183.3 285.96h1.3v2.07h-1.3zM183.3 288.03h1.3v2.07h-1.3zM183.3 292.17h1.3v2.07h-1.3zM184.6 273.54h1.3v2.07h-1.3zM184.6 279.75h1.3v2.07h-1.3zM185.9 275.61h1.3v2.07h-1.3zM185.9 288.03h1.3v2.07h-1.3zM187.2 277.68h1.3v2.07h-1.3zM187.2 281.82h1.3v2.07h-1.3zM187.2 290.1h1.3v2.07h-1.3zM188.5 292.17h1.3v2.07h-1.3zM191.1 277.68h1.3v2.07h-1.3zM192.4 283.89h1.3v2.07h-1.3zM193.7 283.89h1.3v2.07h-1.3zM195 273.54h1.3v2.07h-1.3zM195 275.61h1.3v2.07h-1.3zM196.3 277.68h1.3v2.07h-1.3zM197.6 275.61h1.3v2.07h-1.3zM197.6 281.82h1.3v2.07h-1.3zM198.9 271.47h1.3v2.07h-1.3zM200.2 269.4h1.3v2.07h-1.3zM201.5 275.61h1.3v2.07h-1.3zM201.5 279.75h1.3v2.07h-1.3zM202.8 283.89h1.3v2.07h-1.3zM204.1 277.68h1.3v2.07h-1.3zM205.4 288.03h1.3v2.07h-1.3zM206.7 281.82h1.3v2.07h-1.3zM208 283.89h1.3v2.07h-1.3zM209.3 277.68h1.3v2.07h-1.3zM209.3 279.75h1.3v2.07h-1.3zM210.6 288.03h1.3v2.07h-1.3zM214.5 281.82h1.3v2.07h-1.3zM215.8 269.4h1.3v2.07h-1.3zM217.1 283.89h1.3v2.07h-1.3zM217.1 292.17h1.3v2.07h-1.3zM218.4 269.4h1.3v2.07h-1.3zM218.4 283.89h1.3v2.07h-1.3zM219.7 288.03h1.3v2.07h-1.3zM219.7 292.17h1.3v2.07h-1.3zM221 285.96h1.3v2.07h-1.3zM222.3 288.03h1.3v2.07h-1.3zM222.3 290.1h1.3v2.07h-1.3zM223.6 269.4h1.3v2.07h-1.3zM223.6 281.82h1.3v2.07h-1.3zM223.6 285.96h1.3v2.07h-1.3zM226.2 275.61h1.3v2.07h-1.3zM228.8 292.17h1.3v2.07h-1.3zM230.1 288.03h1.3v2.07h-1.3zM234 269.4h1.3v2.07h-1.3zM234 290.1h1.3v2.07h-1.3zM235.3 283.89h1.3v2.07h-1.3zM237.9 271.47h1.3v2.07h-1.3zM237.9 281.82h1.3v2.07h-1.3zM239.2 273.54h1.3v2.07h-1.3zM239.2 279.75h1.3v2.07h-1.3zM240.5 281.82h1.3v2.07h-1.3zM240.5 290.1h1.3v2.07h-1.3zM240.5 292.17h1.3v2.07h-1.3zM241.8 273.54h1.3v2.07h-1.3zM241.8 275.61h1.3v2.07h-1.3zM241.8 281.82h1.3v2.07h-1.3zM243.1 279.75h1.3v2.07h-1.3zM244.4 281.82h1.3v2.07h-1.3zM244.4 288.03h1.3v2.07h-1.3zM244.4 290.1h1.3v2.07h-1.3zM244.4 292.17h1.3v2.07h-1.3zM248.3 281.82h1.3v2.07h-1.3zM249.6 292.17h1.3v2.07h-1.3zM250.9 288.03h1.3v2.07h-1.3zM252.2 283.89h1.3v2.07h-1.3zM252.2 288.03h1.3v2.07h-1.3zM253.5 275.61h1.3v2.07h-1.3zM253.5 288.03h1.3v2.07h-1.3zM254.8 273.54h1.3v2.07h-1.3zM260 279.75h1.3v2.07h-1.3zM260 281.82h1.3v2.07h-1.3zM261.3 271.47h1.3v2.07h-1.3zM261.3 273.54h1.3v2.07h-1.3zM261.3 288.03h1.3v2.07h-1.3zM262.6 269.4h1.3v2.07h-1.3zM262.6 271.47h1.3v2.07h-1.3zM263.9 275.61h1.3v2.07h-1.3zM267.8 271.47h1.3v2.07h-1.3zM267.8 281.82h1.3v2.07h-1.3zM269.1 292.17h1.3v2.07h-1.3zM270.4 277.68h1.3v2.07h-1.3zM270.4 292.17h1.3v2.07h-1.3zM275.6 283.89h1.3v2.07h-1.3zM276.9 269.4h1.3v2.07h-1.3zM276.9 283.89h1.3v2.07h-1.3zM278.2 285.96h1.3v2.07h-1.3zM279.5 288.03h1.3v2.07h-1.3zM280.8 277.68h1.3v2.07h-1.3zM280.8 292.17h1.3v2.07h-1.3zM283.4 273.54h1.3v2.07h-1.3zM283.4 283.89h1.3v2.07h-1.3zM283.4 292.17h1.3v2.07h-1.3zM284.7 269.4h1.3v2.07h-1.3zM284.7 277.68h1.3v2.07h-1.3zM284.7 292.17h1.3v2.07h-1.3zM286 273.54h1.3v2.07h-1.3zM286 279.75h1.3v2.07h-1.3zM287.3 290.1h1.3v2.07h-1.3zM288.6 275.61h1.3v2.07h-1.3zM288.6 288.03h1.3v2.07h-1.3zM289.9 269.4h1.3v2.07h-1.3zM289.9 281.82h1.3v2.07h-1.3zM289.9 283.89h1.3v2.07h-1.3zM291.2 277.68h1.3v2.07h-1.3zM292.5 271.47h1.3v2.07h-1.3zM292.5 275.61h1.3v2.07h-1.3zM292.5 283.89h1.3v2.07h-1.3zM292.5 290.1h1.3v2.07h-1.3zM293.8 277.68h1.3v2.07h-1.3zM293.8 279.75h1.3v2.07h-1.3zM293.8 292.17h1.3v2.07h-1.3zM295.1 271.47h1.3v2.07h-1.3zM295.1 275.61h1.3v2.07h-1.3zM295.1 285.96h1.3v2.07h-1.3zM299 273.54h1.3v2.07h-1.3zM300.3 273.54h1.3v2.07h-1.3zM300.3 275.61h1.3v2.07h-1.3zM300.3 281.82h1.3v2.07h-1.3zM302.9 281.82h1.3v2.07h-1.3zM302.9 292.17h1.3v2.07h-1.3zM304.2 290.1h1.3v2.07h-1.3zM305.5 277.68h1.3v2.07h-1.3zM306.8 279.75h1.3v2.07h-1.3zM309.4 292.17h1.3v2.07h-1.3zM310.7 277.68h1.3v2.07h-1.3zM312 271.47h1.3v2.07h-1.3zM312 281.82h1.3v2.07h-1.3zM312 288.03h1.3v2.07h-1.3zM313.3 275.61h1.3v2.07h-1.3zM314.6 271.47h1.3v2.07h-1.3zM314.6 288.03h1.3v2.07h-1.3zM317.2 269.4h1.3v2.07h-1.3zM317.2 273.54h1.3v2.07h-1.3zM318.5 269.4h1.3v2.07h-1.3zM318.5 273.54h1.3v2.07h-1.3zM321.1 271.47h1.3v2.07h-1.3zM321.1 288.03h1.3v2.07h-1.3zM322.4 283.89h1.3v2.07h-1.3zM322.4 292.17h1.3v2.07h-1.3zM323.7 269.4h1.3v2.07h-1.3zM326.3 290.1h1.3v2.07h-1.3zM328.9 281.82h1.3v2.07h-1.3zM330.2 277.68h1.3v2.07h-1.3zM331.5 271.47h1.3v2.07h-1.3zM331.5 281.82h1.3v2.07h-1.3zM331.5 292.17h1.3v2.07h-1.3zM332.8 283.89h1.3v2.07h-1.3zM332.8 288.03h1.3v2.07h-1.3zM336.7 277.68h1.3v2.07h-1.3zM338 277.68h1.3v2.07h-1.3zM340.6 271.47h1.3v2.07h-1.3zM340.6 283.89h1.3v2.07h-1.3zM341.9 281.82h1.3v2.07h-1.3zM341.9 290.1h1.3v2.07h-1.3zM345.8 285.96h1.3v2.07h-1.3zM347.1 269.4h1.3v2.07h-1.3zM347.1 281.82h1.3v2.07h-1.3zM348.4 277.68h1.3v2.07h-1.3zM348.4 281.82h1.3v2.07h-1.3zM349.7 288.03h1.3v2.07h-1.3zM349.7 292.17h1.3v2.07h-1.3zM353.6 275.61h1.3v2.07h-1.3zM353.6 288.03h1.3v2.07h-1.3zM354.9 273.54h1.3v2.07h-1.3zM356.2 277.68h1.3v2.07h-1.3zM356.2 279.75h1.3v2.07h-1.3zM356.2 281.82h1.3v2.07h-1.3zM357.5 273.54h1.3v2.07h-1.3zM361.4 275.61h1.3v2.07h-1.3zM365.3 271.47h1.3v2.07h-1.3zM366.6 283.89h1.3v2.07h-1.3zM367.9 285.96h1.3v2.07h-1.3zM367.9 292.17h1.3v2.07h-1.3zM369.2 269.4h1.3v2.07h-1.3zM370.5 279.75h1.3v2.07h-1.3zM371.8 269.4h1.3v2.07h-1.3zM374.4 269.4h1.3v2.07h-1.3zM374.4 279.75h1.3v2.07h-1.3zM375.7 279.75h1.3v2.07h-1.3zM377 273.54h1.3v2.07h-1.3zM377 281.82h1.3v2.07h-1.3zM377 290.1h1.3v2.07h-1.3zM384.8 269.4h1.3v2.07h-1.3zM384.8 292.17h1.3v2.07h-1.3zM386.1 279.75h1.3v2.07h-1.3zM387.4 269.4h1.3v2.07h-1.3zM387.4 273.54h1.3v2.07h-1.3zM387.4 285.96h1.3v2.07h-1.3zM387.4 290.1h1.3v2.07h-1.3zM391.3 279.75h1.3v2.07h-1.3zM391.3 281.82h1.3v2.07h-1.3zM391.3 292.17h1.3v2.07h-1.3zM392.6 273.54h1.3v2.07h-1.3zM392.6 281.82h1.3v2.07h-1.3zM393.9 283.89h1.3v2.07h-1.3zM396.5 269.4h1.3v2.07h-1.3zM397.8 271.47h1.3v2.07h-1.3zM400.4 281.82h1.3v2.07h-1.3zM400.4 283.89h1.3v2.07h-1.3zM401.7 290.1h1.3v2.07h-1.3zM403 292.17h1.3v2.07h-1.3zM404.3 277.68h1.3v2.07h-1.3zM404.3 292.17h1.3v2.07h-1.3zM406.9 271.47h1.3v2.07h-1.3zM406.9 292.17h1.3v2.07h-1.3zM412.1 273.54h1.3v2.07h-1.3zM412.1 292.17h1.3v2.07h-1.3zM416 277.68h1.3v2.07h-1.3zM417.3 269.4h1.3v2.07h-1.3zM417.3 279.75h1.3v2.07h-1.3zM418.6 292.17h1.3v2.07h-1.3zM419.9 271.47h1.3v2.07h-1.3zM422.5 277.68h1.3v2.07h-1.3zM422.5 283.89h1.3v2.07h-1.3zM425.1 275.61h1.3v2.07h-1.3zM425.1 285.96h1.3v2.07h-1.3zM427.7 281.82h1.3v2.07h-1.3zM429 285.96h1.3v2.07h-1.3zM430.3 285.96h1.3v2.07h-1.3zM431.6 271.47h1.3v2.07h-1.3zM431.6 273.54h1.3v2.07h-1.3zM431.6 292.17h1.3v2.07h-1.3zM432.9 275.61h1.3v2.07h-1.3zM432.9 292.17h1.3v2.07h-1.3zM434.2 279.75h1.3v2.07h-1.3zM436.8 275.61h1.3v2.07h-1.3zM439.4 290.1h1.3v2.07h-1.3zM440.7 288.03h1.3v2.07h-1.3zM443.3 277.68h1.3v2.07h-1.3zM443.3 281.82h1.3v2.07h-1.3zM443.3 288.03h1.3v2.07h-1.3zM443.3 290.1h1.3v2.07h-1.3zM445.9 277.68h1.3v2.07h-1.3zM445.9 285.96h1.3v2.07h-1.3zM447.2 285.96h1.3v2.07h-1.3zM449.8 277.68h1.3v2.07h-1.3zM449.8 283.89h1.3v2.07h-1.3zM452.4 277.68h1.3v2.07h-1.3zM452.4 285.96h1.3v2.07h-1.3zM453.7 269.4h1.3v2.07h-1.3zM453.7 292.17h1.3v2.07h-1.3zM455 283.89h1.3v2.07h-1.3zM457.6 281.82h1.3v2.07h-1.3zM461.5 279.75h1.3v2.07h-1.3zM462.8 273.54h1.3v2.07h-1.3zM462.8 281.82h1.3v2.07h-1.3zM465.4 275.61h1.3v2.07h-1.3zM466.7 271.47h1.3v2.07h-1.3zM466.7 283.89h1.3v2.07h-1.3zM466.7 285.96h1.3v2.07h-1.3zM469.3 271.47h1.3v2.07h-1.3zM469.3 281.82h1.3v2.07h-1.3zM470.6 277.68h1.3v2.07h-1.3zM473.2 275.61h1.3v2.07h-1.3zM473.2 288.03h1.3v2.07h-1.3zM475.8 271.47h1.3v2.07h-1.3zM477.1 290.1h1.3v2.07h-1.3zM478.4 273.54h1.3v2.07h-1.3zM479.7 277.68h1.3v2.07h-1.3zM479.7 283.89h1.3v2.07h-1.3zM481 288.03h1.3v2.07h-1.3zM481 292.17h1.3v2.07h-1.3zM482.3 275.61h1.3v2.07h-1.3zM483.6 288.03h1.3v2.07h-1.3zM486.2 277.68h1.3v2.07h-1.3zM487.5 269.4h1.3v2.07h-1.3zM490.1 273.54h1.3v2.07h-1.3zM490.1 288.03h1.3v2.07h-1.3zM491.4 281.82h1.3v2.07h-1.3zM492.7 269.4h1.3v2.07h-1.3zM492.7 277.68h1.3v2.07h-1.3zM492.7 288.03h1.3v2.07h-1.3zM494 292.17h1.3v2.07h-1.3zM496.6 275.61h1.3v2.07h-1.3zM499.2 271.47h1.3v2.07h-1.3zM499.2 273.54h1.3v2.07h-1.3zM500.5 271.47h1.3v2.07h-1.3zM500.5 281.82h1.3v2.07h-1.3zM500.5 283.89h1.3v2.07h-1.3zM501.8 281.82h1.3v2.07h-1.3zM501.8 288.03h1.3v2.07h-1.3zM504.4 275.61h1.3v2.07h-1.3zM505.7 271.47h1.3v2.07h-1.3zM505.7 279.75h1.3v2.07h-1.3zM507 283.89h1.3v2.07h-1.3zM508.3 269.4h1.3v2.07h-1.3zM508.3 279.75h1.3v2.07h-1.3zM509.6 288.03h1.3v2.07h-1.3zM510.9 285.96h1.3v2.07h-1.3zM510.9 288.03h1.3v2.07h-1.3zM510.9 290.1h1.3v2.07h-1.3zM512.2 269.4h1.3v2.07h-1.3zM512.2 271.47h1.3v2.07h-1.3zM512.2 292.17h1.3v2.07h-1.3zM514.8 269.4h1.3v2.07h-1.3zM516.1 285.96h1.3v2.07h-1.3zM517.4 271.47h1.3v2.07h-1.3zM517.4 279.75h1.3v2.07h-1.3zM517.4 290.1h1.3v2.07h-1.3zM518.7 292.17h1.3v2.07h-1.3zM520 273.54h1.3v2.07h-1.3zM520 283.89h1.3v2.07h-1.3zM521.3 273.54h1.3v2.07h-1.3zM523.9 283.89h1.3v2.07h-1.3zM525.2 271.47h1.3v2.07h-1.3zM525.2 275.61h1.3v2.07h-1.3zM525.2 281.82h1.3v2.07h-1.3zM527.8 277.68h1.3v2.07h-1.3zM527.8 281.82h1.3v2.07h-1.3zM529.1 285.96h1.3v2.07h-1.3zM533 269.4h1.3v2.07h-1.3zM533 283.89h1.3v2.07h-1.3zM533 285.96h1.3v2.07h-1.3zM534.3 283.89h1.3v2.07h-1.3zM534.3 285.96h1.3v2.07h-1.3zM535.6 281.82h1.3v2.07h-1.3zM538.2 290.1h1.3v2.07h-1.3zM538.2 292.17h1.3v2.07h-1.3zM539.5 275.61h1.3v2.07h-1.3zM540.8 285.96h1.3v2.07h-1.3zM540.8 288.03h1.3v2.07h-1.3zM542.1 279.75h1.3v2.07h-1.3zM543.4 290.1h1.3v2.07h-1.3zM544.7 273.54h1.3v2.07h-1.3zM544.7 285.96h1.3v2.07h-1.3zM544.7 292.17h1.3v2.07h-1.3zM546 269.4h1.3v2.07h-1.3zM546 275.61h1.3v2.07h-1.3zM546 281.82h1.3v2.07h-1.3zM546 292.17h1.3v2.07h-1.3zM547.3 283.89h1.3v2.07h-1.3zM547.3 288.03h1.3v2.07h-1.3zM547.3 290.1h1.3v2.07h-1.3zM547.3 292.17h1.3v2.07h-1.3zM548.6 271.47h1.3v2.07h-1.3zM551.2 279.75h1.3v2.07h-1.3zM552.5 281.82h1.3v2.07h-1.3zM552.5 288.03h1.3v2.07h-1.3zM553.8 285.96h1.3v2.07h-1.3zM553.8 290.1h1.3v2.07h-1.3zM555.1 269.4h1.3v2.07h-1.3zM555.1 288.03h1.3v2.07h-1.3zM556.4 288.03h1.3v2.07h-1.3zM557.7 290.1h1.3v2.07h-1.3zM557.7 292.17h1.3v2.07h-1.3zM559 269.4h1.3v2.07h-1.3zM561.6 283.89h1.3v2.07h-1.3zM562.9 271.47h1.3v2.07h-1.3zM562.9 273.54h1.3v2.07h-1.3zM562.9 277.68h1.3v2.07h-1.3zM562.9 279.75h1.3v2.07h-1.3zM562.9 290.1h1.3v2.07h-1.3zM564.2 273.54h1.3v2.07h-1.3zM564.2 277.68h1.3v2.07h-1.3zM564.2 279.75h1.3v2.07h-1.3zM565.5 279.75h1.3v2.07h-1.3zM566.8 279.75h1.3v2.07h-1.3zM568.1 269.4h1.3v2.07h-1.3zM568.1 277.68h1.3v2.07h-1.3zM568.1 290.1h1.3v2.07h-1.3zM569.4 269.4h1.3v2.07h-1.3zM573.3 271.47h1.3v2.07h-1.3zM575.9 288.03h1.3v2.07h-1.3zM575.9 290.1h1.3v2.07h-1.3zM577.2 277.68h1.3v2.07h-1.3zM578.5 269.4h1.3v2.07h-1.3zM578.5 277.68h1.3v2.07h-1.3zM578.5 292.17h1.3v2.07h-1.3zM579.8 271.47h1.3v2.07h-1.3zM579.8 288.03h1.3v2.07h-1.3zM581.1 275.61h1.3v2.07h-1.3zM582.4 279.75h1.3v2.07h-1.3zM585 277.68h1.3v2.07h-1.3zM585 279.75h1.3v2.07h-1.3zM585 283.89h1.3v2.07h-1.3zM586.3 277.68h1.3v2.07h-1.3zM587.6 277.68h1.3v2.07h-1.3zM587.6 279.75h1.3v2.07h-1.3zM587.6 281.82h1.3v2.07h-1.3zM587.6 283.89h1.3v2.07h-1.3zM587.6 285.96h1.3v2.07h-1.3zM587.6 292.17h1.3v2.07h-1.3zM591.5 277.68h1.3v2.07h-1.3zM594.1 275.61h1.3v2.07h-1.3zM594.1 290.1h1.3v2.07h-1.3zM595.4 271.47h1.3v2.07h-1.3zM595.4 288.03h1.3v2.07h-1.3zM596.7 269.4h1.3v2.07h-1.3zM596.7 275.61h1.3v2.07h-1.3zM596.7 279.75h1.3v2.07h-1.3zM598 281.82h1.3v2.07h-1.3zM600.6 273.54h1.3v2.07h-1.3zM600.6 285.96h1.3v2.07h-1.3zM601.9 275.61h1.3v2.07h-1.3zM603.2 290.1h1.3v2.07h-1.3zM604.5 281.82h1.3v2.07h-1.3zM607.1 292.17h1.3v2.07h-1.3zM609.7 285.96h1.3v2.07h-1.3zM612.3 273.54h1.3v2.07h-1.3zM612.3 277.68h1.3v2.07h-1.3zM614.9 273.54h1.3v2.07h-1.3zM614.9 275.61h1.3v2.07h-1.3zM620.1 281.82h1.3v2.07h-1.3zM621.4 271.47h1.3v2.07h-1.3zM621.4 279.75h1.3v2.07h-1.3zM622.7 273.54h1.3v2.07h-1.3zM622.7 277.68h1.3v2.07h-1.3zM630.5 279.75h1.3v2.07h-1.3zM630.5 281.82h1.3v2.07h-1.3zM631.8 290.1h1.3v2.07h-1.3zM634.4 269.4h1.3v2.07h-1.3zM635.7 283.89h1.3v2.07h-1.3zM635.7 288.03h1.3v2.07h-1.3zM637 279.75h1.3v2.07h-1.3zM638.3 292.17h1.3v2.07h-1.3zM639.6 271.47h1.3v2.07h-1.3zM639.6 290.1h1.3v2.07h-1.3zM643.5 279.75h1.3v2.07h-1.3zM643.5 281.82h1.3v2.07h-1.3zM643.5 288.03h1.3v2.07h-1.3zM646.1 279.75h1.3v2.07h-1.3zM646.1 283.89h1.3v2.07h-1.3zM651.3 279.75h1.3v2.07h-1.3zM651.3 285.96h1.3v2.07h-1.3zM655.2 269.4h1.3v2.07h-1.3zM656.5 269.4h1.3v2.07h-1.3zM659.1 277.68h1.3v2.07h-1.3zM661.7 283.89h1.3v2.07h-1.3zM663 292.17h1.3v2.07h-1.3zM664.3 281.82h1.3v2.07h-1.3zM668.2 271.47h1.3v2.07h-1.3zM668.2 283.89h1.3v2.07h-1.3zM668.2 288.03h1.3v2.07h-1.3zM668.2 292.17h1.3v2.07h-1.3zM670.8 281.82h1.3v2.07h-1.3zM673.4 279.75h1.3v2.07h-1.3zM674.7 279.75h1.3v2.07h-1.3zM676 281.82h1.3v2.07h-1.3zM677.3 273.54h1.3v2.07h-1.3zM678.6 279.75h1.3v2.07h-1.3zM679.9 271.47h1.3v2.07h-1.3zM682.5 281.82h1.3v2.07h-1.3zM683.8 277.68h1.3v2.07h-1.3zM686.4 290.1h1.3v2.07h-1.3zM687.7 285.96h1.3v2.07h-1.3z" fill="#fce6da"/><path d="M26 285.96h1.3v2.07h-1.3zM26 292.17h1.3v2.07h-1.3zM49.4 292.17h1.3v2.07h-1.3zM78 281.82h1.3v2.07h-1.3zM85.8 275.61h1.3v2.07h-1.3zM94.9 277.68h1.3v2.07h-1.3zM100.1 271.47h1.3v2.07h-1.3zM104 285.96h1.3v2.07h-1.3zM118.3 271.47h1.3v2.07h-1.3zM130 290.1h1.3v2.07h-1.3zM171.6 290.1h1.3v2.07h-1.3zM187.2 273.54h1.3v2.07h-1.3zM282.1 275.61h1.3v2.07h-1.3zM347.1 273.54h1.3v2.07h-1.3zM382.2 285.96h1.3v2.07h-1.3zM452.4 275.61h1.3v2.07h-1.3zM486.2 285.96h1.3v2.07h-1.3zM514.8 273.54h1.3v2.07h-1.3zM566.8 288.03h1.3v2.07h-1.3zM617.5 279.75h1.3v2.07h-1.3zM633.1 273.54h1.3v2.07h-1.3zM689 269.4h0.7v2.07h-0.7z" fill="#94bfe2"/><path d="M27.3 277.68h1.3v2.07h-1.3zM27.3 281.82h1.3v2.07h-1.3zM28.6 277.68h1.3v2.07h-1.3zM28.6 281.82h1.3v2.07h-1.3zM29.9 269.4h1.3v2.07h-1.3zM29.9 277.68h1.3v2.07h-1.3zM32.5 283.89h1.3v2.07h-1.3zM35.1 285.96h1.3v2.07h-1.3zM36.4 285.96h1.3v2.07h-1.3zM36.4 290.1h1.3v2.07h-1.3zM37.7 269.4h1.3v2.07h-1.3zM37.7 288.03h1.3v2.07h-1.3zM39 271.47h1.3v2.07h-1.3zM39 281.82h1.3v2.07h-1.3zM41.6 288.03h1.3v2.07h-1.3zM42.9 273.54h1.3v2.07h-1.3zM44.2 283.89h1.3v2.07h-1.3zM45.5 273.54h1.3v2.07h-1.3zM46.8 275.61h1.3v2.07h-1.3zM48.1 273.54h1.3v2.07h-1.3zM52 271.47h1.3v2.07h-1.3zM55.9 285.96h1.3v2.07h-1.3zM57.2 271.47h1.3v2.07h-1.3zM57.2 279.75h1.3v2.07h-1.3zM57.2 292.17h1.3v2.07h-1.3zM59.8 271.47h1.3v2.07h-1.3zM59.8 292.17h1.3v2.07h-1.3zM61.1 281.82h1.3v2.07h-1.3zM62.4 273.54h1.3v2.07h-1.3zM62.4 279.75h1.3v2.07h-1.3zM68.9 285.96h1.3v2.07h-1.3zM71.5 281.82h1.3v2.07h-1.3zM78 283.89h1.3v2.07h-1.3zM78 290.1h1.3v2.07h-1.3zM78 292.17h1.3v2.07h-1.3zM79.3 288.03h1.3v2.07h-1.3zM81.9 279.75h1.3v2.07h-1.3zM83.2 273.54h1.3v2.07h-1.3zM84.5 283.89h1.3v2.07h-1.3zM85.8 277.68h1.3v2.07h-1.3zM85.8 285.96h1.3v2.07h-1.3zM88.4 275.61h1.3v2.07h-1.3zM88.4 277.68h1.3v2.07h-1.3zM89.7 281.82h1.3v2.07h-1.3zM89.7 290.1h1.3v2.07h-1.3zM91 273.54h1.3v2.07h-1.3zM91 290.1h1.3v2.07h-1.3zM92.3 283.89h1.3v2.07h-1.3zM93.6 292.17h1.3v2.07h-1.3zM94.9 269.4h1.3v2.07h-1.3zM94.9 271.47h1.3v2.07h-1.3zM94.9 275.61h1.3v2.07h-1.3zM94.9 283.89h1.3v2.07h-1.3zM94.9 285.96h1.3v2.07h-1.3zM94.9 292.17h1.3v2.07h-1.3zM97.5 277.68h1.3v2.07h-1.3zM97.5 281.82h1.3v2.07h-1.3zM105.3 292.17h1.3v2.07h-1.3zM106.6 273.54h1.3v2.07h-1.3zM106.6 275.61h1.3v2.07h-1.3zM106.6 279.75h1.3v2.07h-1.3zM106.6 285.96h1.3v2.07h-1.3zM107.9 277.68h1.3v2.07h-1.3zM109.2 285.96h1.3v2.07h-1.3zM111.8 271.47h1.3v2.07h-1.3zM113.1 285.96h1.3v2.07h-1.3zM115.7 273.54h1.3v2.07h-1.3zM115.7 285.96h1.3v2.07h-1.3zM118.3 269.4h1.3v2.07h-1.3zM118.3 288.03h1.3v2.07h-1.3zM118.3 290.1h1.3v2.07h-1.3zM119.6 271.47h1.3v2.07h-1.3zM119.6 279.75h1.3v2.07h-1.3zM123.5 290.1h1.3v2.07h-1.3zM124.8 281.82h1.3v2.07h-1.3zM124.8 290.1h1.3v2.07h-1.3zM126.1 271.47h1.3v2.07h-1.3zM126.1 281.82h1.3v2.07h-1.3zM127.4 281.82h1.3v2.07h-1.3zM128.7 273.54h1.3v2.07h-1.3zM130 281.82h1.3v2.07h-1.3zM130 285.96h1.3v2.07h-1.3zM132.6 281.82h1.3v2.07h-1.3zM136.5 290.1h1.3v2.07h-1.3zM137.8 281.82h1.3v2.07h-1.3zM139.1 269.4h1.3v2.07h-1.3zM139.1 279.75h1.3v2.07h-1.3zM139.1 292.17h1.3v2.07h-1.3zM140.4 269.4h1.3v2.07h-1.3zM143 269.4h1.3v2.07h-1.3zM143 277.68h1.3v2.07h-1.3zM144.3 269.4h1.3v2.07h-1.3zM144.3 271.47h1.3v2.07h-1.3zM144.3 292.17h1.3v2.07h-1.3zM145.6 269.4h1.3v2.07h-1.3zM145.6 273.54h1.3v2.07h-1.3zM145.6 290.1h1.3v2.07h-1.3zM146.9 273.54h1.3v2.07h-1.3zM149.5 283.89h1.3v2.07h-1.3zM150.8 269.4h1.3v2.07h-1.3zM150.8 288.03h1.3v2.07h-1.3zM152.1 283.89h1.3v2.07h-1.3zM156 285.96h1.3v2.07h-1.3zM156 292.17h1.3v2.07h-1.3zM157.3 283.89h1.3v2.07h-1.3zM158.6 277.68h1.3v2.07h-1.3zM158.6 290.1h1.3v2.07h-1.3zM159.9 275.61h1.3v2.07h-1.3zM159.9 290.1h1.3v2.07h-1.3zM161.2 288.03h1.3v2.07h-1.3zM165.1 288.03h1.3v2.07h-1.3zM165.1 292.17h1.3v2.07h-1.3zM166.4 285.96h1.3v2.07h-1.3zM169 269.4h1.3v2.07h-1.3zM169 275.61h1.3v2.07h-1.3zM170.3 271.47h1.3v2.07h-1.3zM170.3 275.61h1.3v2.07h-1.3zM170.3 283.89h1.3v2.07h-1.3zM170.3 285.96h1.3v2.07h-1.3zM170.3 288.03h1.3v2.07h-1.3zM171.6 285.96h1.3v2.07h-1.3zM171.6 292.17h1.3v2.07h-1.3zM176.8 269.4h1.3v2.07h-1.3zM176.8 279.75h1.3v2.07h-1.3zM179.4 283.89h1.3v2.07h-1.3zM182 269.4h1.3v2.07h-1.3zM182 288.03h1.3v2.07h-1.3zM183.3 271.47h1.3v2.07h-1.3zM188.5 283.89h1.3v2.07h-1.3zM191.1 283.89h1.3v2.07h-1.3zM191.1 292.17h1.3v2.07h-1.3zM192.4 281.82h1.3v2.07h-1.3zM192.4 285.96h1.3v2.07h-1.3zM195 269.4h1.3v2.07h-1.3zM196.3 283.89h1.3v2.07h-1.3zM196.3 292.17h1.3v2.07h-1.3zM197.6 271.47h1.3v2.07h-1.3zM201.5 271.47h1.3v2.07h-1.3zM204.1 290.1h1.3v2.07h-1.3zM208 281.82h1.3v2.07h-1.3zM209.3 271.47h1.3v2.07h-1.3zM209.3 281.82h1.3v2.07h-1.3zM209.3 285.96h1.3v2.07h-1.3zM209.3 288.03h1.3v2.07h-1.3zM210.6 273.54h1.3v2.07h-1.3zM210.6 275.61h1.3v2.07h-1.3zM211.9 271.47h1.3v2.07h-1.3zM211.9 275.61h1.3v2.07h-1.3zM213.2 279.75h1.3v2.07h-1.3zM214.5 271.47h1.3v2.07h-1.3zM214.5 288.03h1.3v2.07h-1.3zM214.5 290.1h1.3v2.07h-1.3zM215.8 283.89h1.3v2.07h-1.3zM215.8 288.03h1.3v2.07h-1.3zM215.8 292.17h1.3v2.07h-1.3zM221 275.61h1.3v2.07h-1.3zM222.3 277.68h1.3v2.07h-1.3zM222.3 279.75h1.3v2.07h-1.3zM223.6 273.54h1.3v2.07h-1.3zM227.5 271.47h1.3v2.07h-1.3zM228.8 271.47h1.3v2.07h-1.3zM228.8 279.75h1.3v2.07h-1.3zM230.1 292.17h1.3v2.07h-1.3zM232.7 275.61h1.3v2.07h-1.3zM232.7 279.75h1.3v2.07h-1.3zM234 281.82h1.3v2.07h-1.3zM235.3 273.54h1.3v2.07h-1.3zM235.3 277.68h1.3v2.07h-1.3zM237.9 283.89h1.3v2.07h-1.3zM244.4 275.61h1.3v2.07h-1.3zM249.6 279.75h1.3v2.07h-1.3zM252.2 279.75h1.3v2.07h-1.3zM252.2 285.96h1.3v2.07h-1.3zM254.8 279.75h1.3v2.07h-1.3zM256.1 283.89h1.3v2.07h-1.3zM266.5 271.47h1.3v2.07h-1.3zM266.5 281.82h1.3v2.07h-1.3zM266.5 290.1h1.3v2.07h-1.3zM269.1 290.1h1.3v2.07h-1.3zM276.9 271.47h1.3v2.07h-1.3zM276.9 273.54h1.3v2.07h-1.3zM276.9 292.17h1.3v2.07h-1.3zM278.2 271.47h1.3v2.07h-1.3zM278.2 277.68h1.3v2.07h-1.3zM278.2 281.82h1.3v2.07h-1.3zM279.5 277.68h1.3v2.07h-1.3zM280.8 269.4h1.3v2.07h-1.3zM283.4 275.61h1.3v2.07h-1.3zM284.7 290.1h1.3v2.07h-1.3zM287.3 283.89h1.3v2.07h-1.3zM288.6 273.54h1.3v2.07h-1.3zM291.2 281.82h1.3v2.07h-1.3zM291.2 288.03h1.3v2.07h-1.3zM291.2 292.17h1.3v2.07h-1.3zM295.1 269.4h1.3v2.07h-1.3zM295.1 283.89h1.3v2.07h-1.3zM299 275.61h1.3v2.07h-1.3zM299 277.68h1.3v2.07h-1.3zM299 292.17h1.3v2.07h-1.3zM300.3 292.17h1.3v2.07h-1.3zM302.9 277.68h1.3v2.07h-1.3zM302.9 283.89h1.3v2.07h-1.3zM304.2 279.75h1.3v2.07h-1.3zM305.5 283.89h1.3v2.07h-1.3zM306.8 290.1h1.3v2.07h-1.3zM308.1 275.61h1.3v2.07h-1.3zM312 273.54h1.3v2.07h-1.3zM312 279.75h1.3v2.07h-1.3zM313.3 292.17h1.3v2.07h-1.3zM318.5 275.61h1.3v2.07h-1.3zM319.8 271.47h1.3v2.07h-1.3zM321.1 283.89h1.3v2.07h-1.3zM323.7 281.82h1.3v2.07h-1.3zM325 290.1h1.3v2.07h-1.3zM326.3 271.47h1.3v2.07h-1.3zM326.3 277.68h1.3v2.07h-1.3zM327.6 269.4h1.3v2.07h-1.3zM327.6 281.82h1.3v2.07h-1.3zM328.9 269.4h1.3v2.07h-1.3zM328.9 271.47h1.3v2.07h-1.3zM328.9 277.68h1.3v2.07h-1.3zM328.9 288.03h1.3v2.07h-1.3zM328.9 290.1h1.3v2.07h-1.3zM335.4 292.17h1.3v2.07h-1.3zM336.7 279.75h1.3v2.07h-1.3zM336.7 290.1h1.3v2.07h-1.3zM338 288.03h1.3v2.07h-1.3zM339.3 269.4h1.3v2.07h-1.3zM340.6 281.82h1.3v2.07h-1.3zM343.2 271.47h1.3v2.07h-1.3zM344.5 269.4h1.3v2.07h-1.3zM347.1 288.03h1.3v2.07h-1.3zM349.7 277.68h1.3v2.07h-1.3zM349.7 283.89h1.3v2.07h-1.3zM351 281.82h1.3v2.07h-1.3zM352.3 279.75h1.3v2.07h-1.3zM353.6 279.75h1.3v2.07h-1.3zM354.9 285.96h1.3v2.07h-1.3zM354.9 290.1h1.3v2.07h-1.3zM357.5 269.4h1.3v2.07h-1.3zM357.5 285.96h1.3v2.07h-1.3zM358.8 273.54h1.3v2.07h-1.3zM358.8 285.96h1.3v2.07h-1.3zM358.8 292.17h1.3v2.07h-1.3zM361.4 271.47h1.3v2.07h-1.3zM361.4 279.75h1.3v2.07h-1.3zM361.4 281.82h1.3v2.07h-1.3zM361.4 283.89h1.3v2.07h-1.3zM361.4 285.96h1.3v2.07h-1.3zM362.7 273.54h1.3v2.07h-1.3zM362.7 277.68h1.3v2.07h-1.3zM362.7 283.89h1.3v2.07h-1.3zM362.7 288.03h1.3v2.07h-1.3zM365.3 288.03h1.3v2.07h-1.3zM366.6 277.68h1.3v2.07h-1.3zM367.9 269.4h1.3v2.07h-1.3zM370.5 288.03h1.3v2.07h-1.3zM371.8 283.89h1.3v2.07h-1.3zM373.1 273.54h1.3v2.07h-1.3zM373.1 292.17h1.3v2.07h-1.3zM374.4 283.89h1.3v2.07h-1.3zM375.7 285.96h1.3v2.07h-1.3zM377 275.61h1.3v2.07h-1.3zM378.3 285.96h1.3v2.07h-1.3zM378.3 288.03h1.3v2.07h-1.3zM379.6 273.54h1.3v2.07h-1.3zM379.6 279.75h1.3v2.07h-1.3zM380.9 279.75h1.3v2.07h-1.3zM380.9 283.89h1.3v2.07h-1.3zM380.9 290.1h1.3v2.07h-1.3zM384.8 281.82h1.3v2.07h-1.3zM384.8 288.03h1.3v2.07h-1.3zM386.1 273.54h1.3v2.07h-1.3zM392.6 277.68h1.3v2.07h-1.3zM392.6 279.75h1.3v2.07h-1.3zM393.9 275.61h1.3v2.07h-1.3zM396.5 279.75h1.3v2.07h-1.3zM396.5 288.03h1.3v2.07h-1.3zM397.8 288.03h1.3v2.07h-1.3zM400.4 269.4h1.3v2.07h-1.3zM400.4 273.54h1.3v2.07h-1.3zM400.4 285.96h1.3v2.07h-1.3zM401.7 269.4h1.3v2.07h-1.3zM401.7 271.47h1.3v2.07h-1.3zM404.3 271.47h1.3v2.07h-1.3zM404.3 285.96h1.3v2.07h-1.3zM405.6 273.54h1.3v2.07h-1.3zM405.6 281.82h1.3v2.07h-1.3zM406.9 283.89h1.3v2.07h-1.3zM408.2 288.03h1.3v2.07h-1.3zM409.5 271.47h1.3v2.07h-1.3zM409.5 279.75h1.3v2.07h-1.3zM409.5 283.89h1.3v2.07h-1.3zM409.5 288.03h1.3v2.07h-1.3zM409.5 290.1h1.3v2.07h-1.3zM410.8 285.96h1.3v2.07h-1.3zM413.4 275.61h1.3v2.07h-1.3zM413.4 281.82h1.3v2.07h-1.3zM414.7 285.96h1.3v2.07h-1.3zM417.3 285.96h1.3v2.07h-1.3zM418.6 285.96h1.3v2.07h-1.3zM421.2 285.96h1.3v2.07h-1.3zM421.2 292.17h1.3v2.07h-1.3zM426.4 269.4h1.3v2.07h-1.3zM427.7 288.03h1.3v2.07h-1.3zM431.6 277.68h1.3v2.07h-1.3zM431.6 290.1h1.3v2.07h-1.3zM432.9 271.47h1.3v2.07h-1.3zM434.2 271.47h1.3v2.07h-1.3zM435.5 277.68h1.3v2.07h-1.3zM436.8 285.96h1.3v2.07h-1.3zM436.8 290.1h1.3v2.07h-1.3zM438.1 283.89h1.3v2.07h-1.3zM438.1 288.03h1.3v2.07h-1.3zM440.7 292.17h1.3v2.07h-1.3zM443.3 271.47h1.3v2.07h-1.3zM443.3 292.17h1.3v2.07h-1.3zM445.9 271.47h1.3v2.07h-1.3zM445.9 288.03h1.3v2.07h-1.3zM447.2 269.4h1.3v2.07h-1.3zM448.5 281.82h1.3v2.07h-1.3zM451.1 275.61h1.3v2.07h-1.3zM455 269.4h1.3v2.07h-1.3zM455 288.03h1.3v2.07h-1.3zM456.3 279.75h1.3v2.07h-1.3zM456.3 290.1h1.3v2.07h-1.3zM457.6 288.03h1.3v2.07h-1.3zM461.5 281.82h1.3v2.07h-1.3zM461.5 290.1h1.3v2.07h-1.3zM462.8 290.1h1.3v2.07h-1.3zM464.1 290.1h1.3v2.07h-1.3zM465.4 281.82h1.3v2.07h-1.3zM465.4 283.89h1.3v2.07h-1.3zM468 283.89h1.3v2.07h-1.3zM469.3 283.89h1.3v2.07h-1.3zM469.3 285.96h1.3v2.07h-1.3zM470.6 269.4h1.3v2.07h-1.3zM470.6 281.82h1.3v2.07h-1.3zM470.6 285.96h1.3v2.07h-1.3zM471.9 281.82h1.3v2.07h-1.3zM473.2 281.82h1.3v2.07h-1.3zM473.2 285.96h1.3v2.07h-1.3zM473.2 292.17h1.3v2.07h-1.3zM475.8 277.68h1.3v2.07h-1.3zM477.1 281.82h1.3v2.07h-1.3zM478.4 269.4h1.3v2.07h-1.3zM479.7 281.82h1.3v2.07h-1.3zM482.3 283.89h1.3v2.07h-1.3zM482.3 285.96h1.3v2.07h-1.3zM484.9 271.47h1.3v2.07h-1.3zM487.5 271.47h1.3v2.07h-1.3zM487.5 292.17h1.3v2.07h-1.3zM488.8 273.54h1.3v2.07h-1.3zM491.4 283.89h1.3v2.07h-1.3zM491.4 288.03h1.3v2.07h-1.3zM492.7 271.47h1.3v2.07h-1.3zM492.7 273.54h1.3v2.07h-1.3zM495.3 275.61h1.3v2.07h-1.3zM495.3 277.68h1.3v2.07h-1.3zM496.6 277.68h1.3v2.07h-1.3zM496.6 281.82h1.3v2.07h-1.3zM496.6 292.17h1.3v2.07h-1.3zM497.9 271.47h1.3v2.07h-1.3zM500.5 290.1h1.3v2.07h-1.3zM501.8 279.75h1.3v2.07h-1.3zM501.8 290.1h1.3v2.07h-1.3zM503.1 275.61h1.3v2.07h-1.3zM503.1 292.17h1.3v2.07h-1.3zM504.4 290.1h1.3v2.07h-1.3zM507 275.61h1.3v2.07h-1.3zM507 277.68h1.3v2.07h-1.3zM507 279.75h1.3v2.07h-1.3zM507 290.1h1.3v2.07h-1.3zM508.3 281.82h1.3v2.07h-1.3zM509.6 290.1h1.3v2.07h-1.3zM513.5 281.82h1.3v2.07h-1.3zM513.5 283.89h1.3v2.07h-1.3zM516.1 275.61h1.3v2.07h-1.3zM518.7 271.47h1.3v2.07h-1.3zM520 277.68h1.3v2.07h-1.3zM520 279.75h1.3v2.07h-1.3zM521.3 275.61h1.3v2.07h-1.3zM521.3 279.75h1.3v2.07h-1.3zM521.3 281.82h1.3v2.07h-1.3zM522.6 271.47h1.3v2.07h-1.3zM522.6 273.54h1.3v2.07h-1.3zM522.6 281.82h1.3v2.07h-1.3zM523.9 281.82h1.3v2.07h-1.3zM531.7 275.61h1.3v2.07h-1.3zM531.7 285.96h1.3v2.07h-1.3zM533 275.61h1.3v2.07h-1.3zM533 290.1h1.3v2.07h-1.3zM534.3 277.68h1.3v2.07h-1.3zM534.3 279.75h1.3v2.07h-1.3zM536.9 271.47h1.3v2.07h-1.3zM536.9 281.82h1.3v2.07h-1.3zM538.2 288.03h1.3v2.07h-1.3zM539.5 277.68h1.3v2.07h-1.3zM543.4 292.17h1.3v2.07h-1.3zM544.7 271.47h1.3v2.07h-1.3zM544.7 275.61h1.3v2.07h-1.3zM547.3 271.47h1.3v2.07h-1.3zM547.3 285.96h1.3v2.07h-1.3zM549.9 281.82h1.3v2.07h-1.3zM549.9 290.1h1.3v2.07h-1.3zM551.2 277.68h1.3v2.07h-1.3zM552.5 279.75h1.3v2.07h-1.3zM557.7 275.61h1.3v2.07h-1.3zM559 275.61h1.3v2.07h-1.3zM559 279.75h1.3v2.07h-1.3zM560.3 285.96h1.3v2.07h-1.3zM561.6 273.54h1.3v2.07h-1.3zM566.8 292.17h1.3v2.07h-1.3zM569.4 285.96h1.3v2.07h-1.3zM572 277.68h1.3v2.07h-1.3zM573.3 290.1h1.3v2.07h-1.3zM574.6 281.82h1.3v2.07h-1.3zM574.6 283.89h1.3v2.07h-1.3zM575.9 285.96h1.3v2.07h-1.3zM577.2 285.96h1.3v2.07h-1.3zM578.5 279.75h1.3v2.07h-1.3zM578.5 288.03h1.3v2.07h-1.3zM579.8 285.96h1.3v2.07h-1.3zM581.1 290.1h1.3v2.07h-1.3zM582.4 273.54h1.3v2.07h-1.3zM582.4 292.17h1.3v2.07h-1.3zM583.7 269.4h1.3v2.07h-1.3zM583.7 281.82h1.3v2.07h-1.3zM583.7 283.89h1.3v2.07h-1.3zM583.7 288.03h1.3v2.07h-1.3zM583.7 292.17h1.3v2.07h-1.3zM585 271.47h1.3v2.07h-1.3zM585 290.1h1.3v2.07h-1.3zM587.6 290.1h1.3v2.07h-1.3zM588.9 269.4h1.3v2.07h-1.3zM590.2 271.47h1.3v2.07h-1.3zM590.2 288.03h1.3v2.07h-1.3zM591.5 271.47h1.3v2.07h-1.3zM592.8 290.1h1.3v2.07h-1.3zM596.7 271.47h1.3v2.07h-1.3zM598 283.89h1.3v2.07h-1.3zM599.3 273.54h1.3v2.07h-1.3zM599.3 281.82h1.3v2.07h-1.3zM600.6 292.17h1.3v2.07h-1.3zM604.5 283.89h1.3v2.07h-1.3zM604.5 290.1h1.3v2.07h-1.3zM605.8 273.54h1.3v2.07h-1.3zM605.8 281.82h1.3v2.07h-1.3zM608.4 269.4h1.3v2.07h-1.3zM608.4 283.89h1.3v2.07h-1.3zM609.7 269.4h1.3v2.07h-1.3zM611 281.82h1.3v2.07h-1.3zM612.3 271.47h1.3v2.07h-1.3zM612.3 279.75h1.3v2.07h-1.3zM613.6 275.61h1.3v2.07h-1.3zM613.6 288.03h1.3v2.07h-1.3zM616.2 281.82h1.3v2.07h-1.3zM616.2 292.17h1.3v2.07h-1.3zM617.5 271.47h1.3v2.07h-1.3zM617.5 290.1h1.3v2.07h-1.3zM618.8 281.82h1.3v2.07h-1.3zM618.8 283.89h1.3v2.07h-1.3zM618.8 285.96h1.3v2.07h-1.3zM618.8 288.03h1.3v2.07h-1.3zM620.1 279.75h1.3v2.07h-1.3zM620.1 290.1h1.3v2.07h-1.3zM622.7 269.4h1.3v2.07h-1.3zM622.7 281.82h1.3v2.07h-1.3zM624 269.4h1.3v2.07h-1.3zM624 279.75h1.3v2.07h-1.3zM625.3 271.47h1.3v2.07h-1.3zM625.3 288.03h1.3v2.07h-1.3zM627.9 273.54h1.3v2.07h-1.3zM627.9 281.82h1.3v2.07h-1.3zM627.9 290.1h1.3v2.07h-1.3zM629.2 271.47h1.3v2.07h-1.3zM629.2 281.82h1.3v2.07h-1.3zM630.5 271.47h1.3v2.07h-1.3zM630.5 275.61h1.3v2.07h-1.3zM630.5 285.96h1.3v2.07h-1.3zM634.4 279.75h1.3v2.07h-1.3zM635.7 279.75h1.3v2.07h-1.3zM639.6 273.54h1.3v2.07h-1.3zM639.6 279.75h1.3v2.07h-1.3zM640.9 273.54h1.3v2.07h-1.3zM642.2 277.68h1.3v2.07h-1.3zM642.2 290.1h1.3v2.07h-1.3zM643.5 269.4h1.3v2.07h-1.3zM643.5 271.47h1.3v2.07h-1.3zM643.5 277.68h1.3v2.07h-1.3zM643.5 283.89h1.3v2.07h-1.3zM644.8 292.17h1.3v2.07h-1.3zM647.4 271.47h1.3v2.07h-1.3zM647.4 279.75h1.3v2.07h-1.3zM647.4 292.17h1.3v2.07h-1.3zM652.6 273.54h1.3v2.07h-1.3zM652.6 281.82h1.3v2.07h-1.3zM652.6 285.96h1.3v2.07h-1.3zM653.9 271.47h1.3v2.07h-1.3zM653.9 275.61h1.3v2.07h-1.3zM653.9 277.68h1.3v2.07h-1.3zM653.9 279.75h1.3v2.07h-1.3zM655.2 288.03h1.3v2.07h-1.3zM657.8 273.54h1.3v2.07h-1.3zM657.8 290.1h1.3v2.07h-1.3zM659.1 288.03h1.3v2.07h-1.3zM659.1 292.17h1.3v2.07h-1.3zM660.4 269.4h1.3v2.07h-1.3zM660.4 277.68h1.3v2.07h-1.3zM664.3 292.17h1.3v2.07h-1.3zM665.6 279.75h1.3v2.07h-1.3zM665.6 281.82h1.3v2.07h-1.3zM666.9 275.61h1.3v2.07h-1.3zM666.9 285.96h1.3v2.07h-1.3zM666.9 290.1h1.3v2.07h-1.3zM668.2 279.75h1.3v2.07h-1.3zM670.8 279.75h1.3v2.07h-1.3zM672.1 277.68h1.3v2.07h-1.3zM674.7 269.4h1.3v2.07h-1.3zM674.7 275.61h1.3v2.07h-1.3zM676 288.03h1.3v2.07h-1.3zM677.3 292.17h1.3v2.07h-1.3zM679.9 273.54h1.3v2.07h-1.3zM681.2 275.61h1.3v2.07h-1.3zM681.2 285.96h1.3v2.07h-1.3zM681.2 288.03h1.3v2.07h-1.3zM683.8 269.4h1.3v2.07h-1.3zM683.8 271.47h1.3v2.07h-1.3zM685.1 273.54h1.3v2.07h-1.3zM685.1 277.68h1.3v2.07h-1.3zM685.1 290.1h1.3v2.07h-1.3zM686.4 288.03h1.3v2.07h-1.3zM686.4 292.17h1.3v2.07h-1.3zM689 273.54h0.7v2.07h-0.7zM689 277.68h0.7v2.07h-0.7zM689 285.96h0.7v2.07h-0.7z" fill="#cde1f1"/><path d="M27.3 290.1h1.3v2.07h-1.3zM37.7 290.1h1.3v2.07h-1.3zM41.6 283.89h1.3v2.07h-1.3zM49.4 281.82h1.3v2.07h-1.3zM58.5 292.17h1.3v2.07h-1.3zM59.8 290.1h1.3v2.07h-1.3zM61.1 269.4h1.3v2.07h-1.3zM71.5 288.03h1.3v2.07h-1.3zM75.4 277.68h1.3v2.07h-1.3zM80.6 277.68h1.3v2.07h-1.3zM93.6 288.03h1.3v2.07h-1.3zM101.4 281.82h1.3v2.07h-1.3zM110.5 281.82h1.3v2.07h-1.3zM113.1 273.54h1.3v2.07h-1.3zM127.4 288.03h1.3v2.07h-1.3zM140.4 277.68h1.3v2.07h-1.3zM172.9 273.54h1.3v2.07h-1.3zM175.5 290.1h1.3v2.07h-1.3zM179.4 290.1h1.3v2.07h-1.3zM182 271.47h1.3v2.07h-1.3zM196.3 285.96h1.3v2.07h-1.3zM201.5 285.96h1.3v2.07h-1.3zM206.7 275.61h1.3v2.07h-1.3zM211.9 288.03h1.3v2.07h-1.3zM227.5 279.75h1.3v2.07h-1.3zM230.1 273.54h1.3v2.07h-1.3zM236.6 275.61h1.3v2.07h-1.3zM236.6 288.03h1.3v2.07h-1.3zM248.3 285.96h1.3v2.07h-1.3zM252.2 275.61h1.3v2.07h-1.3zM257.4 269.4h1.3v2.07h-1.3zM263.9 277.68h1.3v2.07h-1.3zM265.2 285.96h1.3v2.07h-1.3zM265.2 288.03h1.3v2.07h-1.3zM288.6 283.89h1.3v2.07h-1.3zM289.9 285.96h1.3v2.07h-1.3zM300.3 277.68h1.3v2.07h-1.3zM304.2 277.68h1.3v2.07h-1.3zM308.1 277.68h1.3v2.07h-1.3zM309.4 281.82h1.3v2.07h-1.3zM309.4 285.96h1.3v2.07h-1.3zM317.2 283.89h1.3v2.07h-1.3zM317.2 290.1h1.3v2.07h-1.3zM353.6 290.1h1.3v2.07h-1.3zM365.3 283.89h1.3v2.07h-1.3zM367.9 288.03h1.3v2.07h-1.3zM371.8 288.03h1.3v2.07h-1.3zM378.3 290.1h1.3v2.07h-1.3zM379.6 271.47h1.3v2.07h-1.3zM390 290.1h1.3v2.07h-1.3zM393.9 277.68h1.3v2.07h-1.3zM399.1 281.82h1.3v2.07h-1.3zM403 277.68h1.3v2.07h-1.3zM410.8 281.82h1.3v2.07h-1.3zM425.1 290.1h1.3v2.07h-1.3zM435.5 275.61h1.3v2.07h-1.3zM468 285.96h1.3v2.07h-1.3zM475.8 275.61h1.3v2.07h-1.3zM481 273.54h1.3v2.07h-1.3zM486.2 269.4h1.3v2.07h-1.3zM486.2 275.61h1.3v2.07h-1.3zM486.2 288.03h1.3v2.07h-1.3zM491.4 290.1h1.3v2.07h-1.3zM494 290.1h1.3v2.07h-1.3zM495.3 290.1h1.3v2.07h-1.3zM501.8 292.17h1.3v2.07h-1.3zM504.4 271.47h1.3v2.07h-1.3zM510.9 275.61h1.3v2.07h-1.3zM510.9 292.17h1.3v2.07h-1.3zM513.5 290.1h1.3v2.07h-1.3zM514.8 290.1h1.3v2.07h-1.3zM535.6 285.96h1.3v2.07h-1.3zM540.8 292.17h1.3v2.07h-1.3zM542.1 281.82h1.3v2.07h-1.3zM553.8 292.17h1.3v2.07h-1.3zM556.4 292.17h1.3v2.07h-1.3zM557.7 283.89h1.3v2.07h-1.3zM585 281.82h1.3v2.07h-1.3zM586.3 275.61h1.3v2.07h-1.3zM601.9 288.03h1.3v2.07h-1.3zM607.1 271.47h1.3v2.07h-1.3zM613.6 292.17h1.3v2.07h-1.3zM625.3 275.61h1.3v2.07h-1.3zM638.3 269.4h1.3v2.07h-1.3zM642.2 283.89h1.3v2.07h-1.3zM644.8 279.75h1.3v2.07h-1.3zM646.1 281.82h1.3v2.07h-1.3zM646.1 285.96h1.3v2.07h-1.3zM646.1 288.03h1.3v2.07h-1.3zM651.3 269.4h1.3v2.07h-1.3zM661.7 288.03h1.3v2.07h-1.3zM672.1 288.03h1.3v2.07h-1.3zM677.3 275.61h1.3v2.07h-1.3zM678.6 275.61h1.3v2.07h-1.3z" fill="#f9cab2"/><path d="M29.9 273.54h1.3v2.07h-1.3zM31.2 292.17h1.3v2.07h-1.3zM33.8 288.03h1.3v2.07h-1.3zM35.1 290.1h1.3v2.07h-1.3zM37.7 271.47h1.3v2.07h-1.3zM41.6 285.96h1.3v2.07h-1.3zM42.9 290.1h1.3v2.07h-1.3zM49.4 290.1h1.3v2.07h-1.3zM58.5 279.75h1.3v2.07h-1.3zM62.4 292.17h1.3v2.07h-1.3zM66.3 273.54h1.3v2.07h-1.3zM71.5 269.4h1.3v2.07h-1.3zM74.1 269.4h1.3v2.07h-1.3zM74.1 285.96h1.3v2.07h-1.3zM74.1 292.17h1.3v2.07h-1.3zM75.4 285.96h1.3v2.07h-1.3zM78 275.61h1.3v2.07h-1.3zM79.3 283.89h1.3v2.07h-1.3zM80.6 275.61h1.3v2.07h-1.3zM80.6 285.96h1.3v2.07h-1.3zM83.2 288.03h1.3v2.07h-1.3zM84.5 279.75h1.3v2.07h-1.3zM93.6 283.89h1.3v2.07h-1.3zM96.2 275.61h1.3v2.07h-1.3zM106.6 277.68h1.3v2.07h-1.3zM113.1 275.61h1.3v2.07h-1.3zM117 290.1h1.3v2.07h-1.3zM120.9 283.89h1.3v2.07h-1.3zM122.2 271.47h1.3v2.07h-1.3zM122.2 285.96h1.3v2.07h-1.3zM126.1 283.89h1.3v2.07h-1.3zM130 273.54h1.3v2.07h-1.3zM133.9 277.68h1.3v2.07h-1.3zM135.2 277.68h1.3v2.07h-1.3zM135.2 281.82h1.3v2.07h-1.3zM137.8 275.61h1.3v2.07h-1.3zM137.8 277.68h1.3v2.07h-1.3zM137.8 288.03h1.3v2.07h-1.3zM140.4 279.75h1.3v2.07h-1.3zM140.4 283.89h1.3v2.07h-1.3zM140.4 290.1h1.3v2.07h-1.3zM144.3 281.82h1.3v2.07h-1.3zM145.6 283.89h1.3v2.07h-1.3zM146.9 275.61h1.3v2.07h-1.3zM152.1 281.82h1.3v2.07h-1.3zM154.7 281.82h1.3v2.07h-1.3zM154.7 288.03h1.3v2.07h-1.3zM159.9 285.96h1.3v2.07h-1.3zM162.5 269.4h1.3v2.07h-1.3zM163.8 271.47h1.3v2.07h-1.3zM163.8 277.68h1.3v2.07h-1.3zM165.1 269.4h1.3v2.07h-1.3zM166.4 283.89h1.3v2.07h-1.3zM167.7 273.54h1.3v2.07h-1.3zM169 277.68h1.3v2.07h-1.3zM171.6 275.61h1.3v2.07h-1.3zM171.6 277.68h1.3v2.07h-1.3zM171.6 283.89h1.3v2.07h-1.3zM172.9 277.68h1.3v2.07h-1.3zM174.2 273.54h1.3v2.07h-1.3zM175.5 275.61h1.3v2.07h-1.3zM176.8 288.03h1.3v2.07h-1.3zM178.1 288.03h1.3v2.07h-1.3zM179.4 269.4h1.3v2.07h-1.3zM179.4 279.75h1.3v2.07h-1.3zM179.4 285.96h1.3v2.07h-1.3zM180.7 279.75h1.3v2.07h-1.3zM183.3 279.75h1.3v2.07h-1.3zM184.6 271.47h1.3v2.07h-1.3zM185.9 277.68h1.3v2.07h-1.3zM187.2 271.47h1.3v2.07h-1.3zM189.8 279.75h1.3v2.07h-1.3zM192.4 277.68h1.3v2.07h-1.3zM193.7 275.61h1.3v2.07h-1.3zM196.3 273.54h1.3v2.07h-1.3zM197.6 269.4h1.3v2.07h-1.3zM198.9 288.03h1.3v2.07h-1.3zM202.8 275.61h1.3v2.07h-1.3zM202.8 277.68h1.3v2.07h-1.3zM204.1 275.61h1.3v2.07h-1.3zM204.1 281.82h1.3v2.07h-1.3zM206.7 290.1h1.3v2.07h-1.3zM208 279.75h1.3v2.07h-1.3zM211.9 273.54h1.3v2.07h-1.3zM211.9 290.1h1.3v2.07h-1.3zM213.2 271.47h1.3v2.07h-1.3zM214.5 292.17h1.3v2.07h-1.3zM215.8 273.54h1.3v2.07h-1.3zM215.8 275.61h1.3v2.07h-1.3zM218.4 281.82h1.3v2.07h-1.3zM218.4 290.1h1.3v2.07h-1.3zM218.4 292.17h1.3v2.07h-1.3zM222.3 283.89h1.3v2.07h-1.3zM224.9 275.61h1.3v2.07h-1.3zM224.9 288.03h1.3v2.07h-1.3zM226.2 269.4h1.3v2.07h-1.3zM226.2 283.89h1.3v2.07h-1.3zM226.2 288.03h1.3v2.07h-1.3zM227.5 290.1h1.3v2.07h-1.3zM231.4 269.4h1.3v2.07h-1.3zM231.4 285.96h1.3v2.07h-1.3zM231.4 288.03h1.3v2.07h-1.3zM231.4 290.1h1.3v2.07h-1.3zM232.7 271.47h1.3v2.07h-1.3zM232.7 290.1h1.3v2.07h-1.3zM232.7 292.17h1.3v2.07h-1.3zM235.3 290.1h1.3v2.07h-1.3zM237.9 290.1h1.3v2.07h-1.3zM239.2 283.89h1.3v2.07h-1.3zM241.8 277.68h1.3v2.07h-1.3zM241.8 285.96h1.3v2.07h-1.3zM244.4 285.96h1.3v2.07h-1.3zM245.7 281.82h1.3v2.07h-1.3zM245.7 290.1h1.3v2.07h-1.3zM247 285.96h1.3v2.07h-1.3zM248.3 279.75h1.3v2.07h-1.3zM248.3 292.17h1.3v2.07h-1.3zM249.6 271.47h1.3v2.07h-1.3zM250.9 275.61h1.3v2.07h-1.3zM252.2 271.47h1.3v2.07h-1.3zM254.8 271.47h1.3v2.07h-1.3zM254.8 283.89h1.3v2.07h-1.3zM254.8 292.17h1.3v2.07h-1.3zM256.1 275.61h1.3v2.07h-1.3zM257.4 277.68h1.3v2.07h-1.3zM258.7 283.89h1.3v2.07h-1.3zM260 271.47h1.3v2.07h-1.3zM261.3 283.89h1.3v2.07h-1.3zM262.6 275.61h1.3v2.07h-1.3zM262.6 288.03h1.3v2.07h-1.3zM267.8 277.68h1.3v2.07h-1.3zM267.8 279.75h1.3v2.07h-1.3zM267.8 283.89h1.3v2.07h-1.3zM267.8 290.1h1.3v2.07h-1.3zM267.8 292.17h1.3v2.07h-1.3zM269.1 273.54h1.3v2.07h-1.3zM269.1 277.68h1.3v2.07h-1.3zM269.1 279.75h1.3v2.07h-1.3zM270.4 273.54h1.3v2.07h-1.3zM270.4 285.96h1.3v2.07h-1.3zM270.4 288.03h1.3v2.07h-1.3zM275.6 279.75h1.3v2.07h-1.3zM275.6 290.1h1.3v2.07h-1.3zM276.9 275.61h1.3v2.07h-1.3zM279.5 275.61h1.3v2.07h-1.3zM280.8 288.03h1.3v2.07h-1.3zM282.1 290.1h1.3v2.07h-1.3zM282.1 292.17h1.3v2.07h-1.3zM283.4 288.03h1.3v2.07h-1.3zM284.7 283.89h1.3v2.07h-1.3zM287.3 269.4h1.3v2.07h-1.3zM287.3 279.75h1.3v2.07h-1.3zM289.9 290.1h1.3v2.07h-1.3zM291.2 283.89h1.3v2.07h-1.3zM292.5 273.54h1.3v2.07h-1.3zM293.8 288.03h1.3v2.07h-1.3zM296.4 271.47h1.3v2.07h-1.3zM296.4 277.68h1.3v2.07h-1.3zM297.7 279.75h1.3v2.07h-1.3zM299 288.03h1.3v2.07h-1.3zM299 290.1h1.3v2.07h-1.3zM301.6 279.75h1.3v2.07h-1.3zM301.6 285.96h1.3v2.07h-1.3zM304.2 271.47h1.3v2.07h-1.3zM304.2 281.82h1.3v2.07h-1.3zM305.5 292.17h1.3v2.07h-1.3zM308.1 279.75h1.3v2.07h-1.3zM309.4 283.89h1.3v2.07h-1.3zM313.3 269.4h1.3v2.07h-1.3zM313.3 283.89h1.3v2.07h-1.3zM315.9 281.82h1.3v2.07h-1.3zM315.9 285.96h1.3v2.07h-1.3zM317.2 288.03h1.3v2.07h-1.3zM318.5 277.68h1.3v2.07h-1.3zM319.8 283.89h1.3v2.07h-1.3zM322.4 285.96h1.3v2.07h-1.3zM327.6 283.89h1.3v2.07h-1.3zM328.9 285.96h1.3v2.07h-1.3zM328.9 292.17h1.3v2.07h-1.3zM330.2 269.4h1.3v2.07h-1.3zM331.5 269.4h1.3v2.07h-1.3zM331.5 290.1h1.3v2.07h-1.3zM335.4 273.54h1.3v2.07h-1.3zM335.4 279.75h1.3v2.07h-1.3zM340.6 269.4h1.3v2.07h-1.3zM341.9 269.4h1.3v2.07h-1.3zM341.9 283.89h1.3v2.07h-1.3zM343.2 277.68h1.3v2.07h-1.3zM343.2 283.89h1.3v2.07h-1.3zM344.5 288.03h1.3v2.07h-1.3zM345.8 283.89h1.3v2.07h-1.3zM348.4 271.47h1.3v2.07h-1.3zM348.4 290.1h1.3v2.07h-1.3zM351 292.17h1.3v2.07h-1.3zM353.6 292.17h1.3v2.07h-1.3zM354.9 271.47h1.3v2.07h-1.3zM354.9 275.61h1.3v2.07h-1.3zM356.2 271.47h1.3v2.07h-1.3zM356.2 273.54h1.3v2.07h-1.3zM364 277.68h1.3v2.07h-1.3zM365.3 269.4h1.3v2.07h-1.3zM365.3 281.82h1.3v2.07h-1.3zM366.6 292.17h1.3v2.07h-1.3zM367.9 281.82h1.3v2.07h-1.3zM370.5 283.89h1.3v2.07h-1.3zM373.1 281.82h1.3v2.07h-1.3zM375.7 281.82h1.3v2.07h-1.3zM377 283.89h1.3v2.07h-1.3zM378.3 279.75h1.3v2.07h-1.3zM378.3 283.89h1.3v2.07h-1.3zM380.9 269.4h1.3v2.07h-1.3zM380.9 277.68h1.3v2.07h-1.3zM382.2 277.68h1.3v2.07h-1.3zM383.5 271.47h1.3v2.07h-1.3zM383.5 273.54h1.3v2.07h-1.3zM383.5 275.61h1.3v2.07h-1.3zM386.1 290.1h1.3v2.07h-1.3zM387.4 279.75h1.3v2.07h-1.3zM391.3 269.4h1.3v2.07h-1.3zM391.3 277.68h1.3v2.07h-1.3zM391.3 290.1h1.3v2.07h-1.3zM396.5 275.61h1.3v2.07h-1.3zM396.5 292.17h1.3v2.07h-1.3zM397.8 279.75h1.3v2.07h-1.3zM401.7 277.68h1.3v2.07h-1.3zM401.7 285.96h1.3v2.07h-1.3zM404.3 288.03h1.3v2.07h-1.3zM405.6 279.75h1.3v2.07h-1.3zM405.6 283.89h1.3v2.07h-1.3zM410.8 275.61h1.3v2.07h-1.3zM414.7 283.89h1.3v2.07h-1.3zM416 273.54h1.3v2.07h-1.3zM418.6 273.54h1.3v2.07h-1.3zM418.6 277.68h1.3v2.07h-1.3zM418.6 281.82h1.3v2.07h-1.3zM422.5 281.82h1.3v2.07h-1.3zM423.8 281.82h1.3v2.07h-1.3zM423.8 288.03h1.3v2.07h-1.3zM423.8 290.1h1.3v2.07h-1.3zM425.1 277.68h1.3v2.07h-1.3zM427.7 273.54h1.3v2.07h-1.3zM427.7 275.61h1.3v2.07h-1.3zM427.7 285.96h1.3v2.07h-1.3zM427.7 290.1h1.3v2.07h-1.3zM429 288.03h1.3v2.07h-1.3zM430.3 279.75h1.3v2.07h-1.3zM431.6 279.75h1.3v2.07h-1.3zM431.6 281.82h1.3v2.07h-1.3zM432.9 279.75h1.3v2.07h-1.3zM432.9 288.03h1.3v2.07h-1.3zM434.2 290.1h1.3v2.07h-1.3zM435.5 290.1h1.3v2.07h-1.3zM439.4 281.82h1.3v2.07h-1.3zM443.3 273.54h1.3v2.07h-1.3zM444.6 292.17h1.3v2.07h-1.3zM445.9 290.1h1.3v2.07h-1.3zM447.2 273.54h1.3v2.07h-1.3zM449.8 275.61h1.3v2.07h-1.3zM451.1 292.17h1.3v2.07h-1.3zM452.4 292.17h1.3v2.07h-1.3zM455 290.1h1.3v2.07h-1.3zM456.3 285.96h1.3v2.07h-1.3zM458.9 279.75h1.3v2.07h-1.3zM460.2 279.75h1.3v2.07h-1.3zM460.2 292.17h1.3v2.07h-1.3zM461.5 277.68h1.3v2.07h-1.3zM465.4 277.68h1.3v2.07h-1.3zM466.7 275.61h1.3v2.07h-1.3zM468 269.4h1.3v2.07h-1.3zM470.6 271.47h1.3v2.07h-1.3zM474.5 269.4h1.3v2.07h-1.3zM475.8 273.54h1.3v2.07h-1.3zM477.1 273.54h1.3v2.07h-1.3zM477.1 277.68h1.3v2.07h-1.3zM481 277.68h1.3v2.07h-1.3zM482.3 271.47h1.3v2.07h-1.3zM483.6 292.17h1.3v2.07h-1.3zM484.9 285.96h1.3v2.07h-1.3zM484.9 288.03h1.3v2.07h-1.3zM487.5 275.61h1.3v2.07h-1.3zM488.8 271.47h1.3v2.07h-1.3zM488.8 290.1h1.3v2.07h-1.3zM490.1 269.4h1.3v2.07h-1.3zM491.4 269.4h1.3v2.07h-1.3zM491.4 271.47h1.3v2.07h-1.3zM491.4 277.68h1.3v2.07h-1.3zM492.7 283.89h1.3v2.07h-1.3zM494 285.96h1.3v2.07h-1.3zM496.6 279.75h1.3v2.07h-1.3zM497.9 269.4h1.3v2.07h-1.3zM497.9 273.54h1.3v2.07h-1.3zM501.8 273.54h1.3v2.07h-1.3zM503.1 288.03h1.3v2.07h-1.3zM504.4 285.96h1.3v2.07h-1.3zM504.4 288.03h1.3v2.07h-1.3zM505.7 273.54h1.3v2.07h-1.3zM505.7 292.17h1.3v2.07h-1.3zM507 269.4h1.3v2.07h-1.3zM507 271.47h1.3v2.07h-1.3zM508.3 273.54h1.3v2.07h-1.3zM510.9 269.4h1.3v2.07h-1.3zM510.9 281.82h1.3v2.07h-1.3zM513.5 275.61h1.3v2.07h-1.3zM517.4 275.61h1.3v2.07h-1.3zM517.4 281.82h1.3v2.07h-1.3zM517.4 283.89h1.3v2.07h-1.3zM517.4 288.03h1.3v2.07h-1.3zM518.7 273.54h1.3v2.07h-1.3zM518.7 290.1h1.3v2.07h-1.3zM521.3 283.89h1.3v2.07h-1.3zM522.6 285.96h1.3v2.07h-1.3zM522.6 288.03h1.3v2.07h-1.3zM525.2 285.96h1.3v2.07h-1.3zM526.5 281.82h1.3v2.07h-1.3zM527.8 271.47h1.3v2.07h-1.3zM527.8 288.03h1.3v2.07h-1.3zM530.4 271.47h1.3v2.07h-1.3zM530.4 285.96h1.3v2.07h-1.3zM534.3 269.4h1.3v2.07h-1.3zM535.6 269.4h1.3v2.07h-1.3zM535.6 288.03h1.3v2.07h-1.3zM538.2 283.89h1.3v2.07h-1.3zM539.5 279.75h1.3v2.07h-1.3zM546 288.03h1.3v2.07h-1.3zM547.3 277.68h1.3v2.07h-1.3zM551.2 283.89h1.3v2.07h-1.3zM552.5 283.89h1.3v2.07h-1.3zM556.4 290.1h1.3v2.07h-1.3zM557.7 285.96h1.3v2.07h-1.3zM557.7 288.03h1.3v2.07h-1.3zM560.3 283.89h1.3v2.07h-1.3zM561.6 277.68h1.3v2.07h-1.3zM562.9 275.61h1.3v2.07h-1.3zM564.2 292.17h1.3v2.07h-1.3zM565.5 273.54h1.3v2.07h-1.3zM565.5 275.61h1.3v2.07h-1.3zM566.8 271.47h1.3v2.07h-1.3zM566.8 273.54h1.3v2.07h-1.3zM569.4 275.61h1.3v2.07h-1.3zM569.4 277.68h1.3v2.07h-1.3zM570.7 269.4h1.3v2.07h-1.3zM575.9 292.17h1.3v2.07h-1.3zM579.8 273.54h1.3v2.07h-1.3zM579.8 281.82h1.3v2.07h-1.3zM581.1 283.89h1.3v2.07h-1.3zM582.4 283.89h1.3v2.07h-1.3zM585 275.61h1.3v2.07h-1.3zM590.2 281.82h1.3v2.07h-1.3zM591.5 283.89h1.3v2.07h-1.3zM594.1 279.75h1.3v2.07h-1.3zM594.1 283.89h1.3v2.07h-1.3zM594.1 285.96h1.3v2.07h-1.3zM594.1 288.03h1.3v2.07h-1.3zM595.4 269.4h1.3v2.07h-1.3zM595.4 279.75h1.3v2.07h-1.3zM595.4 281.82h1.3v2.07h-1.3zM599.3 277.68h1.3v2.07h-1.3zM600.6 271.47h1.3v2.07h-1.3zM600.6 281.82h1.3v2.07h-1.3zM603.2 275.61h1.3v2.07h-1.3zM604.5 273.54h1.3v2.07h-1.3zM607.1 283.89h1.3v2.07h-1.3zM608.4 288.03h1.3v2.07h-1.3zM608.4 292.17h1.3v2.07h-1.3zM611 279.75h1.3v2.07h-1.3zM613.6 283.89h1.3v2.07h-1.3zM613.6 285.96h1.3v2.07h-1.3zM620.1 285.96h1.3v2.07h-1.3zM621.4 275.61h1.3v2.07h-1.3zM621.4 281.82h1.3v2.07h-1.3zM622.7 271.47h1.3v2.07h-1.3zM626.6 269.4h1.3v2.07h-1.3zM627.9 269.4h1.3v2.07h-1.3zM627.9 275.61h1.3v2.07h-1.3zM633.1 269.4h1.3v2.07h-1.3zM633.1 285.96h1.3v2.07h-1.3zM634.4 283.89h1.3v2.07h-1.3zM634.4 285.96h1.3v2.07h-1.3zM637 273.54h1.3v2.07h-1.3zM640.9 283.89h1.3v2.07h-1.3zM640.9 292.17h1.3v2.07h-1.3zM642.2 281.82h1.3v2.07h-1.3zM644.8 288.03h1.3v2.07h-1.3zM647.4 281.82h1.3v2.07h-1.3zM648.7 281.82h1.3v2.07h-1.3zM648.7 285.96h1.3v2.07h-1.3zM651.3 275.61h1.3v2.07h-1.3zM660.4 281.82h1.3v2.07h-1.3zM661.7 285.96h1.3v2.07h-1.3zM663 288.03h1.3v2.07h-1.3zM664.3 279.75h1.3v2.07h-1.3zM664.3 285.96h1.3v2.07h-1.3zM665.6 283.89h1.3v2.07h-1.3zM666.9 292.17h1.3v2.07h-1.3zM672.1 269.4h1.3v2.07h-1.3zM672.1 292.17h1.3v2.07h-1.3zM673.4 269.4h1.3v2.07h-1.3zM673.4 277.68h1.3v2.07h-1.3zM677.3 281.82h1.3v2.07h-1.3zM679.9 269.4h1.3v2.07h-1.3zM681.2 281.82h1.3v2.07h-1.3zM681.2 283.89h1.3v2.07h-1.3zM682.5 271.47h1.3v2.07h-1.3zM682.5 273.54h1.3v2.07h-1.3zM682.5 275.61h1.3v2.07h-1.3zM682.5 277.68h1.3v2.07h-1.3zM682.5 279.75h1.3v2.07h-1.3zM683.8 281.82h1.3v2.07h-1.3zM683.8 285.96h1.3v2.07h-1.3zM686.4 281.82h1.3v2.07h-1.3zM687.7 292.17h1.3v2.07h-1.3zM689 281.82h0.7v2.07h-0.7z" fill="#fbdccc"/><path d="M29.9 275.61h1.3v2.07h-1.3zM31.2 271.47h1.3v2.07h-1.3zM32.5 269.4h1.3v2.07h-1.3zM32.5 275.61h1.3v2.07h-1.3zM33.8 283.89h1.3v2.07h-1.3zM35.1 279.75h1.3v2.07h-1.3zM41.6 292.17h1.3v2.07h-1.3zM42.9 292.17h1.3v2.07h-1.3zM44.2 288.03h1.3v2.07h-1.3zM45.5 269.4h1.3v2.07h-1.3zM46.8 273.54h1.3v2.07h-1.3zM46.8 292.17h1.3v2.07h-1.3zM48.1 283.89h1.3v2.07h-1.3zM49.4 288.03h1.3v2.07h-1.3zM52 273.54h1.3v2.07h-1.3zM52 275.61h1.3v2.07h-1.3zM53.3 285.96h1.3v2.07h-1.3zM54.6 269.4h1.3v2.07h-1.3zM54.6 285.96h1.3v2.07h-1.3zM55.9 275.61h1.3v2.07h-1.3zM57.2 283.89h1.3v2.07h-1.3zM58.5 269.4h1.3v2.07h-1.3zM59.8 281.82h1.3v2.07h-1.3zM61.1 271.47h1.3v2.07h-1.3zM61.1 273.54h1.3v2.07h-1.3zM61.1 292.17h1.3v2.07h-1.3zM63.7 275.61h1.3v2.07h-1.3zM63.7 281.82h1.3v2.07h-1.3zM63.7 285.96h1.3v2.07h-1.3zM63.7 288.03h1.3v2.07h-1.3zM63.7 290.1h1.3v2.07h-1.3zM65 285.96h1.3v2.07h-1.3zM67.6 269.4h1.3v2.07h-1.3zM67.6 290.1h1.3v2.07h-1.3zM68.9 281.82h1.3v2.07h-1.3zM68.9 292.17h1.3v2.07h-1.3zM70.2 281.82h1.3v2.07h-1.3zM70.2 283.89h1.3v2.07h-1.3zM72.8 292.17h1.3v2.07h-1.3zM76.7 285.96h1.3v2.07h-1.3zM78 285.96h1.3v2.07h-1.3zM79.3 269.4h1.3v2.07h-1.3zM81.9 290.1h1.3v2.07h-1.3zM85.8 283.89h1.3v2.07h-1.3zM87.1 283.89h1.3v2.07h-1.3zM88.4 273.54h1.3v2.07h-1.3zM88.4 292.17h1.3v2.07h-1.3zM89.7 277.68h1.3v2.07h-1.3zM91 277.68h1.3v2.07h-1.3zM93.6 273.54h1.3v2.07h-1.3zM96.2 283.89h1.3v2.07h-1.3zM97.5 273.54h1.3v2.07h-1.3zM97.5 275.61h1.3v2.07h-1.3zM98.8 271.47h1.3v2.07h-1.3zM100.1 273.54h1.3v2.07h-1.3zM100.1 281.82h1.3v2.07h-1.3zM100.1 290.1h1.3v2.07h-1.3zM101.4 271.47h1.3v2.07h-1.3zM101.4 279.75h1.3v2.07h-1.3zM101.4 288.03h1.3v2.07h-1.3zM104 279.75h1.3v2.07h-1.3zM104 290.1h1.3v2.07h-1.3zM105.3 283.89h1.3v2.07h-1.3zM105.3 290.1h1.3v2.07h-1.3zM106.6 292.17h1.3v2.07h-1.3zM107.9 271.47h1.3v2.07h-1.3zM107.9 273.54h1.3v2.07h-1.3zM110.5 277.68h1.3v2.07h-1.3zM114.4 283.89h1.3v2.07h-1.3zM115.7 281.82h1.3v2.07h-1.3zM118.3 277.68h1.3v2.07h-1.3zM120.9 292.17h1.3v2.07h-1.3zM122.2 277.68h1.3v2.07h-1.3zM122.2 281.82h1.3v2.07h-1.3zM124.8 285.96h1.3v2.07h-1.3zM127.4 269.4h1.3v2.07h-1.3zM128.7 271.47h1.3v2.07h-1.3zM128.7 292.17h1.3v2.07h-1.3zM130 292.17h1.3v2.07h-1.3zM131.3 279.75h1.3v2.07h-1.3zM131.3 283.89h1.3v2.07h-1.3zM133.9 279.75h1.3v2.07h-1.3zM137.8 292.17h1.3v2.07h-1.3zM141.7 292.17h1.3v2.07h-1.3zM145.6 292.17h1.3v2.07h-1.3zM148.2 273.54h1.3v2.07h-1.3zM148.2 288.03h1.3v2.07h-1.3zM150.8 275.61h1.3v2.07h-1.3zM150.8 277.68h1.3v2.07h-1.3zM152.1 271.47h1.3v2.07h-1.3zM153.4 279.75h1.3v2.07h-1.3zM153.4 281.82h1.3v2.07h-1.3zM154.7 285.96h1.3v2.07h-1.3zM158.6 269.4h1.3v2.07h-1.3zM159.9 279.75h1.3v2.07h-1.3zM161.2 292.17h1.3v2.07h-1.3zM162.5 283.89h1.3v2.07h-1.3zM162.5 292.17h1.3v2.07h-1.3zM163.8 269.4h1.3v2.07h-1.3zM163.8 288.03h1.3v2.07h-1.3zM166.4 271.47h1.3v2.07h-1.3zM172.9 283.89h1.3v2.07h-1.3zM172.9 288.03h1.3v2.07h-1.3zM174.2 279.75h1.3v2.07h-1.3zM175.5 279.75h1.3v2.07h-1.3zM179.4 288.03h1.3v2.07h-1.3zM182 279.75h1.3v2.07h-1.3zM184.6 283.89h1.3v2.07h-1.3zM185.9 271.47h1.3v2.07h-1.3zM187.2 279.75h1.3v2.07h-1.3zM188.5 281.82h1.3v2.07h-1.3zM188.5 285.96h1.3v2.07h-1.3zM189.8 281.82h1.3v2.07h-1.3zM195 271.47h1.3v2.07h-1.3zM195 277.68h1.3v2.07h-1.3zM195 290.1h1.3v2.07h-1.3zM196.3 275.61h1.3v2.07h-1.3zM202.8 269.4h1.3v2.07h-1.3zM208 271.47h1.3v2.07h-1.3zM208 285.96h1.3v2.07h-1.3zM215.8 281.82h1.3v2.07h-1.3zM217.1 277.68h1.3v2.07h-1.3zM219.7 271.47h1.3v2.07h-1.3zM219.7 285.96h1.3v2.07h-1.3zM221 290.1h1.3v2.07h-1.3zM224.9 292.17h1.3v2.07h-1.3zM227.5 277.68h1.3v2.07h-1.3zM228.8 275.61h1.3v2.07h-1.3zM228.8 277.68h1.3v2.07h-1.3zM234 275.61h1.3v2.07h-1.3zM234 277.68h1.3v2.07h-1.3zM234 283.89h1.3v2.07h-1.3zM236.6 283.89h1.3v2.07h-1.3zM237.9 269.4h1.3v2.07h-1.3zM237.9 285.96h1.3v2.07h-1.3zM243.1 288.03h1.3v2.07h-1.3zM244.4 271.47h1.3v2.07h-1.3zM245.7 271.47h1.3v2.07h-1.3zM247 269.4h1.3v2.07h-1.3zM250.9 283.89h1.3v2.07h-1.3zM253.5 292.17h1.3v2.07h-1.3zM256.1 281.82h1.3v2.07h-1.3zM256.1 290.1h1.3v2.07h-1.3zM258.7 275.61h1.3v2.07h-1.3zM258.7 277.68h1.3v2.07h-1.3zM260 290.1h1.3v2.07h-1.3zM261.3 292.17h1.3v2.07h-1.3zM263.9 283.89h1.3v2.07h-1.3zM265.2 281.82h1.3v2.07h-1.3zM265.2 283.89h1.3v2.07h-1.3zM266.5 283.89h1.3v2.07h-1.3zM266.5 285.96h1.3v2.07h-1.3zM269.1 269.4h1.3v2.07h-1.3zM269.1 281.82h1.3v2.07h-1.3zM271.7 285.96h1.3v2.07h-1.3zM273 279.75h1.3v2.07h-1.3zM274.3 273.54h1.3v2.07h-1.3zM274.3 279.75h1.3v2.07h-1.3zM284.7 288.03h1.3v2.07h-1.3zM286 292.17h1.3v2.07h-1.3zM291.2 271.47h1.3v2.07h-1.3zM292.5 269.4h1.3v2.07h-1.3zM297.7 285.96h1.3v2.07h-1.3zM300.3 271.47h1.3v2.07h-1.3zM300.3 285.96h1.3v2.07h-1.3zM301.6 271.47h1.3v2.07h-1.3zM302.9 269.4h1.3v2.07h-1.3zM302.9 273.54h1.3v2.07h-1.3zM302.9 275.61h1.3v2.07h-1.3zM304.2 269.4h1.3v2.07h-1.3zM304.2 283.89h1.3v2.07h-1.3zM306.8 269.4h1.3v2.07h-1.3zM312 277.68h1.3v2.07h-1.3zM314.6 269.4h1.3v2.07h-1.3zM317.2 277.68h1.3v2.07h-1.3zM318.5 288.03h1.3v2.07h-1.3zM319.8 281.82h1.3v2.07h-1.3zM326.3 279.75h1.3v2.07h-1.3zM331.5 283.89h1.3v2.07h-1.3zM331.5 285.96h1.3v2.07h-1.3zM335.4 285.96h1.3v2.07h-1.3zM335.4 288.03h1.3v2.07h-1.3zM338 285.96h1.3v2.07h-1.3zM340.6 273.54h1.3v2.07h-1.3zM340.6 279.75h1.3v2.07h-1.3zM341.9 275.61h1.3v2.07h-1.3zM343.2 275.61h1.3v2.07h-1.3zM345.8 271.47h1.3v2.07h-1.3zM349.7 269.4h1.3v2.07h-1.3zM351 275.61h1.3v2.07h-1.3zM351 288.03h1.3v2.07h-1.3zM352.3 290.1h1.3v2.07h-1.3zM353.6 281.82h1.3v2.07h-1.3zM356.2 288.03h1.3v2.07h-1.3zM357.5 271.47h1.3v2.07h-1.3zM357.5 277.68h1.3v2.07h-1.3zM360.1 273.54h1.3v2.07h-1.3zM360.1 285.96h1.3v2.07h-1.3zM362.7 271.47h1.3v2.07h-1.3zM364 271.47h1.3v2.07h-1.3zM366.6 288.03h1.3v2.07h-1.3zM367.9 279.75h1.3v2.07h-1.3zM369.2 277.68h1.3v2.07h-1.3zM370.5 277.68h1.3v2.07h-1.3zM370.5 285.96h1.3v2.07h-1.3zM371.8 273.54h1.3v2.07h-1.3zM374.4 271.47h1.3v2.07h-1.3zM377 285.96h1.3v2.07h-1.3zM382.2 281.82h1.3v2.07h-1.3zM383.5 277.68h1.3v2.07h-1.3zM384.8 273.54h1.3v2.07h-1.3zM388.7 281.82h1.3v2.07h-1.3zM392.6 290.1h1.3v2.07h-1.3zM393.9 269.4h1.3v2.07h-1.3zM393.9 290.1h1.3v2.07h-1.3zM399.1 290.1h1.3v2.07h-1.3zM403 279.75h1.3v2.07h-1.3zM404.3 290.1h1.3v2.07h-1.3zM406.9 275.61h1.3v2.07h-1.3zM408.2 273.54h1.3v2.07h-1.3zM408.2 279.75h1.3v2.07h-1.3zM409.5 277.68h1.3v2.07h-1.3zM409.5 285.96h1.3v2.07h-1.3zM412.1 277.68h1.3v2.07h-1.3zM413.4 285.96h1.3v2.07h-1.3zM413.4 290.1h1.3v2.07h-1.3zM414.7 271.47h1.3v2.07h-1.3zM416 275.61h1.3v2.07h-1.3zM421.2 279.75h1.3v2.07h-1.3zM422.5 273.54h1.3v2.07h-1.3zM426.4 273.54h1.3v2.07h-1.3zM427.7 269.4h1.3v2.07h-1.3zM430.3 288.03h1.3v2.07h-1.3zM431.6 283.89h1.3v2.07h-1.3zM431.6 288.03h1.3v2.07h-1.3zM432.9 283.89h1.3v2.07h-1.3zM434.2 275.61h1.3v2.07h-1.3zM435.5 273.54h1.3v2.07h-1.3zM440.7 277.68h1.3v2.07h-1.3zM440.7 290.1h1.3v2.07h-1.3zM443.3 279.75h1.3v2.07h-1.3zM444.6 271.47h1.3v2.07h-1.3zM444.6 275.61h1.3v2.07h-1.3zM445.9 279.75h1.3v2.07h-1.3zM451.1 277.68h1.3v2.07h-1.3zM455 271.47h1.3v2.07h-1.3zM455 277.68h1.3v2.07h-1.3zM457.6 273.54h1.3v2.07h-1.3zM458.9 275.61h1.3v2.07h-1.3zM460.2 285.96h1.3v2.07h-1.3zM462.8 275.61h1.3v2.07h-1.3zM464.1 281.82h1.3v2.07h-1.3zM464.1 288.03h1.3v2.07h-1.3zM466.7 277.68h1.3v2.07h-1.3zM469.3 273.54h1.3v2.07h-1.3zM470.6 275.61h1.3v2.07h-1.3zM471.9 279.75h1.3v2.07h-1.3zM471.9 292.17h1.3v2.07h-1.3zM473.2 283.89h1.3v2.07h-1.3zM474.5 288.03h1.3v2.07h-1.3zM475.8 288.03h1.3v2.07h-1.3zM475.8 290.1h1.3v2.07h-1.3zM478.4 288.03h1.3v2.07h-1.3zM479.7 279.75h1.3v2.07h-1.3zM479.7 285.96h1.3v2.07h-1.3zM488.8 288.03h1.3v2.07h-1.3zM490.1 281.82h1.3v2.07h-1.3zM494 288.03h1.3v2.07h-1.3zM495.3 271.47h1.3v2.07h-1.3zM496.6 271.47h1.3v2.07h-1.3zM497.9 275.61h1.3v2.07h-1.3zM500.5 277.68h1.3v2.07h-1.3zM504.4 292.17h1.3v2.07h-1.3zM505.7 275.61h1.3v2.07h-1.3zM505.7 285.96h1.3v2.07h-1.3zM505.7 288.03h1.3v2.07h-1.3zM508.3 277.68h1.3v2.07h-1.3zM508.3 288.03h1.3v2.07h-1.3zM509.6 271.47h1.3v2.07h-1.3zM509.6 285.96h1.3v2.07h-1.3zM510.9 279.75h1.3v2.07h-1.3zM513.5 277.68h1.3v2.07h-1.3zM513.5 288.03h1.3v2.07h-1.3zM518.7 269.4h1.3v2.07h-1.3zM520 271.47h1.3v2.07h-1.3zM521.3 288.03h1.3v2.07h-1.3zM522.6 279.75h1.3v2.07h-1.3zM527.8 283.89h1.3v2.07h-1.3zM531.7 269.4h1.3v2.07h-1.3zM531.7 273.54h1.3v2.07h-1.3zM534.3 273.54h1.3v2.07h-1.3zM535.6 271.47h1.3v2.07h-1.3zM538.2 271.47h1.3v2.07h-1.3zM540.8 271.47h1.3v2.07h-1.3zM549.9 283.89h1.3v2.07h-1.3zM551.2 273.54h1.3v2.07h-1.3zM551.2 275.61h1.3v2.07h-1.3zM553.8 283.89h1.3v2.07h-1.3zM562.9 281.82h1.3v2.07h-1.3zM562.9 283.89h1.3v2.07h-1.3zM565.5 277.68h1.3v2.07h-1.3zM569.4 279.75h1.3v2.07h-1.3zM569.4 281.82h1.3v2.07h-1.3zM572 269.4h1.3v2.07h-1.3zM578.5 271.47h1.3v2.07h-1.3zM581.1 269.4h1.3v2.07h-1.3zM588.9 283.89h1.3v2.07h-1.3zM590.2 290.1h1.3v2.07h-1.3zM592.8 273.54h1.3v2.07h-1.3zM592.8 275.61h1.3v2.07h-1.3zM594.1 277.68h1.3v2.07h-1.3zM595.4 285.96h1.3v2.07h-1.3zM599.3 269.4h1.3v2.07h-1.3zM599.3 288.03h1.3v2.07h-1.3zM604.5 269.4h1.3v2.07h-1.3zM604.5 288.03h1.3v2.07h-1.3zM608.4 281.82h1.3v2.07h-1.3zM609.7 288.03h1.3v2.07h-1.3zM613.6 281.82h1.3v2.07h-1.3zM616.2 277.68h1.3v2.07h-1.3zM620.1 288.03h1.3v2.07h-1.3zM624 271.47h1.3v2.07h-1.3zM626.6 288.03h1.3v2.07h-1.3zM629.2 269.4h1.3v2.07h-1.3zM629.2 273.54h1.3v2.07h-1.3zM633.1 277.68h1.3v2.07h-1.3zM634.4 275.61h1.3v2.07h-1.3zM634.4 277.68h1.3v2.07h-1.3zM637 277.68h1.3v2.07h-1.3zM640.9 271.47h1.3v2.07h-1.3zM640.9 288.03h1.3v2.07h-1.3zM646.1 271.47h1.3v2.07h-1.3zM646.1 273.54h1.3v2.07h-1.3zM647.4 269.4h1.3v2.07h-1.3zM647.4 290.1h1.3v2.07h-1.3zM650 283.89h1.3v2.07h-1.3zM650 290.1h1.3v2.07h-1.3zM651.3 292.17h1.3v2.07h-1.3zM652.6 288.03h1.3v2.07h-1.3zM655.2 283.89h1.3v2.07h-1.3zM655.2 290.1h1.3v2.07h-1.3zM656.5 273.54h1.3v2.07h-1.3zM657.8 288.03h1.3v2.07h-1.3zM660.4 285.96h1.3v2.07h-1.3zM663 273.54h1.3v2.07h-1.3zM664.3 290.1h1.3v2.07h-1.3zM665.6 290.1h1.3v2.07h-1.3zM666.9 279.75h1.3v2.07h-1.3zM668.2 273.54h1.3v2.07h-1.3zM673.4 285.96h1.3v2.07h-1.3zM674.7 281.82h1.3v2.07h-1.3zM676 271.47h1.3v2.07h-1.3zM677.3 283.89h1.3v2.07h-1.3zM677.3 285.96h1.3v2.07h-1.3zM679.9 283.89h1.3v2.07h-1.3zM679.9 292.17h1.3v2.07h-1.3zM685.1 281.82h1.3v2.07h-1.3zM685.1 292.17h1.3v2.07h-1.3z" fill="#c4dcf0"/><path d="M29.9 279.75h1.3v2.07h-1.3zM32.5 279.75h1.3v2.07h-1.3zM35.1 292.17h1.3v2.07h-1.3zM37.7 275.61h1.3v2.07h-1.3zM37.7 283.89h1.3v2.07h-1.3zM37.7 285.96h1.3v2.07h-1.3zM39 285.96h1.3v2.07h-1.3zM39 290.1h1.3v2.07h-1.3zM41.6 279.75h1.3v2.07h-1.3zM41.6 281.82h1.3v2.07h-1.3zM48.1 271.47h1.3v2.07h-1.3zM58.5 288.03h1.3v2.07h-1.3zM61.1 288.03h1.3v2.07h-1.3zM65 269.4h1.3v2.07h-1.3zM66.3 288.03h1.3v2.07h-1.3zM68.9 275.61h1.3v2.07h-1.3zM71.5 273.54h1.3v2.07h-1.3zM71.5 277.68h1.3v2.07h-1.3zM72.8 269.4h1.3v2.07h-1.3zM72.8 271.47h1.3v2.07h-1.3zM75.4 279.75h1.3v2.07h-1.3zM78 277.68h1.3v2.07h-1.3zM80.6 290.1h1.3v2.07h-1.3zM84.5 288.03h1.3v2.07h-1.3zM91 269.4h1.3v2.07h-1.3zM98.8 275.61h1.3v2.07h-1.3zM101.4 275.61h1.3v2.07h-1.3zM102.7 275.61h1.3v2.07h-1.3zM102.7 279.75h1.3v2.07h-1.3zM104 275.61h1.3v2.07h-1.3zM107.9 290.1h1.3v2.07h-1.3zM111.8 283.89h1.3v2.07h-1.3zM113.1 288.03h1.3v2.07h-1.3zM119.6 277.68h1.3v2.07h-1.3zM119.6 283.89h1.3v2.07h-1.3zM119.6 285.96h1.3v2.07h-1.3zM126.1 290.1h1.3v2.07h-1.3zM131.3 271.47h1.3v2.07h-1.3zM131.3 275.61h1.3v2.07h-1.3zM132.6 273.54h1.3v2.07h-1.3zM135.2 279.75h1.3v2.07h-1.3zM137.8 290.1h1.3v2.07h-1.3zM139.1 277.68h1.3v2.07h-1.3zM144.3 277.68h1.3v2.07h-1.3zM144.3 283.89h1.3v2.07h-1.3zM152.1 288.03h1.3v2.07h-1.3zM154.7 275.61h1.3v2.07h-1.3zM156 288.03h1.3v2.07h-1.3zM158.6 279.75h1.3v2.07h-1.3zM159.9 271.47h1.3v2.07h-1.3zM162.5 275.61h1.3v2.07h-1.3zM167.7 275.61h1.3v2.07h-1.3zM172.9 275.61h1.3v2.07h-1.3zM174.2 269.4h1.3v2.07h-1.3zM174.2 290.1h1.3v2.07h-1.3zM174.2 292.17h1.3v2.07h-1.3zM178.1 279.75h1.3v2.07h-1.3zM178.1 281.82h1.3v2.07h-1.3zM178.1 290.1h1.3v2.07h-1.3zM179.4 273.54h1.3v2.07h-1.3zM179.4 292.17h1.3v2.07h-1.3zM180.7 283.89h1.3v2.07h-1.3zM183.3 269.4h1.3v2.07h-1.3zM184.6 288.03h1.3v2.07h-1.3zM185.9 281.82h1.3v2.07h-1.3zM193.7 292.17h1.3v2.07h-1.3zM195 283.89h1.3v2.07h-1.3zM197.6 288.03h1.3v2.07h-1.3zM198.9 285.96h1.3v2.07h-1.3zM201.5 288.03h1.3v2.07h-1.3zM205.4 283.89h1.3v2.07h-1.3zM206.7 271.47h1.3v2.07h-1.3zM210.6 269.4h1.3v2.07h-1.3zM210.6 283.89h1.3v2.07h-1.3zM213.2 292.17h1.3v2.07h-1.3zM221 273.54h1.3v2.07h-1.3zM223.6 292.17h1.3v2.07h-1.3zM224.9 290.1h1.3v2.07h-1.3zM228.8 285.96h1.3v2.07h-1.3zM228.8 288.03h1.3v2.07h-1.3zM230.1 285.96h1.3v2.07h-1.3zM234 288.03h1.3v2.07h-1.3zM236.6 281.82h1.3v2.07h-1.3zM240.5 273.54h1.3v2.07h-1.3zM240.5 283.89h1.3v2.07h-1.3zM240.5 285.96h1.3v2.07h-1.3zM241.8 279.75h1.3v2.07h-1.3zM248.3 288.03h1.3v2.07h-1.3zM250.9 292.17h1.3v2.07h-1.3zM256.1 277.68h1.3v2.07h-1.3zM258.7 279.75h1.3v2.07h-1.3zM260 283.89h1.3v2.07h-1.3zM260 288.03h1.3v2.07h-1.3zM261.3 275.61h1.3v2.07h-1.3zM262.6 273.54h1.3v2.07h-1.3zM262.6 279.75h1.3v2.07h-1.3zM266.5 273.54h1.3v2.07h-1.3zM266.5 277.68h1.3v2.07h-1.3zM269.1 275.61h1.3v2.07h-1.3zM270.4 269.4h1.3v2.07h-1.3zM271.7 292.17h1.3v2.07h-1.3zM274.3 285.96h1.3v2.07h-1.3zM276.9 281.82h1.3v2.07h-1.3zM282.1 273.54h1.3v2.07h-1.3zM283.4 279.75h1.3v2.07h-1.3zM283.4 285.96h1.3v2.07h-1.3zM286 283.89h1.3v2.07h-1.3zM287.3 271.47h1.3v2.07h-1.3zM288.6 279.75h1.3v2.07h-1.3zM291.2 275.61h1.3v2.07h-1.3zM293.8 273.54h1.3v2.07h-1.3zM296.4 275.61h1.3v2.07h-1.3zM297.7 275.61h1.3v2.07h-1.3zM297.7 288.03h1.3v2.07h-1.3zM297.7 290.1h1.3v2.07h-1.3zM301.6 290.1h1.3v2.07h-1.3zM306.8 288.03h1.3v2.07h-1.3zM310.7 292.17h1.3v2.07h-1.3zM312 269.4h1.3v2.07h-1.3zM314.6 283.89h1.3v2.07h-1.3zM315.9 288.03h1.3v2.07h-1.3zM317.2 275.61h1.3v2.07h-1.3zM319.8 285.96h1.3v2.07h-1.3zM321.1 277.68h1.3v2.07h-1.3zM321.1 290.1h1.3v2.07h-1.3zM325 271.47h1.3v2.07h-1.3zM325 277.68h1.3v2.07h-1.3zM332.8 285.96h1.3v2.07h-1.3zM341.9 277.68h1.3v2.07h-1.3zM341.9 279.75h1.3v2.07h-1.3zM341.9 288.03h1.3v2.07h-1.3zM343.2 279.75h1.3v2.07h-1.3zM352.3 277.68h1.3v2.07h-1.3zM352.3 283.89h1.3v2.07h-1.3zM358.8 279.75h1.3v2.07h-1.3zM364 275.61h1.3v2.07h-1.3zM365.3 290.1h1.3v2.07h-1.3zM366.6 273.54h1.3v2.07h-1.3zM366.6 285.96h1.3v2.07h-1.3zM367.9 277.68h1.3v2.07h-1.3zM369.2 285.96h1.3v2.07h-1.3zM370.5 292.17h1.3v2.07h-1.3zM373.1 288.03h1.3v2.07h-1.3zM375.7 269.4h1.3v2.07h-1.3zM375.7 288.03h1.3v2.07h-1.3zM377 277.68h1.3v2.07h-1.3zM380.9 273.54h1.3v2.07h-1.3zM382.2 271.47h1.3v2.07h-1.3zM383.5 290.1h1.3v2.07h-1.3zM387.4 275.61h1.3v2.07h-1.3zM395.2 275.61h1.3v2.07h-1.3zM395.2 290.1h1.3v2.07h-1.3zM400.4 279.75h1.3v2.07h-1.3zM404.3 279.75h1.3v2.07h-1.3zM414.7 273.54h1.3v2.07h-1.3zM416 271.47h1.3v2.07h-1.3zM416 279.75h1.3v2.07h-1.3zM418.6 288.03h1.3v2.07h-1.3zM419.9 273.54h1.3v2.07h-1.3zM419.9 277.68h1.3v2.07h-1.3zM419.9 283.89h1.3v2.07h-1.3zM421.2 269.4h1.3v2.07h-1.3zM422.5 285.96h1.3v2.07h-1.3zM425.1 271.47h1.3v2.07h-1.3zM429 277.68h1.3v2.07h-1.3zM430.3 281.82h1.3v2.07h-1.3zM434.2 277.68h1.3v2.07h-1.3zM435.5 271.47h1.3v2.07h-1.3zM436.8 283.89h1.3v2.07h-1.3zM439.4 283.89h1.3v2.07h-1.3zM442 290.1h1.3v2.07h-1.3zM445.9 275.61h1.3v2.07h-1.3zM449.8 292.17h1.3v2.07h-1.3zM451.1 288.03h1.3v2.07h-1.3zM452.4 283.89h1.3v2.07h-1.3zM453.7 283.89h1.3v2.07h-1.3zM453.7 285.96h1.3v2.07h-1.3zM457.6 290.1h1.3v2.07h-1.3zM460.2 269.4h1.3v2.07h-1.3zM460.2 281.82h1.3v2.07h-1.3zM464.1 273.54h1.3v2.07h-1.3zM464.1 292.17h1.3v2.07h-1.3zM470.6 290.1h1.3v2.07h-1.3zM471.9 283.89h1.3v2.07h-1.3zM484.9 269.4h1.3v2.07h-1.3zM491.4 273.54h1.3v2.07h-1.3zM491.4 275.61h1.3v2.07h-1.3zM491.4 279.75h1.3v2.07h-1.3zM491.4 292.17h1.3v2.07h-1.3zM495.3 273.54h1.3v2.07h-1.3zM500.5 275.61h1.3v2.07h-1.3zM501.8 275.61h1.3v2.07h-1.3zM508.3 292.17h1.3v2.07h-1.3zM516.1 271.47h1.3v2.07h-1.3zM516.1 283.89h1.3v2.07h-1.3zM516.1 290.1h1.3v2.07h-1.3zM520 269.4h1.3v2.07h-1.3zM522.6 277.68h1.3v2.07h-1.3zM525.2 277.68h1.3v2.07h-1.3zM526.5 269.4h1.3v2.07h-1.3zM526.5 277.68h1.3v2.07h-1.3zM539.5 269.4h1.3v2.07h-1.3zM539.5 271.47h1.3v2.07h-1.3zM540.8 290.1h1.3v2.07h-1.3zM542.1 277.68h1.3v2.07h-1.3zM542.1 288.03h1.3v2.07h-1.3zM543.4 285.96h1.3v2.07h-1.3zM546 277.68h1.3v2.07h-1.3zM546 283.89h1.3v2.07h-1.3zM548.6 279.75h1.3v2.07h-1.3zM548.6 285.96h1.3v2.07h-1.3zM549.9 277.68h1.3v2.07h-1.3zM551.2 288.03h1.3v2.07h-1.3zM553.8 288.03h1.3v2.07h-1.3zM556.4 285.96h1.3v2.07h-1.3zM557.7 269.4h1.3v2.07h-1.3zM557.7 279.75h1.3v2.07h-1.3zM559 273.54h1.3v2.07h-1.3zM565.5 288.03h1.3v2.07h-1.3zM566.8 283.89h1.3v2.07h-1.3zM568.1 271.47h1.3v2.07h-1.3zM568.1 285.96h1.3v2.07h-1.3zM573.3 279.75h1.3v2.07h-1.3zM577.2 273.54h1.3v2.07h-1.3zM577.2 279.75h1.3v2.07h-1.3zM577.2 281.82h1.3v2.07h-1.3zM578.5 273.54h1.3v2.07h-1.3zM578.5 275.61h1.3v2.07h-1.3zM581.1 281.82h1.3v2.07h-1.3zM583.7 273.54h1.3v2.07h-1.3zM586.3 269.4h1.3v2.07h-1.3zM586.3 271.47h1.3v2.07h-1.3zM586.3 283.89h1.3v2.07h-1.3zM592.8 271.47h1.3v2.07h-1.3zM592.8 283.89h1.3v2.07h-1.3zM592.8 285.96h1.3v2.07h-1.3zM596.7 285.96h1.3v2.07h-1.3zM601.9 269.4h1.3v2.07h-1.3zM601.9 292.17h1.3v2.07h-1.3zM603.2 292.17h1.3v2.07h-1.3zM608.4 275.61h1.3v2.07h-1.3zM621.4 285.96h1.3v2.07h-1.3zM626.6 277.68h1.3v2.07h-1.3zM633.1 288.03h1.3v2.07h-1.3zM637 285.96h1.3v2.07h-1.3zM650 273.54h1.3v2.07h-1.3zM650 292.17h1.3v2.07h-1.3zM651.3 271.47h1.3v2.07h-1.3zM651.3 273.54h1.3v2.07h-1.3zM656.5 281.82h1.3v2.07h-1.3zM657.8 279.75h1.3v2.07h-1.3zM660.4 271.47h1.3v2.07h-1.3zM664.3 277.68h1.3v2.07h-1.3zM665.6 285.96h1.3v2.07h-1.3zM666.9 288.03h1.3v2.07h-1.3zM669.5 279.75h1.3v2.07h-1.3zM669.5 283.89h1.3v2.07h-1.3zM669.5 292.17h1.3v2.07h-1.3zM670.8 271.47h1.3v2.07h-1.3zM670.8 285.96h1.3v2.07h-1.3zM672.1 279.75h1.3v2.07h-1.3zM674.7 277.68h1.3v2.07h-1.3zM676 273.54h1.3v2.07h-1.3zM678.6 281.82h1.3v2.07h-1.3zM681.2 269.4h1.3v2.07h-1.3zM686.4 285.96h1.3v2.07h-1.3zM687.7 269.4h1.3v2.07h-1.3zM689 290.1h0.7v2.07h-0.7z" fill="#fad2be"/><path d="M31.2 288.03h1.3v2.07h-1.3zM32.5 285.96h1.3v2.07h-1.3zM36.4 288.03h1.3v2.07h-1.3zM40.3 288.03h1.3v2.07h-1.3zM48.1 290.1h1.3v2.07h-1.3zM49.4 285.96h1.3v2.07h-1.3zM50.7 285.96h1.3v2.07h-1.3zM54.6 288.03h1.3v2.07h-1.3zM59.8 285.96h1.3v2.07h-1.3zM61.1 285.96h1.3v2.07h-1.3zM65 273.54h1.3v2.07h-1.3zM67.6 281.82h1.3v2.07h-1.3zM78 273.54h1.3v2.07h-1.3zM80.6 273.54h1.3v2.07h-1.3zM81.9 271.47h1.3v2.07h-1.3zM81.9 288.03h1.3v2.07h-1.3zM92.3 269.4h1.3v2.07h-1.3zM92.3 290.1h1.3v2.07h-1.3zM94.9 290.1h1.3v2.07h-1.3zM97.5 271.47h1.3v2.07h-1.3zM104 283.89h1.3v2.07h-1.3zM104 288.03h1.3v2.07h-1.3zM106.6 269.4h1.3v2.07h-1.3zM106.6 281.82h1.3v2.07h-1.3zM109.2 281.82h1.3v2.07h-1.3zM115.7 279.75h1.3v2.07h-1.3zM119.6 290.1h1.3v2.07h-1.3zM119.6 292.17h1.3v2.07h-1.3zM120.9 271.47h1.3v2.07h-1.3zM120.9 277.68h1.3v2.07h-1.3zM122.2 269.4h1.3v2.07h-1.3zM122.2 275.61h1.3v2.07h-1.3zM124.8 273.54h1.3v2.07h-1.3zM127.4 275.61h1.3v2.07h-1.3zM127.4 279.75h1.3v2.07h-1.3zM127.4 283.89h1.3v2.07h-1.3zM128.7 281.82h1.3v2.07h-1.3zM135.2 290.1h1.3v2.07h-1.3zM140.4 285.96h1.3v2.07h-1.3zM143 275.61h1.3v2.07h-1.3zM143 288.03h1.3v2.07h-1.3zM156 275.61h1.3v2.07h-1.3zM161.2 277.68h1.3v2.07h-1.3zM167.7 279.75h1.3v2.07h-1.3zM167.7 288.03h1.3v2.07h-1.3zM172.9 269.4h1.3v2.07h-1.3zM183.3 283.89h1.3v2.07h-1.3zM218.4 279.75h1.3v2.07h-1.3zM219.7 281.82h1.3v2.07h-1.3zM236.6 292.17h1.3v2.07h-1.3zM237.9 279.75h1.3v2.07h-1.3zM250.9 269.4h1.3v2.07h-1.3zM250.9 273.54h1.3v2.07h-1.3zM252.2 269.4h1.3v2.07h-1.3zM258.7 271.47h1.3v2.07h-1.3zM270.4 271.47h1.3v2.07h-1.3zM270.4 281.82h1.3v2.07h-1.3zM274.3 292.17h1.3v2.07h-1.3zM279.5 273.54h1.3v2.07h-1.3zM280.8 273.54h1.3v2.07h-1.3zM283.4 290.1h1.3v2.07h-1.3zM284.7 275.61h1.3v2.07h-1.3zM287.3 277.68h1.3v2.07h-1.3zM296.4 269.4h1.3v2.07h-1.3zM308.1 288.03h1.3v2.07h-1.3zM315.9 290.1h1.3v2.07h-1.3zM325 269.4h1.3v2.07h-1.3zM334.1 285.96h1.3v2.07h-1.3zM338 283.89h1.3v2.07h-1.3zM340.6 292.17h1.3v2.07h-1.3zM349.7 290.1h1.3v2.07h-1.3zM354.9 292.17h1.3v2.07h-1.3zM358.8 271.47h1.3v2.07h-1.3zM360.1 277.68h1.3v2.07h-1.3zM360.1 279.75h1.3v2.07h-1.3zM373.1 277.68h1.3v2.07h-1.3zM378.3 292.17h1.3v2.07h-1.3zM395.2 277.68h1.3v2.07h-1.3zM404.3 269.4h1.3v2.07h-1.3zM406.9 269.4h1.3v2.07h-1.3zM409.5 269.4h1.3v2.07h-1.3zM429 281.82h1.3v2.07h-1.3zM429 292.17h1.3v2.07h-1.3zM438.1 285.96h1.3v2.07h-1.3zM439.4 277.68h1.3v2.07h-1.3zM449.8 285.96h1.3v2.07h-1.3zM449.8 288.03h1.3v2.07h-1.3zM453.7 271.47h1.3v2.07h-1.3zM458.9 285.96h1.3v2.07h-1.3zM482.3 279.75h1.3v2.07h-1.3zM488.8 275.61h1.3v2.07h-1.3zM490.1 275.61h1.3v2.07h-1.3zM494 279.75h1.3v2.07h-1.3zM500.5 288.03h1.3v2.07h-1.3zM501.8 277.68h1.3v2.07h-1.3zM503.1 277.68h1.3v2.07h-1.3zM513.5 271.47h1.3v2.07h-1.3zM514.8 281.82h1.3v2.07h-1.3zM518.7 279.75h1.3v2.07h-1.3zM540.8 281.82h1.3v2.07h-1.3zM544.7 281.82h1.3v2.07h-1.3zM560.3 279.75h1.3v2.07h-1.3zM566.8 290.1h1.3v2.07h-1.3zM568.1 275.61h1.3v2.07h-1.3zM570.7 290.1h1.3v2.07h-1.3zM599.3 285.96h1.3v2.07h-1.3zM601.9 277.68h1.3v2.07h-1.3zM613.6 290.1h1.3v2.07h-1.3zM618.8 292.17h1.3v2.07h-1.3zM629.2 277.68h1.3v2.07h-1.3zM638.3 279.75h1.3v2.07h-1.3zM648.7 292.17h1.3v2.07h-1.3zM656.5 275.61h1.3v2.07h-1.3zM659.1 283.89h1.3v2.07h-1.3zM661.7 271.47h1.3v2.07h-1.3zM672.1 275.61h1.3v2.07h-1.3zM673.4 283.89h1.3v2.07h-1.3zM679.9 285.96h1.3v2.07h-1.3z" fill="#b4d4ec"/><path d="M36.4 275.61h1.3v2.07h-1.3zM36.4 292.17h1.3v2.07h-1.3zM44.2 275.61h1.3v2.07h-1.3zM45.5 271.47h1.3v2.07h-1.3zM46.8 281.82h1.3v2.07h-1.3zM53.3 273.54h1.3v2.07h-1.3zM55.9 290.1h1.3v2.07h-1.3zM62.4 277.68h1.3v2.07h-1.3zM67.6 279.75h1.3v2.07h-1.3zM76.7 279.75h1.3v2.07h-1.3zM79.3 279.75h1.3v2.07h-1.3zM81.9 273.54h1.3v2.07h-1.3zM81.9 275.61h1.3v2.07h-1.3zM85.8 279.75h1.3v2.07h-1.3zM91 292.17h1.3v2.07h-1.3zM92.3 279.75h1.3v2.07h-1.3zM92.3 288.03h1.3v2.07h-1.3zM98.8 285.96h1.3v2.07h-1.3zM110.5 273.54h1.3v2.07h-1.3zM111.8 285.96h1.3v2.07h-1.3zM122.2 290.1h1.3v2.07h-1.3zM126.1 277.68h1.3v2.07h-1.3zM128.7 290.1h1.3v2.07h-1.3zM131.3 290.1h1.3v2.07h-1.3zM133.9 288.03h1.3v2.07h-1.3zM153.4 292.17h1.3v2.07h-1.3zM156 281.82h1.3v2.07h-1.3zM159.9 292.17h1.3v2.07h-1.3zM166.4 273.54h1.3v2.07h-1.3zM178.1 285.96h1.3v2.07h-1.3zM195 288.03h1.3v2.07h-1.3zM209.3 292.17h1.3v2.07h-1.3zM227.5 281.82h1.3v2.07h-1.3zM232.7 269.4h1.3v2.07h-1.3zM241.8 292.17h1.3v2.07h-1.3zM245.7 269.4h1.3v2.07h-1.3zM293.8 281.82h1.3v2.07h-1.3zM325 279.75h1.3v2.07h-1.3zM326.3 281.82h1.3v2.07h-1.3zM326.3 292.17h1.3v2.07h-1.3zM347.1 285.96h1.3v2.07h-1.3zM364 281.82h1.3v2.07h-1.3zM369.2 292.17h1.3v2.07h-1.3zM380.9 292.17h1.3v2.07h-1.3zM417.3 292.17h1.3v2.07h-1.3zM438.1 275.61h1.3v2.07h-1.3zM465.4 271.47h1.3v2.07h-1.3zM522.6 283.89h1.3v2.07h-1.3zM533 273.54h1.3v2.07h-1.3zM546 271.47h1.3v2.07h-1.3zM574.6 279.75h1.3v2.07h-1.3zM592.8 288.03h1.3v2.07h-1.3zM616.2 288.03h1.3v2.07h-1.3zM620.1 283.89h1.3v2.07h-1.3zM625.3 281.82h1.3v2.07h-1.3zM633.1 281.82h1.3v2.07h-1.3zM638.3 283.89h1.3v2.07h-1.3z" fill="#a8cbe8"/><path d="M36.4 281.82h1.3v2.07h-1.3zM39 283.89h1.3v2.07h-1.3zM66.3 271.47h1.3v2.07h-1.3zM68.9 269.4h1.3v2.07h-1.3zM75.4 269.4h1.3v2.07h-1.3zM80.6 279.75h1.3v2.07h-1.3zM92.3 292.17h1.3v2.07h-1.3zM120.9 285.96h1.3v2.07h-1.3zM126.1 288.03h1.3v2.07h-1.3zM133.9 273.54h1.3v2.07h-1.3zM146.9 281.82h1.3v2.07h-1.3zM175.5 283.89h1.3v2.07h-1.3zM213.2 275.61h1.3v2.07h-1.3zM271.7 273.54h1.3v2.07h-1.3zM279.5 290.1h1.3v2.07h-1.3zM369.2 275.61h1.3v2.07h-1.3zM475.8 292.17h1.3v2.07h-1.3zM483.6 271.47h1.3v2.07h-1.3zM497.9 281.82h1.3v2.07h-1.3zM512.2 285.96h1.3v2.07h-1.3zM547.3 281.82h1.3v2.07h-1.3zM587.6 288.03h1.3v2.07h-1.3zM600.6 277.68h1.3v2.07h-1.3zM621.4 290.1h1.3v2.07h-1.3zM686.4 283.89h1.3v2.07h-1.3z" fill="#f7bea4"/><path d="M40.3 290.1h1.3v2.07h-1.3zM74.1 271.47h1.3v2.07h-1.3zM75.4 271.47h1.3v2.07h-1.3zM79.3 271.47h1.3v2.07h-1.3zM85.8 288.03h1.3v2.07h-1.3zM101.4 292.17h1.3v2.07h-1.3zM132.6 275.61h1.3v2.07h-1.3zM292.5 277.68h1.3v2.07h-1.3zM315.9 279.75h1.3v2.07h-1.3zM556.4 273.54h1.3v2.07h-1.3zM673.4 275.61h1.3v2.07h-1.3zM26 292.4h1.3v1.6h-1.3zM36.4 292.4h1.3v1.6h-1.3zM62.4 292.4h1.3v1.6h-1.3zM162.5 292.4h1.3v1.6h-1.3zM179.4 292.4h1.3v1.6h-1.3zM217.1 292.4h1.3v1.6h-1.3zM226.2 292.4h1.3v1.6h-1.3zM231.4 292.4h1.3v1.6h-1.3zM258.7 292.4h1.3v1.6h-1.3zM371.8 292.4h1.3v1.6h-1.3zM417.3 292.4h1.3v1.6h-1.3zM478.4 292.4h1.3v1.6h-1.3zM510.9 292.4h1.3v1.6h-1.3zM514.8 292.4h1.3v1.6h-1.3zM518.7 292.4h1.3v1.6h-1.3zM561.6 292.4h1.3v1.6h-1.3zM573.3 292.4h1.3v1.6h-1.3zM587.6 292.4h1.3v1.6h-1.3zM591.5 292.4h1.3v1.6h-1.3zM681.2 292.4h1.3v1.6h-1.3z" fill="#f4a582"/><path d="M50.7 271.47h1.3v2.07h-1.3zM68.9 279.75h1.3v2.07h-1.3zM70.2 277.68h1.3v2.07h-1.3zM92.3 277.68h1.3v2.07h-1.3zM97.5 269.4h1.3v2.07h-1.3zM100.1 292.17h1.3v2.07h-1.3zM109.2 273.54h1.3v2.07h-1.3zM120.9 269.4h1.3v2.07h-1.3zM126.1 285.96h1.3v2.07h-1.3zM133.9 285.96h1.3v2.07h-1.3zM78 292.4h1.3v1.6h-1.3zM256.1 292.4h1.3v1.6h-1.3zM288.6 292.4h1.3v1.6h-1.3zM299 292.4h1.3v1.6h-1.3zM302.9 292.4h1.3v1.6h-1.3zM325 292.4h1.3v1.6h-1.3zM344.5 292.4h1.3v1.6h-1.3zM399.1 292.4h1.3v1.6h-1.3zM403 292.4h1.3v1.6h-1.3zM408.2 292.4h1.3v1.6h-1.3zM505.7 292.4h1.3v1.6h-1.3zM525.2 292.4h1.3v1.6h-1.3zM544.7 292.4h1.3v1.6h-1.3zM562.9 292.4h1.3v1.6h-1.3zM566.8 292.4h1.3v1.6h-1.3zM638.3 292.4h1.3v1.6h-1.3z" fill="#7fb3dc"/><path d="M45.5 292.4h1.3v1.6h-1.3zM87.1 292.4h1.3v1.6h-1.3zM92.3 292.4h1.3v1.6h-1.3zM111.8 292.4h1.3v1.6h-1.3zM153.4 292.4h1.3v1.6h-1.3zM180.7 292.4h1.3v1.6h-1.3zM239.2 292.4h1.3v1.6h-1.3zM252.2 292.4h1.3v1.6h-1.3zM263.9 292.4h1.3v1.6h-1.3zM286 292.4h1.3v1.6h-1.3zM334.1 292.4h1.3v1.6h-1.3zM375.7 292.4h1.3v1.6h-1.3zM429 292.4h1.3v1.6h-1.3zM559 292.4h1.3v1.6h-1.3zM672.1 292.4h1.3v1.6h-1.3zM673.4 292.4h1.3v1.6h-1.3zM682.5 292.4h1.3v1.6h-1.3z" fill="#f6bda2"/><path d="M84.5 292.4h1.3v1.6h-1.3zM143 292.4h1.3v1.6h-1.3zM144.3 292.4h1.3v1.6h-1.3zM145.6 292.4h1.3v1.6h-1.3zM188.5 292.4h1.3v1.6h-1.3zM202.8 292.4h1.3v1.6h-1.3zM208 292.4h1.3v1.6h-1.3zM224.9 292.4h1.3v1.6h-1.3zM232.7 292.4h1.3v1.6h-1.3zM236.6 292.4h1.3v1.6h-1.3zM358.8 292.4h1.3v1.6h-1.3zM419.9 292.4h1.3v1.6h-1.3zM488.8 292.4h1.3v1.6h-1.3zM594.1 292.4h1.3v1.6h-1.3zM600.6 292.4h1.3v1.6h-1.3zM622.7 292.4h1.3v1.6h-1.3zM639.6 292.4h1.3v1.6h-1.3zM655.2 292.4h1.3v1.6h-1.3zM668.2 292.4h1.3v1.6h-1.3z" fill="#a4c9e6"/><path d="M101.4 292.4h1.3v1.6h-1.3zM119.6 292.4h1.3v1.6h-1.3zM192.4 292.4h1.3v1.6h-1.3zM228.8 292.4h1.3v1.6h-1.3zM265.2 292.4h1.3v1.6h-1.3zM295.1 292.4h1.3v1.6h-1.3zM393.9 292.4h1.3v1.6h-1.3zM418.6 292.4h1.3v1.6h-1.3zM443.3 292.4h1.3v1.6h-1.3zM445.9 292.4h1.3v1.6h-1.3zM486.2 292.4h1.3v1.6h-1.3zM501.8 292.4h1.3v1.6h-1.3zM564.2 292.4h1.3v1.6h-1.3zM608.4 292.4h1.3v1.6h-1.3zM661.7 292.4h1.3v1.6h-1.3zM663 292.4h1.3v1.6h-1.3z" fill="#ec7a5c"/><rect x="27" y="271" width="1.3" height="8" fill="#1f5a9a" /><rect x="45.6" y="272" width="1.2" height="9" fill="#2a6aa8" /><rect x="63.2" y="276" width="1.6" height="14" fill="#b8182e" /><rect x="62" y="288" width="1.2" height="6" fill="#d0505a" /><rect x="78" y="281" width="1.3" height="13" fill="#1f5a9a" /><rect x="78" y="271" width="1.2" height="8" fill="#5a96c8" /><rect x="116.6" y="281" width="1.2" height="13" fill="#3a78b4" /><rect x="122.2" y="271" width="1.5" height="12" fill="#c23a40" /><rect x="122.2" y="283" width="1.5" height="11" fill="#e08a78" /><rect x="125.4" y="272" width="1.2" height="20" fill="#4a86c0" /><rect x="31" y="286" width="1.2" height="8" fill="#4a86c0" /><rect x="129.6" y="274" width="1.2" height="12" fill="#6aa2d0" /><rect x="119.8" y="271" width="1.2" height="23" fill="#20406a" /></g><rect x="26" y="294.2" width="664" height="0.9" fill="#303030" /><rect x="26" y="304.6" width="664" height="0.8" fill="#c6c6c6" /><rect x="26" y="308.4" width="664" height="0.8" fill="#c6c6c6" /><rect x="26" y="312.5" width="664" height="0.8" fill="#c6c6c6" /><rect x="26" y="317.8" width="664" height="0.8" fill="#c6c6c6" /><rect x="26" y="323.2" width="664" height="0.8" fill="#c6c6c6" /><path d="M26 328.9L26.0 327.35L27.7 327.34L29.4 327.35L31.1 327.33L32.8 327.33L34.5 327.35L36.2 327.35L37.9 327.05L39.6 327.35L41.3 327.35L43.0 325.91L44.7 327.35L46.4 327.05L48.1 327.35L49.8 327.32L51.5 327.35L53.2 327.32L54.9 326.93L56.6 327.35L58.3 327.25L60.0 327.31L61.7 327.35L63.4 327.23L65.1 327.34L66.8 327.35L68.5 327.35L70.2 326.94L71.9 327.35L73.6 327.27L75.3 326.88L77.0 327.28L78.7 326.63L80.4 327.35L82.1 327.15L83.8 327.35L85.5 326.53L87.2 326.88L88.9 327.35L90.6 327.35L92.3 327.35L94.0 326.26L95.7 327.35L97.4 327.33L99.1 327.35L100.8 327.35L102.5 327.35L104.2 327.35L105.9 327.34L107.6 327.34L109.3 326.74L111.0 327.30L112.7 326.58L114.4 326.98L116.1 325.97L117.8 327.31L119.5 327.35L121.2 326.96L122.9 326.27L124.6 326.74L126.3 327.34L128.0 327.28L129.7 327.35L131.4 327.06L133.1 327.34L134.8 327.35L136.5 327.35L138.2 326.99L139.9 325.98L141.6 327.35L143.3 327.15L145.0 327.35L146.7 327.35L148.4 327.35L150.1 327.21L151.8 326.91L153.5 327.35L155.2 327.33L156.9 327.35L158.6 327.27L160.3 327.35L162.0 326.87L163.7 326.09L165.4 327.35L167.1 325.87L168.8 327.35L170.5 327.35L172.2 327.33L173.9 327.35L175.6 327.35L177.3 327.35L179.0 327.33L180.7 327.35L182.4 327.35L184.1 326.93L185.8 327.35L187.5 326.32L189.2 326.79L190.9 327.35L192.6 327.35L194.3 327.35L196.0 327.32L197.7 327.34L199.4 327.34L201.1 327.33L202.8 326.49L204.5 327.35L206.2 327.35L207.9 327.27L209.6 327.35L211.3 327.35L213.0 326.12L214.7 327.35L216.4 327.34L218.1 327.35L219.8 327.35L221.5 327.34L223.2 327.35L224.9 327.33L226.6 327.33L228.3 327.35L230.0 327.33L231.7 327.35L233.4 327.30L235.1 327.35L236.8 327.28L238.5 327.25L240.2 327.35L241.9 327.35L243.6 327.31L245.3 326.28L247.0 327.35L248.7 327.35L250.4 327.34L252.1 327.35L253.8 327.35L255.5 327.35L257.2 327.35L258.9 327.34L260.6 327.35L262.3 327.35L264.0 327.20L265.7 327.35L267.4 327.34L269.1 327.26L270.8 327.35L272.5 327.35L274.2 327.14L275.9 327.35L277.6 327.35L279.3 327.35L281.0 327.29L282.7 327.35L284.4 327.35L286.1 327.35L287.8 327.06L289.5 327.35L291.2 326.98L292.9 327.35L294.6 327.35L296.3 327.32L298.0 326.85L299.7 327.35L301.4 327.35L303.1 327.35L304.8 327.35L306.5 327.35L308.2 327.13L309.9 327.04L311.6 327.35L313.3 327.35L315.0 327.13L316.7 327.32L318.4 327.13L320.1 327.35L321.8 327.35L323.5 327.35L325.2 327.16L326.9 327.35L328.6 327.35L330.3 327.35L332.0 327.35L333.7 327.35L335.4 326.64L337.1 327.35L338.8 327.35L340.5 326.46L342.2 326.88L343.9 326.02L345.6 327.35L347.3 326.40L349.0 326.59L350.7 327.35L352.4 327.24L354.1 327.05L355.8 327.31L357.5 327.35L359.2 327.35L360.9 327.35L362.6 327.35L364.3 327.35L366.0 327.34L367.7 327.35L369.4 327.12L371.1 327.35L372.8 326.75L374.5 327.29L376.2 326.61L377.9 326.79L379.6 326.77L381.3 327.34L383.0 327.35L384.7 327.24L386.4 327.35L388.1 327.35L389.8 327.31L391.5 327.35L393.2 327.35L394.9 326.50L396.6 327.33L398.3 327.35L400.0 327.35L401.7 326.96L403.4 327.35L405.1 327.19L406.8 327.35L408.5 327.35L410.2 327.34L411.9 327.11L413.6 327.35L415.3 327.17L417.0 326.63L418.7 327.13L420.4 327.09L422.1 327.35L423.8 327.33L425.5 326.95L427.2 327.35L428.9 327.35L430.6 327.35L432.3 327.35L434.0 327.35L435.7 327.35L437.4 327.20L439.1 327.35L440.8 327.35L442.5 327.35L444.2 327.35L445.9 327.35L447.6 326.16L449.3 326.99L451.0 327.35L452.7 327.35L454.4 327.35L456.1 327.35L457.8 327.35L459.5 327.32L461.2 327.34L462.9 327.35L464.6 327.35L466.3 327.35L468.0 327.35L469.7 327.34L471.4 327.28L473.1 327.35L474.8 327.35L476.5 327.35L478.2 327.35L479.9 327.33L481.6 327.18L483.3 327.35L485.0 327.15L486.7 327.33L488.4 327.35L490.1 327.35L491.8 327.35L493.5 327.29L495.2 327.35L496.9 327.29L498.6 327.35L500.3 327.35L502.0 327.34L503.7 327.29L505.4 327.35L507.1 327.35L508.8 327.35L510.5 326.88L512.2 326.52L513.9 327.35L515.6 326.78L517.3 327.17L519.0 327.35L520.7 327.35L522.4 327.35L524.1 327.12L525.8 327.31L527.5 326.84L529.2 327.17L530.9 327.31L532.6 327.26L534.3 327.34L536.0 327.35L537.7 327.34L539.4 327.35L541.1 327.35L542.8 327.20L544.5 327.35L546.2 327.35L547.9 327.35L549.6 326.87L551.3 327.35L553.0 327.35L554.7 327.03L556.4 327.35L558.1 327.02L559.8 327.31L561.5 327.05L563.2 326.38L564.9 327.34L566.6 327.15L568.3 327.35L570.0 327.21L571.7 327.35L573.4 327.28L575.1 327.35L576.8 327.24L578.5 326.53L580.2 327.35L581.9 327.35L583.6 327.34L585.3 327.08L587.0 327.35L588.7 327.35L590.4 327.35L592.1 327.33L593.8 327.23L595.5 327.35L597.2 327.35L598.9 327.35L600.6 327.35L602.3 327.35L604.0 327.35L605.7 327.35L607.4 326.18L609.1 327.35L610.8 327.24L612.5 327.35L614.2 327.30L615.9 327.23L617.6 327.31L619.3 327.35L621.0 327.35L622.7 327.32L624.4 326.78L626.1 327.35L627.8 327.35L629.5 327.24L631.2 326.66L632.9 327.35L634.6 327.35L636.3 327.27L638.0 327.35L639.7 327.35L641.4 327.35L643.1 327.34L644.8 327.35L646.5 327.35L648.2 327.30L649.9 326.37L651.6 327.35L653.3 327.29L655.0 327.35L656.7 326.99L658.4 327.34L660.1 327.35L661.8 327.35L663.5 327.35L665.2 327.35L666.9 327.35L668.6 327.35L670.3 327.35L672.0 327.35L673.7 327.20L675.4 327.35L677.1 325.96L678.8 327.35L680.5 327.34L682.2 327.35L683.9 327.06L685.6 327.09L687.3 327.34L689.0 327.35L689.7 328.9z" fill="#a957b0"/><rect x="29.4" y="320" width="1.1" height="8" fill="#b050a8" /><rect x="45.6" y="319" width="1.1" height="9" fill="#b050a8" /><rect x="62.4" y="310.4" width="2.8" height="17.6" fill="#b02858" /><rect x="63.2" y="316" width="1.6" height="12" fill="#c070b8" /><rect x="78" y="310" width="1.3" height="18" fill="#2858a8" /><rect x="117.2" y="313" width="1.3" height="15" fill="#2858a8" /><rect x="119.8" y="314.2" width="1.5" height="13.8" fill="#b02858" /><rect x="122.4" y="320" width="1.3" height="8" fill="#c060a0" /><rect x="125.4" y="307.2" width="1.3" height="20.8" fill="#2858a8" /><rect x="129.8" y="321" width="1.2" height="7" fill="#4868c0" /><rect x="34" y="324.6" width="1" height="3.4" fill="#3868b8" /><rect x="58.6" y="324" width="1" height="4" fill="#b050a8" /><rect x="71" y="324.6" width="1.2" height="3.4" fill="#b03060" /><rect x="96" y="325.4" width="1" height="2.6" fill="#c03050" /><rect x="142" y="325.4" width="1" height="2.6" fill="#c03050" /><rect x="152" y="325.6" width="1" height="1.6" fill="#3060c0" /><rect x="185" y="325.6" width="1" height="1.6" fill="#c03060" /><rect x="216" y="325.6" width="1" height="1.6" fill="#3060c0" /><rect x="262" y="325.6" width="1" height="1.6" fill="#c03060" /><rect x="330" y="325.6" width="1" height="1.6" fill="#3060c0" /><rect x="395" y="325.6" width="1" height="1.6" fill="#3060c0" /><rect x="460" y="325.6" width="1" height="1.6" fill="#3060c0" /><rect x="540" y="325.6" width="1" height="1.6" fill="#3060c0" /><rect x="600" y="325.6" width="1" height="1.6" fill="#c03060" /><rect x="655" y="325.6" width="1" height="1.6" fill="#3060c0" /><rect x="668" y="325.6" width="1" height="1.6" fill="#3060c0" /><rect x="681" y="325.6" width="1" height="1.6" fill="#c03060" /><rect x="26.6" y="377.5" width="5" height="4.2" fill="#ffd9d9" /><rect x="77.8" y="394" width="4.2" height="4" fill="#ffe0dc" /><rect x="124.8" y="375.2" width="3.6" height="25" fill="#ffd2d2" /><rect x="121.6" y="391" width="2.4" height="9" fill="#ffe6e2" /><rect x="116.4" y="396" width="3.4" height="4.4" fill="#ffe6e2" /><path d="M330.5 429.0h3v3h-3zM248.5 429.0h3v3h-3zM504.9 429.0h8v3h-8zM129.4 414.1h4.5v3h-4.5zM359.0 429.0h3v3h-3zM630.4 415.3h8v3h-8zM611.1 426.5h6v3h-6zM558.4 426.5h3v3h-3zM615.2 426.5h3v3h-3zM660.0 424.0h6v3h-6zM31.4 411.3h3v3h-3zM355.4 424.0h8v3h-8zM71.3 415.3h3v3h-3zM486.9 424.0h3v3h-3zM203.6 426.5h3v3h-3zM105.8 426.8h4.5v3h-4.5zM132.4 423.1h6v3h-6zM582.2 424.2h3v3h-3zM596.5 426.5h4.5v3h-4.5zM290.5 429.0h6v3h-6zM26.4 411.4h8v3h-8zM203.3 424.0h3v3h-3zM42.7 430.1h8v3h-8zM353.1 424.0h8v3h-8zM452.1 426.5h6v3h-6zM117.5 417.3h6v3h-6zM45.3 429.3h4.5v3h-4.5zM674.6 426.5h4.5v3h-4.5zM543.3 418.2h6v3h-6zM213.5 424.0h6v3h-6zM483.8 429.0h8v3h-8zM412.8 429.3h8v3h-8zM255.5 429.0h3v3h-3zM132.7 429.4h3v3h-3zM159.4 426.5h3v3h-3zM139.8 421.2h6v3h-6zM378.2 426.1h8v3h-8zM384.0 424.0h6v3h-6zM68.3 415.4h3v3h-3zM91.5 420.9h8v3h-8zM610.6 426.5h4.5v3h-4.5zM603.9 414.7h8v3h-8zM602.0 424.0h8v3h-8zM293.5 424.0h3v3h-3zM68.7 418.2h8v3h-8zM43.1 429.2h3v3h-3zM540.9 424.0h8v3h-8zM674.7 429.3h4.5v3h-4.5zM322.9 424.0h3v3h-3zM105.0 428.0h6v3h-6zM94.2 411.9h4.5v3h-4.5zM269.0 429.0h4.5v3h-4.5zM36.2 418.9h3v3h-3zM657.9 426.5h8v3h-8zM586.1 429.0h6v3h-6zM113.0 412.6h6v3h-6zM543.1 421.9h6v3h-6zM662.4 426.5h6v3h-6zM349.4 418.8h8v3h-8zM163.4 429.0h8v3h-8zM315.3 424.0h4.5v3h-4.5zM234.8 411.4h4.5v3h-4.5zM646.7 429.0h8v3h-8zM164.9 429.0h8v3h-8zM335.5 430.5h3v3h-3zM330.7 424.0h4.5v3h-4.5zM33.1 417.1h4.5v3h-4.5zM242.1 426.2h8v3h-8zM453.0 424.0h6v3h-6zM262.1 417.4h4.5v3h-4.5zM551.8 424.0h6v3h-6zM476.0 429.0h8v3h-8zM623.3 429.0h8v3h-8zM340.9 429.0h6v3h-6zM515.1 412.1h3v3h-3zM406.5 424.0h8v3h-8zM114.5 415.5h4.5v3h-4.5zM619.5 415.0h8v3h-8zM32.6 425.0h6v3h-6zM352.4 411.7h8v3h-8zM313.7 424.0h3v3h-3zM612.0 418.8h4.5v3h-4.5zM526.5 429.0h4.5v3h-4.5zM667.2 414.1h4.5v3h-4.5zM458.3 426.5h8v3h-8zM49.7 421.6h4.5v3h-4.5zM324.6 424.0h4.5v3h-4.5zM445.0 429.0h4.5v3h-4.5zM572.6 426.5h8v3h-8zM342.9 429.0h3v3h-3zM363.0 429.0h6v3h-6zM379.1 426.5h6v3h-6zM638.7 426.5h3v3h-3zM193.5 429.0h8v3h-8zM641.7 429.0h4.5v3h-4.5zM389.6 411.3h3v3h-3zM56.8 411.5h8v3h-8zM261.5 424.5h3v3h-3zM490.2 424.0h4.5v3h-4.5zM360.3 429.8h4.5v3h-4.5zM616.0 426.5h3v3h-3zM132.0 423.6h8v3h-8zM217.1 429.0h3v3h-3zM63.5 418.6h4.5v3h-4.5zM297.5 426.5h4.5v3h-4.5zM68.0 412.6h6v3h-6zM304.3 426.5h4.5v3h-4.5zM666.3 426.5h3v3h-3zM367.2 429.0h3v3h-3zM276.3 418.4h3v3h-3zM372.5 426.6h8v3h-8zM611.1 429.0h8v3h-8zM557.1 429.0h8v3h-8zM64.4 424.3h8v3h-8zM565.8 411.8h6v3h-6zM74.8 420.3h4.5v3h-4.5zM678.6 424.0h3v3h-3zM488.6 429.0h6v3h-6zM529.1 414.6h6v3h-6zM362.1 421.8h6v3h-6zM239.1 414.3h6v3h-6zM243.7 429.0h6v3h-6zM624.0 423.5h8v3h-8zM557.8 426.5h8v3h-8zM323.3 429.0h3v3h-3zM403.4 426.5h3v3h-3zM342.9 424.0h4.5v3h-4.5zM574.7 424.0h6v3h-6zM439.9 417.4h4.5v3h-4.5zM350.3 423.4h6v3h-6zM332.8 424.0h4.5v3h-4.5zM520.4 426.5h3v3h-3zM420.7 426.5h4.5v3h-4.5zM171.2 429.0h3v3h-3zM96.9 411.7h8v3h-8zM648.5 429.0h3v3h-3zM437.8 426.5h3v3h-3zM218.9 424.0h3v3h-3zM181.6 429.0h4.5v3h-4.5zM426.8 429.0h6v3h-6zM412.8 424.0h4.5v3h-4.5zM119.5 423.5h6v3h-6zM640.6 429.0h3v3h-3zM26.9 430.0h4.5v3h-4.5zM369.5 429.7h4.5v3h-4.5zM133.9 418.3h4.5v3h-4.5zM584.4 424.0h8v3h-8zM39.6 430.4h3v3h-3zM514.6 429.4h6v3h-6zM383.9 421.1h4.5v3h-4.5zM87.0 411.4h3v3h-3zM328.2 426.5h6v3h-6zM90.7 424.8h6v3h-6zM120.5 411.7h3v3h-3zM586.6 426.5h4.5v3h-4.5zM142.6 429.0h6v3h-6zM486.8 429.0h8v3h-8zM376.5 429.0h8v3h-8zM173.6 426.5h4.5v3h-4.5zM119.2 414.9h8v3h-8zM271.9 429.0h3v3h-3zM114.9 429.7h6v3h-6zM363.6 426.5h4.5v3h-4.5zM648.0 429.0h6v3h-6zM257.8 424.0h6v3h-6zM502.2 424.8h8v3h-8zM674.3 421.3h3v3h-3zM516.1 415.5h6v3h-6zM62.4 412.6h8v3h-8zM180.1 419.0h3v3h-3zM162.8 424.0h8v3h-8zM423.1 429.0h8v3h-8zM596.1 420.4h8v3h-8zM287.2 418.1h8v3h-8zM250.4 424.0h8v3h-8zM681.5 426.5h8v3h-8zM343.6 426.5h8v3h-8zM187.3 424.7h3v3h-3zM645.4 426.5h4.5v3h-4.5zM281.0 426.5h6v3h-6zM145.6 426.5h6v3h-6zM586.1 424.0h6v3h-6zM471.9 424.5h6v3h-6zM631.4 424.0h3v3h-3zM586.0 415.0h8v3h-8zM171.8 424.0h6v3h-6zM539.1 424.0h6v3h-6zM269.4 426.5h3v3h-3zM455.7 427.2h3v3h-3zM137.0 415.3h3v3h-3zM535.6 426.5h3v3h-3zM585.9 429.0h6v3h-6zM468.1 429.0h3v3h-3zM433.5 426.5h3v3h-3zM102.9 426.3h3v3h-3zM284.8 429.0h3v3h-3zM183.5 429.0h3v3h-3zM625.4 424.0h6v3h-6zM86.1 411.2h6v3h-6zM233.6 424.0h3v3h-3zM436.3 412.8h3v3h-3zM90.5 430.2h3v3h-3zM458.7 424.6h3v3h-3zM589.6 411.4h3v3h-3zM167.1 426.5h8v3h-8zM642.5 426.5h3v3h-3zM244.0 429.0h4.5v3h-4.5zM327.5 424.0h4.5v3h-4.5zM626.1 429.0h3v3h-3zM579.5 429.0h4.5v3h-4.5zM564.6 424.8h4.5v3h-4.5zM327.2 426.5h6v3h-6zM412.3 426.3h3v3h-3zM67.6 427.3h8v3h-8zM312.7 423.7h8v3h-8zM375.7 418.3h4.5v3h-4.5zM534.9 421.5h4.5v3h-4.5zM455.2 429.0h4.5v3h-4.5zM451.8 414.1h8v3h-8zM552.4 414.3h3v3h-3zM363.0 426.5h4.5v3h-4.5zM297.4 424.0h3v3h-3zM488.5 426.5h8v3h-8zM48.6 427.8h4.5v3h-4.5zM663.4 429.0h8v3h-8zM600.3 424.0h8v3h-8zM149.4 424.0h8v3h-8zM566.3 429.0h6v3h-6zM500.1 429.0h4.5v3h-4.5zM422.7 426.5h4.5v3h-4.5z" fill="#f0e8f7" fill-opacity="0.42"/><path d="M126.8 416.5h3v3.5h-3zM71.6 414.4h6v3.5h-6zM65.4 418.1h4.5v3.5h-4.5zM90.1 414.0h6v3.5h-6zM84.9 419.7h3v3.5h-3zM75.8 426.1h6v3.5h-6zM78.0 430.5h3v3.5h-3zM102.0 428.3h6v3.5h-6zM114.2 430.4h6v3.5h-6zM101.0 418.1h4.5v3.5h-4.5zM100.5 412.4h6v3.5h-6zM65.4 419.5h6v3.5h-6zM82.5 419.0h6v3.5h-6zM122.6 418.9h6v3.5h-6zM97.2 423.1h6v3.5h-6zM119.9 424.8h4.5v3.5h-4.5zM49.3 412.3h6v3.5h-6zM47.4 414.9h6v3.5h-6zM100.8 425.2h6v3.5h-6zM86.7 428.7h4.5v3.5h-4.5zM32.7 417.6h3v3.5h-3zM71.2 415.7h6v3.5h-6zM40.9 429.2h6v3.5h-6zM53.9 429.7h4.5v3.5h-4.5zM126.8 425.9h4.5v3.5h-4.5zM71.9 419.6h6v3.5h-6zM96.3 426.8h4.5v3.5h-4.5zM119.5 423.9h6v3.5h-6zM86.1 412.3h4.5v3.5h-4.5zM112.2 414.6h4.5v3.5h-4.5zM51.8 419.4h6v3.5h-6zM85.3 421.3h3v3.5h-3zM97.2 430.0h6v3.5h-6zM34.2 417.4h3v3.5h-3zM134.9 422.0h4.5v3.5h-4.5zM64.8 412.3h4.5v3.5h-4.5zM117.3 427.7h3v3.5h-3zM72.9 417.1h6v3.5h-6zM109.0 413.3h6v3.5h-6zM89.7 411.6h3v3.5h-3zM72.5 424.5h3v3.5h-3zM122.3 428.7h6v3.5h-6zM70.9 421.7h3v3.5h-3zM118.9 426.8h6v3.5h-6zM100.8 424.9h6v3.5h-6zM90.0 418.4h6v3.5h-6zM82.6 425.1h4.5v3.5h-4.5zM107.2 413.0h3v3.5h-3zM100.8 429.1h4.5v3.5h-4.5zM82.9 418.9h6v3.5h-6zM35.7 428.3h3v3.5h-3zM40.9 418.8h6v3.5h-6zM76.7 422.4h3v3.5h-3zM127.4 423.1h4.5v3.5h-4.5zM47.1 416.6h6v3.5h-6zM84.1 412.8h4.5v3.5h-4.5zM33.2 419.2h3v3.5h-3zM96.0 413.3h3v3.5h-3zM125.0 430.7h4.5v3.5h-4.5zM55.2 422.3h3v3.5h-3zM112.1 427.4h3v3.5h-3zM96.4 430.6h4.5v3.5h-4.5zM126.4 415.4h6v3.5h-6zM113.9 414.7h4.5v3.5h-4.5zM129.4 416.3h4.5v3.5h-4.5zM115.6 428.9h6v3.5h-6zM120.4 430.0h6v3.5h-6zM46.2 428.8h3v3.5h-3zM119.1 423.0h4.5v3.5h-4.5zM54.9 428.3h3v3.5h-3zM108.6 430.9h6v3.5h-6zM76.2 421.8h6v3.5h-6zM71.8 428.5h3v3.5h-3zM118.7 418.1h6v3.5h-6zM117.7 423.8h3v3.5h-3zM103.5 423.0h4.5v3.5h-4.5zM99.8 413.0h3v3.5h-3zM38.2 427.8h6v3.5h-6zM109.3 418.7h4.5v3.5h-4.5zM48.2 428.9h3v3.5h-3zM56.1 413.5h3v3.5h-3zM88.2 423.1h4.5v3.5h-4.5zM130.3 427.1h6v3.5h-6zM110.2 430.4h4.5v3.5h-4.5zM87.7 421.3h3v3.5h-3zM130.9 419.1h4.5v3.5h-4.5zM91.3 427.8h3v3.5h-3zM131.8 430.6h3v3.5h-3zM117.1 420.4h6v3.5h-6zM31.5 413.0h4.5v3.5h-4.5zM54.7 426.3h4.5v3.5h-4.5zM90.3 425.0h3v3.5h-3zM90.8 413.8h4.5v3.5h-4.5zM122.0 414.2h4.5v3.5h-4.5zM117.3 429.1h3v3.5h-3zM109.3 420.4h4.5v3.5h-4.5zM69.4 417.9h3v3.5h-3zM109.9 424.8h3v3.5h-3zM101.9 418.9h6v3.5h-6zM68.0 424.5h3v3.5h-3zM87.4 425.5h3v3.5h-3zM46.2 424.1h3v3.5h-3zM42.9 426.3h3v3.5h-3zM56.0 414.5h4.5v3.5h-4.5zM64.8 414.9h6v3.5h-6zM40.6 425.8h3v3.5h-3zM123.8 424.6h6v3.5h-6zM39.4 417.5h4.5v3.5h-4.5zM121.8 414.5h3v3.5h-3zM133.5 415.7h4.5v3.5h-4.5zM97.6 426.7h4.5v3.5h-4.5zM91.2 416.6h6v3.5h-6zM60.6 422.9h3v3.5h-3zM87.1 426.6h6v3.5h-6zM67.0 419.1h3v3.5h-3zM104.2 419.8h6v3.5h-6zM94.4 422.3h6v3.5h-6zM47.1 428.5h3v3.5h-3zM120.8 416.3h3v3.5h-3zM84.6 424.2h6v3.5h-6z" fill="#eee6f6" fill-opacity="0.5"/><rect x="26.4" y="420" width="5" height="4" fill="#ffd4d8" /><rect x="26.4" y="424" width="5" height="5" fill="#ffa8c0" /><rect x="26.4" y="429" width="5" height="6" fill="#ffd0d0" /><rect x="63.2" y="421.6" width="4.6" height="4.5" fill="#d22a90" /><rect x="63.2" y="426" width="4.6" height="4" fill="#e8489a" /><rect x="63.2" y="430" width="4.6" height="5" fill="#f890b0" /><rect x="77.8" y="422" width="3.6" height="7" fill="#ffd8dc" /><rect x="77.8" y="429" width="3.6" height="6" fill="#ffc4c8" /><rect x="122" y="410" width="3.2" height="12" fill="#ffd2d6" /><rect x="122" y="422" width="2.2" height="12" fill="#ffe0e0" /><rect x="45" y="429" width="4" height="3" fill="#ffe4dc" /><rect x="117" y="418" width="2" height="14" fill="#ffe6e6" /><rect x="76.1" y="441.9" width="55.8" height="10.8" fill="#ff8e8e" /><rect x="120" y="50" width="1" height="417" fill="#a8d070" style="mix-blend-mode:multiply"/><rect x="231" y="50" width="1" height="417" fill="#9cc860" style="mix-blend-mode:multiply"/><rect x="342" y="50" width="1" height="417" fill="#acd478" style="mix-blend-mode:multiply"/><rect x="452" y="50" width="1" height="417" fill="#9cc858" style="mix-blend-mode:multiply"/><rect x="563" y="50" width="1" height="417" fill="#c4e0a0" style="mix-blend-mode:multiply"/><rect x="674" y="50" width="1" height="417" fill="#c8e2a8" style="mix-blend-mode:multiply"/><rect x="247" y="55" width="1" height="412" fill="#b0b0ff" style="mix-blend-mode:multiply"/><rect x="248" y="55" width="1" height="412" fill="#ececff" style="mix-blend-mode:multiply"/><path d="M242.8 45.2h9.4l-4.6 9.9z" fill="#000080"/><text x="121.9" y="463.06" font-size="7.1" fill="#000" stroke="#000" stroke-width="0.15" textLength="14" lengthAdjust="spacingAndGlyphs" >10:00</text><text x="232.9" y="463.06" font-size="7.1" fill="#000" stroke="#000" stroke-width="0.15" textLength="14" lengthAdjust="spacingAndGlyphs" >10:10</text><text x="343.9" y="463.06" font-size="7.1" fill="#000" stroke="#000" stroke-width="0.15" textLength="14" lengthAdjust="spacingAndGlyphs" >10:20</text><text x="453.9" y="463.06" font-size="7.1" fill="#000" stroke="#000" stroke-width="0.15" textLength="14" lengthAdjust="spacingAndGlyphs" >10:30</text><text x="564.9" y="463.06" font-size="7.1" fill="#000" stroke="#000" stroke-width="0.15" textLength="14" lengthAdjust="spacingAndGlyphs" >10:40</text><text x="675.9" y="463.06" font-size="7.1" fill="#000" stroke="#000" stroke-width="0.15" textLength="14" lengthAdjust="spacingAndGlyphs" >10:50</text><text x="26" y="63.94" font-size="6.5" fill="#000" stroke="#000" stroke-width="0.13" textLength="40" lengthAdjust="spacingAndGlyphs" >Artifact Intensity</text><text x="26" y="95.34" font-size="6.5" fill="#000" stroke="#000" stroke-width="0.13" textLength="74.4" lengthAdjust="spacingAndGlyphs" >Seizure Probability (P14), 0 - 1</text><text x="26" y="113.34" font-size="6.5" fill="#000" stroke="#000" stroke-width="0.13" textLength="219.4" lengthAdjust="spacingAndGlyphs" >Spikes &gt;=3 per ten seconds (blue=left, red=right, yellow=L&amp;R), green=generalized), 0 - 1</text><text x="26" y="127.34" font-size="6.5" fill="#000" stroke="#000" stroke-width="0.13" textLength="132.6" lengthAdjust="spacingAndGlyphs" >Rhythmicity Spectrogram, Left Hemisphere, 1 - 25 Hz</text><text x="26" y="162.34" font-size="6.5" fill="#000" stroke="#000" stroke-width="0.13" textLength="135.6" lengthAdjust="spacingAndGlyphs" >Rhythmicity Spectrogram, Right Hemisphere, 1 - 25 Hz</text><text x="26" y="198.04" font-size="6.5" fill="#000" stroke="#000" stroke-width="0.13" textLength="113.7" lengthAdjust="spacingAndGlyphs" >FFT Spectrogram, Left Hemisphere, 0 - 20 Hz</text><text x="26" y="232.94" font-size="6.5" fill="#000" stroke="#000" stroke-width="0.13" textLength="117" lengthAdjust="spacingAndGlyphs" >FFT Spectrogram, Right Hemisphere, 0 - 20 Hz</text><text x="26" y="268.54" font-size="6.5" fill="#000" stroke="#000" stroke-width="0.13" textLength="140" lengthAdjust="spacingAndGlyphs" >Asymmetry, Relative Spectrogram, Asym Hemi, 0 - 20 Hz</text><text x="26" y="339.34" font-size="6.5" fill="#000" stroke="#000" stroke-width="0.13" textLength="63.3" lengthAdjust="spacingAndGlyphs" >Heart Rate, 30 - 150 bpm</text><text x="26" y="374.04" font-size="6.5" fill="#000" stroke="#000" stroke-width="0.13" textLength="162" lengthAdjust="spacingAndGlyphs" >VsBaseline, FFT Spectrogram, Left Hemisphere, 0 - 20 Hz, 0 - 20</text><text x="26" y="409.54" font-size="6.5" fill="#000" stroke="#000" stroke-width="0.13" textLength="165" lengthAdjust="spacingAndGlyphs" >VsBaseline, FFT Spectrogram, Right Hemisphere, 0 - 20 Hz, 0 - 20</text><text x="26" y="303.74" font-size="6.5" textLength="116.7" lengthAdjust="spacingAndGlyphs" stroke="#000" stroke-width="0.13">aEEG, <tspan fill="#1c5aa6" stroke="#1c5aa6">Left Hemisphere and</tspan> <tspan fill="#a3124c" stroke="#a3124c">Right Hemisphere</tspan></text><defs><linearGradient id="cb1"><stop offset="0.000" stop-color="#ffffd9"/><stop offset="0.111" stop-color="#ffffd9"/><stop offset="0.111" stop-color="#edf8b1"/><stop offset="0.222" stop-color="#edf8b1"/><stop offset="0.222" stop-color="#c7e9b4"/><stop offset="0.333" stop-color="#c7e9b4"/><stop offset="0.333" stop-color="#7fcdbb"/><stop offset="0.444" stop-color="#7fcdbb"/><stop offset="0.444" stop-color="#41b6c4"/><stop offset="0.556" stop-color="#41b6c4"/><stop offset="0.556" stop-color="#1d91c0"/><stop offset="0.667" stop-color="#1d91c0"/><stop offset="0.667" stop-color="#225ea8"/><stop offset="0.778" stop-color="#225ea8"/><stop offset="0.778" stop-color="#253494"/><stop offset="0.889" stop-color="#253494"/><stop offset="0.889" stop-color="#081d58"/><stop offset="1.000" stop-color="#081d58"/></linearGradient></defs><rect x="602.3" y="121.3" width="37.6" height="6.2" fill="url(#cb1)" stroke="#8a8a8a" stroke-width="0.6"/><defs><linearGradient id="cb2"><stop offset="0.000" stop-color="#ffffd9"/><stop offset="0.111" stop-color="#ffffd9"/><stop offset="0.111" stop-color="#edf8b1"/><stop offset="0.222" stop-color="#edf8b1"/><stop offset="0.222" stop-color="#c7e9b4"/><stop offset="0.333" stop-color="#c7e9b4"/><stop offset="0.333" stop-color="#7fcdbb"/><stop offset="0.444" stop-color="#7fcdbb"/><stop offset="0.444" stop-color="#41b6c4"/><stop offset="0.556" stop-color="#41b6c4"/><stop offset="0.556" stop-color="#1d91c0"/><stop offset="0.667" stop-color="#1d91c0"/><stop offset="0.667" stop-color="#225ea8"/><stop offset="0.778" stop-color="#225ea8"/><stop offset="0.778" stop-color="#253494"/><stop offset="0.889" stop-color="#253494"/><stop offset="0.889" stop-color="#081d58"/><stop offset="1.000" stop-color="#081d58"/></linearGradient></defs><rect x="602.3" y="157.2" width="37.6" height="6.2" fill="url(#cb2)" stroke="#8a8a8a" stroke-width="0.6"/><defs><linearGradient id="cb3"><stop offset="0.000" stop-color="#000000"/><stop offset="0.067" stop-color="#000000"/><stop offset="0.067" stop-color="#000060"/><stop offset="0.133" stop-color="#000060"/><stop offset="0.133" stop-color="#0000d0"/><stop offset="0.200" stop-color="#0000d0"/><stop offset="0.200" stop-color="#0060ff"/><stop offset="0.267" stop-color="#0060ff"/><stop offset="0.267" stop-color="#00c8ff"/><stop offset="0.333" stop-color="#00c8ff"/><stop offset="0.333" stop-color="#00e0a0"/><stop offset="0.400" stop-color="#00e0a0"/><stop offset="0.400" stop-color="#00e000"/><stop offset="0.467" stop-color="#00e000"/><stop offset="0.467" stop-color="#a0f000"/><stop offset="0.533" stop-color="#a0f000"/><stop offset="0.533" stop-color="#ffff00"/><stop offset="0.600" stop-color="#ffff00"/><stop offset="0.600" stop-color="#ff9000"/><stop offset="0.667" stop-color="#ff9000"/><stop offset="0.667" stop-color="#ff0000"/><stop offset="0.733" stop-color="#ff0000"/><stop offset="0.733" stop-color="#ff00a0"/><stop offset="0.800" stop-color="#ff00a0"/><stop offset="0.800" stop-color="#ff60e0"/><stop offset="0.867" stop-color="#ff60e0"/><stop offset="0.867" stop-color="#ffc8f4"/><stop offset="0.933" stop-color="#ffc8f4"/><stop offset="0.933" stop-color="#ffffff"/><stop offset="1.000" stop-color="#ffffff"/></linearGradient></defs><rect x="590.2" y="192.3" width="37.3" height="6.1" fill="url(#cb3)" stroke="#8a8a8a" stroke-width="0.6"/><defs><linearGradient id="cb4"><stop offset="0.000" stop-color="#000000"/><stop offset="0.067" stop-color="#000000"/><stop offset="0.067" stop-color="#000060"/><stop offset="0.133" stop-color="#000060"/><stop offset="0.133" stop-color="#0000d0"/><stop offset="0.200" stop-color="#0000d0"/><stop offset="0.200" stop-color="#0060ff"/><stop offset="0.267" stop-color="#0060ff"/><stop offset="0.267" stop-color="#00c8ff"/><stop offset="0.333" stop-color="#00c8ff"/><stop offset="0.333" stop-color="#00e0a0"/><stop offset="0.400" stop-color="#00e0a0"/><stop offset="0.400" stop-color="#00e000"/><stop offset="0.467" stop-color="#00e000"/><stop offset="0.467" stop-color="#a0f000"/><stop offset="0.533" stop-color="#a0f000"/><stop offset="0.533" stop-color="#ffff00"/><stop offset="0.600" stop-color="#ffff00"/><stop offset="0.600" stop-color="#ff9000"/><stop offset="0.667" stop-color="#ff9000"/><stop offset="0.667" stop-color="#ff0000"/><stop offset="0.733" stop-color="#ff0000"/><stop offset="0.733" stop-color="#ff00a0"/><stop offset="0.800" stop-color="#ff00a0"/><stop offset="0.800" stop-color="#ff60e0"/><stop offset="0.867" stop-color="#ff60e0"/><stop offset="0.867" stop-color="#ffc8f4"/><stop offset="0.933" stop-color="#ffc8f4"/><stop offset="0.933" stop-color="#ffffff"/><stop offset="1.000" stop-color="#ffffff"/></linearGradient></defs><rect x="590.2" y="227.3" width="37.3" height="6.1" fill="url(#cb4)" stroke="#8a8a8a" stroke-width="0.6"/><defs><linearGradient id="cb5"><stop offset="0.000" stop-color="#053061"/><stop offset="0.091" stop-color="#053061"/><stop offset="0.091" stop-color="#2166ac"/><stop offset="0.182" stop-color="#2166ac"/><stop offset="0.182" stop-color="#4393c3"/><stop offset="0.273" stop-color="#4393c3"/><stop offset="0.273" stop-color="#92c5de"/><stop offset="0.364" stop-color="#92c5de"/><stop offset="0.364" stop-color="#d1e5f0"/><stop offset="0.455" stop-color="#d1e5f0"/><stop offset="0.455" stop-color="#f7f7f7"/><stop offset="0.545" stop-color="#f7f7f7"/><stop offset="0.545" stop-color="#fddbc7"/><stop offset="0.636" stop-color="#fddbc7"/><stop offset="0.636" stop-color="#f4a582"/><stop offset="0.727" stop-color="#f4a582"/><stop offset="0.727" stop-color="#d6604d"/><stop offset="0.818" stop-color="#d6604d"/><stop offset="0.818" stop-color="#b2182b"/><stop offset="0.909" stop-color="#b2182b"/><stop offset="0.909" stop-color="#67001f"/><stop offset="1.000" stop-color="#67001f"/></linearGradient></defs><rect x="606.4" y="262.6" width="37.6" height="6.1" fill="url(#cb5)" stroke="#8a8a8a" stroke-width="0.6"/><defs><linearGradient id="cb6"><stop offset="0.000" stop-color="#08695f"/><stop offset="0.100" stop-color="#2a9a94"/><stop offset="0.200" stop-color="#8ab8d8"/><stop offset="0.300" stop-color="#c4c4ea"/><stop offset="0.400" stop-color="#f2ecf8"/><stop offset="0.500" stop-color="#ffffff"/><stop offset="0.600" stop-color="#fde0e4"/><stop offset="0.700" stop-color="#f8a6b8"/><stop offset="0.800" stop-color="#ee5a9a"/><stop offset="0.900" stop-color="#c0108a"/><stop offset="1.000" stop-color="#7a0a80"/></linearGradient></defs><rect x="617.1" y="368.6" width="37.6" height="6.1" fill="url(#cb6)" stroke="#8a8a8a" stroke-width="0.6"/><defs><linearGradient id="cb7"><stop offset="0.000" stop-color="#08695f"/><stop offset="0.100" stop-color="#2a9a94"/><stop offset="0.200" stop-color="#8ab8d8"/><stop offset="0.300" stop-color="#c4c4ea"/><stop offset="0.400" stop-color="#f2ecf8"/><stop offset="0.500" stop-color="#ffffff"/><stop offset="0.600" stop-color="#fde0e4"/><stop offset="0.700" stop-color="#f8a6b8"/><stop offset="0.800" stop-color="#ee5a9a"/><stop offset="0.900" stop-color="#c0108a"/><stop offset="1.000" stop-color="#7a0a80"/></linearGradient></defs><rect x="617.1" y="403.6" width="37.6" height="6.1" fill="url(#cb7)" stroke="#8a8a8a" stroke-width="0.6"/><text x="642.7" y="126.70" font-size="6.4" fill="#000" stroke="#000" stroke-width="0.1" textLength="25.6" lengthAdjust="spacingAndGlyphs" >0-4 uV/Hz</text><text x="642.7" y="162.50" font-size="6.4" fill="#000" stroke="#000" stroke-width="0.1" textLength="25.6" lengthAdjust="spacingAndGlyphs" >0-4 uV/Hz</text><text x="630.8" y="197.80" font-size="6.4" fill="#000" stroke="#000" stroke-width="0.1" textLength="37.2" lengthAdjust="spacingAndGlyphs" >0-2 sqrt(uV)/Hz</text><text x="630.8" y="232.80" font-size="6.4" fill="#000" stroke="#000" stroke-width="0.1" textLength="37.2" lengthAdjust="spacingAndGlyphs" >0-2 sqrt(uV)/Hz</text><text x="646.8" y="267.90" font-size="6.4" fill="#000" stroke="#000" stroke-width="0.1" textLength="21.8" lengthAdjust="spacingAndGlyphs" >-50-50 %</text><text x="658.9" y="374.00" font-size="6.4" fill="#000" stroke="#000" stroke-width="0.1" textLength="8.6" lengthAdjust="spacingAndGlyphs" >-6-6</text><text x="658.9" y="409.00" font-size="6.4" fill="#000" stroke="#000" stroke-width="0.1" textLength="8.6" lengthAdjust="spacingAndGlyphs" >-6-6</text><defs><radialGradient id="ig" cx="0.5" cy="0.68" r="0.62"><stop offset="0" stop-color="#86e4ea"/><stop offset="0.6" stop-color="#3fb4c0"/><stop offset="1" stop-color="#1f8592"/></radialGradient></defs><circle cx="685.4" cy="60.1" r="4.2" fill="url(#ig)" stroke="#6a7072" stroke-width="0.7"/><ellipse cx="685.4" cy="57.5" rx="2.3" ry="1.1" fill="#fff" fill-opacity="0.7"/><text x="685.6" y="63.20" font-size="9.2" fill="#000" class="sf" font-weight="bold" font-style="italic" text-anchor="middle" >i</text><circle cx="685.4" cy="92.4" r="4.2" fill="url(#ig)" stroke="#6a7072" stroke-width="0.7"/><ellipse cx="685.4" cy="89.80000000000001" rx="2.3" ry="1.1" fill="#fff" fill-opacity="0.7"/><text x="685.6" y="95.50" font-size="9.2" fill="#000" class="sf" font-weight="bold" font-style="italic" text-anchor="middle" >i</text><circle cx="685.4" cy="110" r="4.2" fill="url(#ig)" stroke="#6a7072" stroke-width="0.7"/><ellipse cx="685.4" cy="107.4" rx="2.3" ry="1.1" fill="#fff" fill-opacity="0.7"/><text x="685.6" y="113.10" font-size="9.2" fill="#000" class="sf" font-weight="bold" font-style="italic" text-anchor="middle" >i</text><circle cx="685.4" cy="123.8" r="4.2" fill="url(#ig)" stroke="#6a7072" stroke-width="0.7"/><ellipse cx="685.4" cy="121.2" rx="2.3" ry="1.1" fill="#fff" fill-opacity="0.7"/><text x="685.6" y="126.90" font-size="9.2" fill="#000" class="sf" font-weight="bold" font-style="italic" text-anchor="middle" >i</text><circle cx="685.4" cy="159.2" r="4.2" fill="url(#ig)" stroke="#6a7072" stroke-width="0.7"/><ellipse cx="685.4" cy="156.6" rx="2.3" ry="1.1" fill="#fff" fill-opacity="0.7"/><text x="685.6" y="162.30" font-size="9.2" fill="#000" class="sf" font-weight="bold" font-style="italic" text-anchor="middle" >i</text><circle cx="685.4" cy="194.3" r="4.2" fill="url(#ig)" stroke="#6a7072" stroke-width="0.7"/><ellipse cx="685.4" cy="191.70000000000002" rx="2.3" ry="1.1" fill="#fff" fill-opacity="0.7"/><text x="685.6" y="197.40" font-size="9.2" fill="#000" class="sf" font-weight="bold" font-style="italic" text-anchor="middle" >i</text><circle cx="685.4" cy="229.4" r="4.2" fill="url(#ig)" stroke="#6a7072" stroke-width="0.7"/><ellipse cx="685.4" cy="226.8" rx="2.3" ry="1.1" fill="#fff" fill-opacity="0.7"/><text x="685.6" y="232.50" font-size="9.2" fill="#000" class="sf" font-weight="bold" font-style="italic" text-anchor="middle" >i</text><circle cx="685.4" cy="265" r="4.2" fill="url(#ig)" stroke="#6a7072" stroke-width="0.7"/><ellipse cx="685.4" cy="262.4" rx="2.3" ry="1.1" fill="#fff" fill-opacity="0.7"/><text x="685.6" y="268.10" font-size="9.2" fill="#000" class="sf" font-weight="bold" font-style="italic" text-anchor="middle" >i</text><circle cx="685.4" cy="300.2" r="4.2" fill="url(#ig)" stroke="#6a7072" stroke-width="0.7"/><ellipse cx="685.4" cy="297.59999999999997" rx="2.3" ry="1.1" fill="#fff" fill-opacity="0.7"/><text x="685.6" y="303.30" font-size="9.2" fill="#000" class="sf" font-weight="bold" font-style="italic" text-anchor="middle" >i</text><circle cx="685.4" cy="335.9" r="4.2" fill="url(#ig)" stroke="#6a7072" stroke-width="0.7"/><ellipse cx="685.4" cy="333.29999999999995" rx="2.3" ry="1.1" fill="#fff" fill-opacity="0.7"/><text x="685.6" y="339.00" font-size="9.2" fill="#000" class="sf" font-weight="bold" font-style="italic" text-anchor="middle" >i</text><circle cx="685.4" cy="370.9" r="4.2" fill="url(#ig)" stroke="#6a7072" stroke-width="0.7"/><ellipse cx="685.4" cy="368.29999999999995" rx="2.3" ry="1.1" fill="#fff" fill-opacity="0.7"/><text x="685.6" y="374.00" font-size="9.2" fill="#000" class="sf" font-weight="bold" font-style="italic" text-anchor="middle" >i</text><circle cx="685.4" cy="406" r="4.2" fill="url(#ig)" stroke="#6a7072" stroke-width="0.7"/><ellipse cx="685.4" cy="403.4" rx="2.3" ry="1.1" fill="#fff" fill-opacity="0.7"/><text x="685.6" y="409.10" font-size="9.2" fill="#000" class="sf" font-weight="bold" font-style="italic" text-anchor="middle" >i</text><path d="M693.2 64.2h-1.7v22.200000000000003h1.7" fill="none" stroke="#111" stroke-width="0.9"/><text x="693.6" y="70.79" font-size="3.3" fill="#7a9a20" stroke="#7a9a20" stroke-width="0.05" >Muscle</text><text x="693.6" y="76.39" font-size="3.3" fill="#3a6ad0" stroke="#3a6ad0" stroke-width="0.05" >V-Eye</text><text x="693.6" y="81.99" font-size="3.3" fill="#e07a30" stroke="#e07a30" stroke-width="0.05" >Chew</text><path d="M693.2 95.8h-1.7v7.6000000000000085h1.7" fill="none" stroke="#111" stroke-width="0.9"/><text x="694" y="97.66" font-size="3.5" fill="#000" stroke="#000" stroke-width="0.14" >1</text><text x="694" y="103.86" font-size="3.5" fill="#000" stroke="#000" stroke-width="0.14" >0</text><path d="M693.2 114.2h-1.7v4.200000000000003h1.7" fill="none" stroke="#111" stroke-width="0.9"/><text x="694" y="116.86" font-size="3.5" fill="#000" stroke="#000" stroke-width="0.14" >1</text><path d="M693.2 128.4h-1.7v24.19999999999999h1.7" fill="none" stroke="#111" stroke-width="0.9"/><path d="M691.5 134.4h1.2" stroke="#111" stroke-width="0.6"/><path d="M691.5 140.5h1.2" stroke="#111" stroke-width="0.6"/><path d="M691.5 146.6h1.2" stroke="#111" stroke-width="0.6"/><text x="694" y="130.06" font-size="3.5" fill="#000" stroke="#000" stroke-width="0.14" >25 Hz</text><text x="694" y="135.66" font-size="3.5" fill="#000" stroke="#000" stroke-width="0.14" >18</text><text x="694" y="141.46" font-size="3.5" fill="#000" stroke="#000" stroke-width="0.14" >10</text><text x="694" y="147.26" font-size="3.5" fill="#000" stroke="#000" stroke-width="0.14" >5</text><text x="694" y="153.46" font-size="3.5" fill="#000" stroke="#000" stroke-width="0.14" >1 Hz</text><path d="M693.2 163.8h-1.7v23.799999999999983h1.7" fill="none" stroke="#111" stroke-width="0.9"/><path d="M691.5 169.8h1.2" stroke="#111" stroke-width="0.6"/><path d="M691.5 175.7h1.2" stroke="#111" stroke-width="0.6"/><path d="M691.5 181.7h1.2" stroke="#111" stroke-width="0.6"/><text x="694" y="165.46" font-size="3.5" fill="#000" stroke="#000" stroke-width="0.14" >25 Hz</text><text x="694" y="171.06" font-size="3.5" fill="#000" stroke="#000" stroke-width="0.14" >18</text><text x="694" y="176.86" font-size="3.5" fill="#000" stroke="#000" stroke-width="0.14" >10</text><text x="694" y="182.66" font-size="3.5" fill="#000" stroke="#000" stroke-width="0.14" >5</text><text x="694" y="188.66" font-size="3.5" fill="#000" stroke="#000" stroke-width="0.14" >1 Hz</text><path d="M693.2 199.4h-1.7v24.19999999999999h1.7" fill="none" stroke="#111" stroke-width="0.9"/><path d="M691.5 211.5h1.2" stroke="#111" stroke-width="0.6"/><text x="694" y="201.06" font-size="3.5" fill="#000" stroke="#000" stroke-width="0.14" >20 Hz</text><text x="694" y="212.66" font-size="3.5" fill="#000" stroke="#000" stroke-width="0.14" >10</text><text x="694" y="224.46" font-size="3.5" fill="#000" stroke="#000" stroke-width="0.14" >0 Hz</text><path d="M693.2 234.4h-1.7v24.200000000000017h1.7" fill="none" stroke="#111" stroke-width="0.9"/><path d="M691.5 246.5h1.2" stroke="#111" stroke-width="0.6"/><text x="694" y="236.06" font-size="3.5" fill="#000" stroke="#000" stroke-width="0.14" >20 Hz</text><text x="694" y="247.66" font-size="3.5" fill="#000" stroke="#000" stroke-width="0.14" >10</text><text x="694" y="259.46" font-size="3.5" fill="#000" stroke="#000" stroke-width="0.14" >0 Hz</text><path d="M693.2 270.2h-1.7v24.0h1.7" fill="none" stroke="#111" stroke-width="0.9"/><path d="M691.5 282.2h1.2" stroke="#111" stroke-width="0.6"/><text x="694" y="271.86" font-size="3.5" fill="#000" stroke="#000" stroke-width="0.14" >20 Hz</text><text x="694" y="283.26" font-size="3.5" fill="#000" stroke="#000" stroke-width="0.14" >10</text><text x="694" y="295.26" font-size="3.5" fill="#000" stroke="#000" stroke-width="0.14" >0 Hz</text><path d="M693.2 304.8h-1.7v24.19999999999999h1.7" fill="none" stroke="#c01838" stroke-width="0.9"/><path d="M691.5 316.9h1.2" stroke="#c01838" stroke-width="0.6"/><text x="694" y="306.26" font-size="3.5" fill="#000" stroke="#000" stroke-width="0.14" font-weight="bold" >100 uV</text><text x="694" y="317.86" font-size="3.5" fill="#000" stroke="#000" stroke-width="0.14" font-weight="bold" >10 uV</text><text x="694" y="329.86" font-size="3.5" fill="#000" stroke="#000" stroke-width="0.14" font-weight="bold" >0 uV</text><path d="M693.2 340.6h-1.7v24.19999999999999h1.7" fill="none" stroke="#111" stroke-width="0.9"/><text x="694" y="342.26" font-size="3.5" fill="#000" stroke="#000" stroke-width="0.14" >150 bpm</text><text x="694" y="365.66" font-size="3.5" fill="#000" stroke="#000" stroke-width="0.14" >30 bpm</text><path d="M693.2 375.6h-1.7v24.399999999999977h1.7" fill="none" stroke="#111" stroke-width="0.9"/><path d="M691.5 387.8h1.2" stroke="#111" stroke-width="0.6"/><text x="694" y="377.26" font-size="3.5" fill="#000" stroke="#000" stroke-width="0.14" >20</text><text x="694" y="388.86" font-size="3.5" fill="#000" stroke="#000" stroke-width="0.14" >10</text><text x="694" y="400.86" font-size="3.5" fill="#000" stroke="#000" stroke-width="0.14" >0</text><path d="M693.2 410.6h-1.7v24.399999999999977h1.7" fill="none" stroke="#111" stroke-width="0.9"/><path d="M691.5 422.8h1.2" stroke="#111" stroke-width="0.6"/><text x="694" y="412.26" font-size="3.5" fill="#000" stroke="#000" stroke-width="0.14" >20</text><text x="694" y="423.86" font-size="3.5" fill="#000" stroke="#000" stroke-width="0.14" >10</text><text x="694" y="435.86" font-size="3.5" fill="#000" stroke="#000" stroke-width="0.14" >0</text><rect x="21" y="467" width="688" height="1" fill="#555" /><rect x="21" y="468" width="688" height="15" fill="#e4e4e4" /><rect x="66" y="475" width="590.5" height="2" fill="#fff" /><circle cx="30.2" cy="475.7" r="6.2" fill="#0b6a7b"/><circle cx="46" cy="475.7" r="6.2" fill="#0b6a7b"/><circle cx="669.1" cy="475.7" r="6.2" fill="#0b6a7b"/><circle cx="685" cy="475.7" r="6.2" fill="#0b6a7b"/><circle cx="700.9" cy="475.7" r="6.2" fill="#0b6a7b"/><path d="M29.6 471.4l-3.2 4.3l3.2 4.3M33.6 471.4l-3.2 4.3l3.2 4.3" fill="none" stroke="#fff" stroke-width="1.3"/><path d="M47.8 471.4l-3.4 4.3l3.4 4.3" fill="none" stroke="#fff" stroke-width="1.3"/><path d="M667.6 471.4l3.4 4.3l-3.4 4.3" fill="none" stroke="#fff" stroke-width="1.3"/><path d="M681.6 471.4l3.2 4.3l-3.2 4.3M685.6 471.4l3.2 4.3l-3.2 4.3" fill="none" stroke="#fff" stroke-width="1.3"/><path d="M700 472.6l5 3.1l-5 3.1z" fill="none" stroke="#fff" stroke-width="1"/><path d="M697 472.8v5.8M698.6 472.8v5.8" stroke="#fff" stroke-width="0.8"/><circle cx="61.9" cy="475.9" r="3.9" fill="#3e7fb0"/><rect x="59.6" y="474.6" width="4.6" height="2.6" rx="0.8" fill="#9cc4e4"/><rect x="711" y="18" width="120" height="465" fill="#f0f0f0" /><rect x="711" y="18" width="120" height="10.4" fill="#8dbfe8" /><text x="713" y="25.99" font-size="7.2" fill="#000" stroke="#000" stroke-width="0.22" textLength="42" lengthAdjust="spacingAndGlyphs" >Numeric Values</text><path d="M824.8 21.2l3.4 3.6M828.2 21.2l-3.4 3.6" stroke="#333" stroke-width="0.8"/><rect x="711" y="28.4" width="120" height="8.8" fill="#fff" /><text x="738" y="35.00" font-size="7.5" fill="#00001c" stroke="#00001c" stroke-width="0.22" textLength="66.4" lengthAdjust="spacingAndGlyphs" >Artifact Reduction ON</text><rect x="711" y="37" width="120" height="1" fill="#111" /><rect x="711" y="38" width="120" height="7" fill="#e8e8e8" /><text x="746.8" y="43.14" font-size="6.5" fill="#000" stroke="#000" stroke-width="0.1" font-weight="bold" textLength="47.4" lengthAdjust="spacingAndGlyphs" >Seizure Detector</text><rect x="711" y="45" width="120" height="24.2" fill="#27a678" /><path d="M722 57.4h98" stroke="#6cc8a6" stroke-width="0.55" stroke-dasharray="1.6 0.9"/><rect x="711" y="69.2" width="120" height="2.2" fill="#0c0c0c" /><rect x="711" y="71.4" width="120" height="6.6" fill="#ececec" /><text x="771.2" y="77.08" font-size="6.6" fill="#000" stroke="#000" stroke-width="0.22" font-weight="bold" text-anchor="middle" textLength="116" lengthAdjust="spacingAndGlyphs" >aEEG Amplitude (median) L Hemisphere</text><rect x="711" y="78" width="120" height="24.6" fill="#27a678" /><text x="718.6" y="97.15" font-size="18.2" fill="#fff" stroke="#fff" stroke-width="0.1" textLength="37.8" lengthAdjust="spacingAndGlyphs" >2 uV</text><rect x="764" y="78.8" width="0.8" height="23.8" fill="#4f8a70" /><rect x="786.2" y="78.8" width="0.8" height="23.8" fill="#4f8a70" /><rect x="808.2" y="78.8" width="0.8" height="23.8" fill="#4f8a70" /><rect x="764" y="94.2" width="67" height="0.8" fill="#4f8a70" /><text x="775.2" y="90.26" font-size="9.6" fill="#fff" stroke="#fff" stroke-width="0.05" text-anchor="middle" >(X)</text><text x="775.2" y="100.26" font-size="4.6" fill="#c8f0dc" stroke="#c8f0dc" stroke-width="0.08" text-anchor="middle" >LOW</text><text x="797.2" y="90.26" font-size="9.6" fill="#fff" stroke="#fff" stroke-width="0.05" text-anchor="middle" >(X)</text><text x="797.2" y="100.26" font-size="4.6" fill="#c8f0dc" stroke="#c8f0dc" stroke-width="0.08" text-anchor="middle" >HIGH</text><text x="819.6" y="90.26" font-size="9.6" fill="#fff" stroke="#fff" stroke-width="0.05" text-anchor="middle" >0</text><text x="819.6" y="100.26" font-size="4.6" fill="#c8f0dc" stroke="#c8f0dc" stroke-width="0.08" text-anchor="middle" >DUR</text><rect x="711" y="104.4" width="120" height="6.6" fill="#ececec" /><text x="771.2" y="110.08" font-size="6.6" fill="#000" stroke="#000" stroke-width="0.22" font-weight="bold" text-anchor="middle" textLength="116" lengthAdjust="spacingAndGlyphs" >aEEG Amplitude (median) R Hemisphere</text><rect x="711" y="111" width="120" height="24.6" fill="#27a678" /><text x="720.6" y="130.15" font-size="18.2" fill="#fff" stroke="#fff" stroke-width="0.1" textLength="35.8" lengthAdjust="spacingAndGlyphs" >1 uV</text><rect x="764" y="111.8" width="0.8" height="23.8" fill="#4f8a70" /><rect x="786.2" y="111.8" width="0.8" height="23.8" fill="#4f8a70" /><rect x="808.2" y="111.8" width="0.8" height="23.8" fill="#4f8a70" /><rect x="764" y="127.2" width="67" height="0.8" fill="#4f8a70" /><text x="775.2" y="123.26" font-size="9.6" fill="#fff" stroke="#fff" stroke-width="0.05" text-anchor="middle" >(X)</text><text x="775.2" y="133.26" font-size="4.6" fill="#c8f0dc" stroke="#c8f0dc" stroke-width="0.08" text-anchor="middle" >LOW</text><text x="797.2" y="123.26" font-size="9.6" fill="#fff" stroke="#fff" stroke-width="0.05" text-anchor="middle" >(X)</text><text x="797.2" y="133.26" font-size="4.6" fill="#c8f0dc" stroke="#c8f0dc" stroke-width="0.08" text-anchor="middle" >HIGH</text><text x="819.6" y="123.26" font-size="9.6" fill="#fff" stroke="#fff" stroke-width="0.05" text-anchor="middle" >0</text><text x="819.6" y="133.26" font-size="4.6" fill="#c8f0dc" stroke="#c8f0dc" stroke-width="0.08" text-anchor="middle" >DUR</text><rect x="711" y="135.6" width="120" height="2.2" fill="#0c0c0c" /><rect x="711" y="137.8" width="120" height="6.6" fill="#ececec" /><text x="771.2" y="143.48" font-size="6.6" fill="#000" stroke="#000" stroke-width="0.22" font-weight="bold" text-anchor="middle" textLength="59" lengthAdjust="spacingAndGlyphs" >Heart Rate Channel 1</text><rect x="711" y="144.4" width="120" height="24.6" fill="#c8c8c8" /><text x="722.6" y="163.55" font-size="18.2" fill="#111" stroke="#111" stroke-width="0.1" textLength="30.4" lengthAdjust="spacingAndGlyphs" >N/A</text><rect x="764" y="145.2" width="0.8" height="23.8" fill="#8a8a8a" /><rect x="786.2" y="145.2" width="0.8" height="23.8" fill="#8a8a8a" /><rect x="808.2" y="145.2" width="0.8" height="23.8" fill="#8a8a8a" /><rect x="764" y="160.6" width="67" height="0.8" fill="#8a8a8a" /><text x="775.2" y="156.66" font-size="9.6" fill="#111" stroke="#111" stroke-width="0.05" text-anchor="middle" >(X)</text><text x="775.2" y="166.66" font-size="4.6" fill="#444" stroke="#444" stroke-width="0.08" text-anchor="middle" >LOW</text><text x="797.2" y="156.66" font-size="9.6" fill="#111" stroke="#111" stroke-width="0.05" text-anchor="middle" >120</text><text x="797.2" y="166.66" font-size="4.6" fill="#444" stroke="#444" stroke-width="0.08" text-anchor="middle" >HIGH</text><text x="819.6" y="156.66" font-size="9.6" fill="#111" stroke="#111" stroke-width="0.05" text-anchor="middle" >15</text><text x="819.6" y="166.66" font-size="4.6" fill="#444" stroke="#444" stroke-width="0.08" text-anchor="middle" >DUR</text><rect x="711" y="169" width="120" height="1.4" fill="#0c0c0c" /><rect x="711" y="170.4" width="120" height="2.2" fill="#fff" /><rect x="711" y="172.6" width="120" height="1.4" fill="#bbb" /><rect x="711" y="174" width="120" height="10.8" fill="#8dbfe8" /><text x="713" y="182.09" font-size="7.2" fill="#000" stroke="#000" stroke-width="0.22" textLength="29.6" lengthAdjust="spacingAndGlyphs" >Comments</text><path d="M824.8 177.2l3.4 3.6M828.2 177.2l-3.4 3.6" stroke="#333" stroke-width="0.8"/><rect x="712.2" y="185.4" width="118" height="11.6" fill="#e6e6e6" stroke="#adadad" stroke-width="0.7"/><text x="714.4" y="193.79" font-size="7.2" fill="#000" stroke="#000" stroke-width="0.22" textLength="29" lengthAdjust="spacingAndGlyphs" >Display All</text><path d="M823 190.2l2.2 2.2l2.2-2.2" fill="none" stroke="#444" stroke-width="0.8"/><rect x="711" y="197.6" width="120" height="106" fill="#fff" /><text x="712.8" y="206.08" font-size="6.9" fill="#222" stroke="#222" stroke-width="0.22" font-style="italic" textLength="52.6" lengthAdjust="spacingAndGlyphs" >Search comments...</text><circle cx="825.6" cy="202.6" r="1.9" fill="none" stroke="#0b6a7b" stroke-width="1"/><path d="M824.2 204.2l-2 2.2" stroke="#0b6a7b" stroke-width="1.2"/><rect x="794.4" y="210" width="1" height="12" fill="#e4e4e4" /><text x="715.3" y="218.68" font-size="6.9" fill="#000" stroke="#000" stroke-width="0.22" textLength="10.6" lengthAdjust="spacingAndGlyphs" >Text</text><text x="798.4" y="218.68" font-size="6.9" fill="#000" stroke="#000" stroke-width="0.22" textLength="13.6" lengthAdjust="spacingAndGlyphs" >Time</text><text x="715" y="230.35" font-size="6.8" fill="#000" stroke="#000" stroke-width="0.22" textLength="42.6" lengthAdjust="spacingAndGlyphs" >Start Recording</text><text x="797.8" y="230.35" font-size="6.8" fill="#000" stroke="#000" stroke-width="0.22" textLength="22.2" lengthAdjust="spacingAndGlyphs" >09:51:28</text><text x="715" y="240.37" font-size="6.8" fill="#000" stroke="#000" stroke-width="0.22" textLength="61.6" lengthAdjust="spacingAndGlyphs" >Analyzer info - Persyst</text><text x="797.8" y="240.37" font-size="6.8" fill="#000" stroke="#000" stroke-width="0.22" textLength="22.2" lengthAdjust="spacingAndGlyphs" >09:51:28</text><text x="715" y="250.39" font-size="6.8" fill="#000" stroke="#000" stroke-width="0.22" textLength="78" lengthAdjust="spacingAndGlyphs" >Started Analyzer - XLEvent...</text><text x="797.8" y="250.39" font-size="6.8" fill="#000" stroke="#000" stroke-width="0.22" textLength="22.2" lengthAdjust="spacingAndGlyphs" >09:51:28</text><text x="715" y="260.41" font-size="6.8" fill="#000" stroke="#000" stroke-width="0.22" textLength="62" lengthAdjust="spacingAndGlyphs" >Started Analyzer - DSA</text><text x="797.8" y="260.41" font-size="6.8" fill="#000" stroke="#000" stroke-width="0.22" textLength="22.2" lengthAdjust="spacingAndGlyphs" >09:51:28</text><text x="715" y="270.43" font-size="6.8" fill="#000" stroke="#000" stroke-width="0.22" textLength="70" lengthAdjust="spacingAndGlyphs" >Started Analyzer - Persyst</text><text x="797.8" y="270.43" font-size="6.8" fill="#000" stroke="#000" stroke-width="0.22" textLength="22.2" lengthAdjust="spacingAndGlyphs" >09:51:28</text><text x="715" y="280.45" font-size="6.8" fill="#000" stroke="#000" stroke-width="0.22" textLength="72.4" lengthAdjust="spacingAndGlyphs" >Started Analyzer - XLSpike</text><text x="797.8" y="280.45" font-size="6.8" fill="#000" stroke="#000" stroke-width="0.22" textLength="22.2" lengthAdjust="spacingAndGlyphs" >09:51:28</text><text x="715" y="290.47" font-size="6.8" fill="#000" stroke="#000" stroke-width="0.22" textLength="52.6" lengthAdjust="spacingAndGlyphs" >Video System Error</text><text x="797.8" y="290.47" font-size="6.8" fill="#000" stroke="#000" stroke-width="0.22" textLength="22.2" lengthAdjust="spacingAndGlyphs" >09:51:43</text><text x="715" y="300.49" font-size="6.8" fill="#1c1ce0" stroke="#1c1ce0" stroke-width="0.22" textLength="59.6" lengthAdjust="spacingAndGlyphs" >SpikeGen Cz-T34 0.52</text><text x="797.8" y="300.49" font-size="6.8" fill="#1c1ce0" stroke="#1c1ce0" stroke-width="0.22" textLength="22.2" lengthAdjust="spacingAndGlyphs" >09:51:43</text><rect x="822" y="210" width="9" height="93" fill="#f0f0f0" /><rect x="822" y="219.4" width="8" height="26.4" fill="#c9c9c9" /><path d="M824.4 216.4l2-2l2 2M824.4 297.2l2 2l2-2" fill="none" stroke="#444" stroke-width="0.8"/><rect x="711" y="303.2" width="120" height="8" fill="#f0f0f0" /><rect x="721.2" y="303.6" width="50.6" height="7.2" fill="#c9c9c9" /><path d="M717.4 305.2l-2 2l2 2M815.6 305.2l2 2l-2 2" fill="none" stroke="#444" stroke-width="0.8"/><rect x="711" y="314" width="120" height="1" fill="#a8a8a8" /><rect x="712.3" y="316" width="117.5" height="10.5" fill="#e2e2e2" stroke="#a6a6a6" stroke-width="0.7"/><text x="771.2" y="323.82" font-size="7" fill="#000" stroke="#000" stroke-width="0.22" text-anchor="middle" textLength="45" lengthAdjust="spacingAndGlyphs" >Customize Filter</text><rect x="711" y="329.8" width="120" height="11.2" fill="#8dbfe8" /><text x="712.4" y="337.99" font-size="7.2" fill="#000" stroke="#000" stroke-width="0.22" textLength="66.2" lengthAdjust="spacingAndGlyphs" >Electrode Signal Quality</text><path d="M824.8 333.2l3.4 3.6M828.2 333.2l-3.4 3.6" stroke="#333" stroke-width="0.8"/><rect x="711" y="341" width="120" height="142" fill="#fff" /><text x="721" y="346.80" font-size="6.4" fill="#0a0a30" stroke="#0a0a30" stroke-width="0.22" textLength="100" lengthAdjust="spacingAndGlyphs" >Last 300 seconds, 50% artifact threshold</text><path d="M764.900 358.900l6.500-7.200l6.500 7.200z" fill="#828282"/><circle cx="771.2" cy="417.800" r="59.300" fill="none" stroke="#808080" stroke-width="1.3"/><circle cx="754.1" cy="366.3" r="6.4" fill="#08e008" stroke="#000800" stroke-width="0.9" stroke-opacity="0.95" stroke-dasharray="1 2.35"/><circle cx="754.1" cy="366.3" r="3.9" fill="#828282" stroke="#203020" stroke-width="0.55"/><text x="753.8" y="358.60" font-size="6.5" fill="#14147c" stroke="#14147c" stroke-width="0.14" textLength="10.3" lengthAdjust="spacingAndGlyphs" >FP1</text><circle cx="787.4" cy="366.3" r="6.4" fill="#08e008" stroke="#000800" stroke-width="0.9" stroke-opacity="0.95" stroke-dasharray="1 2.35"/><circle cx="787.4" cy="366.3" r="3.9" fill="#828282" stroke="#203020" stroke-width="0.55"/><text x="787.1" y="358.60" font-size="6.5" fill="#14147c" stroke="#14147c" stroke-width="0.14" textLength="10.3" lengthAdjust="spacingAndGlyphs" >FP2</text><circle cx="727.6" cy="385.9" r="6.4" fill="#08e008" stroke="#000800" stroke-width="0.9" stroke-opacity="0.95" stroke-dasharray="1 2.35"/><circle cx="727.6" cy="385.9" r="3.9" fill="#828282" stroke="#203020" stroke-width="0.55"/><text x="727.3" y="378.20" font-size="6.5" fill="#14147c" stroke="#14147c" stroke-width="0.14" textLength="6.5" lengthAdjust="spacingAndGlyphs" >F7</text><circle cx="747.4" cy="389.3" r="6.4" fill="#08e008" stroke="#000800" stroke-width="0.9" stroke-opacity="0.95" stroke-dasharray="1 2.35"/><circle cx="747.4" cy="389.3" r="3.9" fill="#828282" stroke="#203020" stroke-width="0.55"/><text x="747.1" y="381.60" font-size="6.5" fill="#14147c" stroke="#14147c" stroke-width="0.14" textLength="6.5" lengthAdjust="spacingAndGlyphs" >F3</text><circle cx="771.2" cy="390.8" r="6.4" fill="#08e008" stroke="#000800" stroke-width="0.9" stroke-opacity="0.95" stroke-dasharray="1 2.35"/><circle cx="771.2" cy="390.8" r="3.9" fill="#828282" stroke="#203020" stroke-width="0.55"/><text x="770.9" y="383.10" font-size="6.5" fill="#14147c" stroke="#14147c" stroke-width="0.14" textLength="6.8" lengthAdjust="spacingAndGlyphs" >FZ</text><circle cx="794.3" cy="389.3" r="6.4" fill="#08e008" stroke="#000800" stroke-width="0.9" stroke-opacity="0.95" stroke-dasharray="1 2.35"/><circle cx="794.3" cy="389.3" r="3.9" fill="#828282" stroke="#203020" stroke-width="0.55"/><text x="794" y="381.60" font-size="6.5" fill="#14147c" stroke="#14147c" stroke-width="0.14" textLength="6.5" lengthAdjust="spacingAndGlyphs" >F4</text><circle cx="813.9" cy="385.9" r="6.4" fill="#08e008" stroke="#000800" stroke-width="0.9" stroke-opacity="0.95" stroke-dasharray="1 2.35"/><circle cx="813.9" cy="385.9" r="3.9" fill="#828282" stroke="#203020" stroke-width="0.55"/><text x="813.6" y="378.20" font-size="6.5" fill="#14147c" stroke="#14147c" stroke-width="0.14" textLength="6.5" lengthAdjust="spacingAndGlyphs" >F8</text><circle cx="717.9" cy="417.5" r="6.4" fill="#08e008" stroke="#000800" stroke-width="0.9" stroke-opacity="0.95" stroke-dasharray="1 2.35"/><circle cx="717.9" cy="417.5" r="3.9" fill="#828282" stroke="#203020" stroke-width="0.55"/><text x="717.6" y="409.80" font-size="6.5" fill="#14147c" stroke="#14147c" stroke-width="0.14" textLength="6.5" lengthAdjust="spacingAndGlyphs" >T7</text><circle cx="744.4" cy="417.5" r="6.4" fill="#08e008" stroke="#000800" stroke-width="0.9" stroke-opacity="0.95" stroke-dasharray="1 2.35"/><circle cx="744.4" cy="417.5" r="3.9" fill="#828282" stroke="#203020" stroke-width="0.55"/><text x="744.1" y="409.80" font-size="6.5" fill="#14147c" stroke="#14147c" stroke-width="0.14" textLength="7.1" lengthAdjust="spacingAndGlyphs" >C3</text><circle cx="771.2" cy="417.5" r="6.4" fill="#08e008" stroke="#000800" stroke-width="0.9" stroke-opacity="0.95" stroke-dasharray="1 2.35"/><circle cx="771.2" cy="417.5" r="3.9" fill="#828282" stroke="#203020" stroke-width="0.55"/><text x="770.9" y="409.80" font-size="6.5" fill="#14147c" stroke="#14147c" stroke-width="0.14" textLength="7.5" lengthAdjust="spacingAndGlyphs" >CZ</text><circle cx="797.8" cy="417.5" r="6.4" fill="#08e008" stroke="#000800" stroke-width="0.9" stroke-opacity="0.95" stroke-dasharray="1 2.35"/><circle cx="797.8" cy="417.5" r="3.9" fill="#828282" stroke="#203020" stroke-width="0.55"/><text x="797.5" y="409.80" font-size="6.5" fill="#14147c" stroke="#14147c" stroke-width="0.14" textLength="7.1" lengthAdjust="spacingAndGlyphs" >C4</text><circle cx="824.8" cy="417.5" r="6.4" fill="#08e008" stroke="#000800" stroke-width="0.9" stroke-opacity="0.95" stroke-dasharray="1 2.35"/><circle cx="824.8" cy="417.5" r="3.9" fill="#828282" stroke="#203020" stroke-width="0.55"/><text x="824.5" y="409.80" font-size="6.5" fill="#14147c" stroke="#14147c" stroke-width="0.14" textLength="6.5" lengthAdjust="spacingAndGlyphs" >T8</text><circle cx="727.6" cy="448.7" r="6.4" fill="#08e008" stroke="#000800" stroke-width="0.9" stroke-opacity="0.95" stroke-dasharray="1 2.35"/><circle cx="727.6" cy="448.7" r="3.9" fill="#828282" stroke="#203020" stroke-width="0.55"/><text x="727.3" y="441.00" font-size="6.5" fill="#14147c" stroke="#14147c" stroke-width="0.14" textLength="6.8" lengthAdjust="spacingAndGlyphs" >P7</text><circle cx="747.4" cy="445" r="6.4" fill="#08e008" stroke="#000800" stroke-width="0.9" stroke-opacity="0.95" stroke-dasharray="1 2.35"/><circle cx="747.4" cy="445" r="3.9" fill="#828282" stroke="#203020" stroke-width="0.55"/><text x="747.1" y="437.30" font-size="6.5" fill="#9fb0e0" stroke="#9fb0e0" stroke-width="0.14" textLength="6.8" lengthAdjust="spacingAndGlyphs" >P3</text><circle cx="771.2" cy="444" r="6.4" fill="#08e008" stroke="#000800" stroke-width="0.9" stroke-opacity="0.95" stroke-dasharray="1 2.35"/><circle cx="771.2" cy="444" r="3.9" fill="#828282" stroke="#203020" stroke-width="0.55"/><text x="770.9" y="436.30" font-size="6.5" fill="#b8b4e0" stroke="#b8b4e0" stroke-width="0.14" textLength="7.1" lengthAdjust="spacingAndGlyphs" >PZ</text><circle cx="794.3" cy="445" r="6.4" fill="#08e008" stroke="#000800" stroke-width="0.9" stroke-opacity="0.95" stroke-dasharray="1 2.35"/><circle cx="794.3" cy="445" r="3.9" fill="#828282" stroke="#203020" stroke-width="0.55"/><text x="794" y="437.30" font-size="6.5" fill="#8fb4ea" stroke="#8fb4ea" stroke-width="0.14" textLength="6.8" lengthAdjust="spacingAndGlyphs" >P4</text><circle cx="813.9" cy="448.7" r="6.4" fill="#08e008" stroke="#000800" stroke-width="0.9" stroke-opacity="0.95" stroke-dasharray="1 2.35"/><circle cx="813.9" cy="448.7" r="3.9" fill="#828282" stroke="#203020" stroke-width="0.55"/><text x="813.6" y="441.00" font-size="6.5" fill="#14147c" stroke="#14147c" stroke-width="0.14" textLength="6.8" lengthAdjust="spacingAndGlyphs" >P8</text><circle cx="754.1" cy="468.4" r="6.4" fill="#08e008" stroke="#000800" stroke-width="0.9" stroke-opacity="0.95" stroke-dasharray="1 2.35"/><circle cx="754.1" cy="468.4" r="3.9" fill="#828282" stroke="#203020" stroke-width="0.55"/><text x="753.8" y="460.70" font-size="6.5" fill="#14147c" stroke="#14147c" stroke-width="0.14" textLength="7.5" lengthAdjust="spacingAndGlyphs" >O1</text><circle cx="787.4" cy="468.4" r="6.4" fill="#08e008" stroke="#000800" stroke-width="0.9" stroke-opacity="0.95" stroke-dasharray="1 2.35"/><circle cx="787.4" cy="468.4" r="3.9" fill="#828282" stroke="#203020" stroke-width="0.55"/><text x="787.1" y="460.70" font-size="6.5" fill="#14147c" stroke="#14147c" stroke-width="0.14" textLength="7.5" lengthAdjust="spacingAndGlyphs" >O2</text><rect x="831" y="17" width="2" height="468" fill="#e4e4e4" />
</svg>
</body></html>
